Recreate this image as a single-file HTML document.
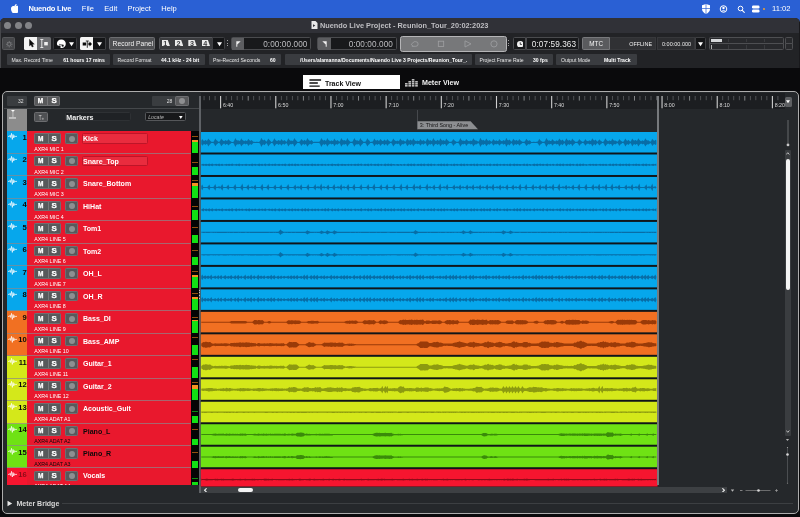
<!DOCTYPE html><html><head><meta charset="utf-8"><title>Nuendo Live Project</title><style>
*{box-sizing:border-box;margin:0;padding:0}
html,body{width:800px;height:517px;overflow:hidden;background:#0a0a0c}
body{position:relative;font-family:"Liberation Sans",sans-serif;color:#fff;-webkit-font-smoothing:antialiased}
#root{position:absolute;left:0;top:0;width:800px;height:517px;transform:translateZ(0);will-change:transform}
.a{position:absolute}
.t{position:absolute;white-space:nowrap;line-height:1}
#menubar{left:0;top:0;width:800px;height:26px;background:#2a60d4}
#menubar .t{font-size:7.500px;top:5.300px;color:#fff}
#win{left:0;top:18px;width:800px;height:49.500px;background:#222326;border-radius:5px 5px 0 0;overflow:hidden}
#titlebar{left:0;top:0;width:800px;height:15px;background:#303137}
.tl{width:7px;height:7px;border-radius:50%;background:#828387;top:4.100px}
#panel{left:2px;top:90.800px;width:796.500px;height:423.600px;border:1.600px solid #adadad;border-radius:5px;background:#25282b;overflow:hidden}
.btn{background:#58595b;border:0.600px solid #6e6f72;border-radius:1.200px}
.ms{font-family:"Liberation Sans",sans-serif;font-weight:bold;font-size:6.500px;color:#fff;-webkit-text-stroke:0.250px #fff}
.info{top:54.300px;height:10.700px;background:#3a3c40;border-radius:1px}
.info .t{font-size:5.100px;top:3.400px;color:#e8e8e8}
.info .b{font-weight:bold;color:#fff}
.tfield{background:#18191b;border:0.6px solid #4c4d50;border-radius:1.5px}
</style></head><body><div id="root">
<div id="menubar" class="a">
<svg class="a" style="left:10.500px;top:4px" width="7.600" height="9.200" viewBox="0 0 170 200"><path fill="#fff" d="M150 153c-3 7-7 14-11 20-6 8-11 14-14 17-6 5-12 8-18 8-5 0-10-1-17-4-6-3-12-4-18-4s-12 1-19 4c-6 3-12 4-16 4-6 0-13-3-19-9-4-3-9-9-15-18C-3 162-8 150-12 137-16 123-18 110-18 97c0-15 3-28 10-38 5-8 12-15 20-20 8-5 17-7 27-7 5 0 12 2 21 5 9 3 14 5 17 5 2 0 8-2 19-6 10-4 19-5 26-5 19 2 34 9 44 23-17 10-26 25-26 44 0 15 6 27 16 37 5 4 10 8 16 10-1 4-3 7-4 11zM107-6c0 11-4 22-12 32-10 12-22 18-35 17 0-1 0-3 0-4 0-11 5-23 13-32 4-5 10-9 16-12 7-3 13-5 19-5 0 1 0 3 0 4z" transform="translate(18 8)"/></svg>
<div class="t" style="left:28.5px;font-weight:bold;letter-spacing:-0.200px;">Nuendo Live</div>
<div class="t" style="left:81.8px;">File</div>
<div class="t" style="left:104.3px;">Edit</div>
<div class="t" style="left:127.5px;">Project</div>
<div class="t" style="left:161.3px;">Help</div>
<div class="t" style="left:772px;font-size:7.600px">11:02</div>
<svg class="a" style="left:700px;top:3px" width="70" height="12" viewBox="0 0 70 12"><path d="M6 1 L10 2.2 V6 C10 8.5 8 10 6 11 C4 10 2 8.500 2 6 V2.200 Z" fill="#fff"/><path d="M6 1V11M2 5.500H10" stroke="#2a60d4" stroke-width="0.700"/><circle cx="23.500" cy="6" r="3.300" fill="none" stroke="#fff" stroke-width="1"/><circle cx="23.500" cy="5" r="1.200" fill="#fff"/><path d="M21.300 8.200a2.500 2 0 0 1 4.400 0z" fill="#fff"/><circle cx="40.500" cy="5.500" r="2.300" fill="none" stroke="#fff" stroke-width="1"/><path d="M42.200 7.300L44.300 9.400" stroke="#fff" stroke-width="1.100" stroke-linecap="round"/><rect x="52" y="2.500" width="7.500" height="3" rx="1.200" fill="#fff"/><rect x="52" y="6.500" width="7.500" height="3" rx="1.200" fill="#fff"/><circle cx="64" cy="6" r="1" fill="#f0a030"/></svg>
</div>
<div id="win" class="a">
<div id="titlebar" class="a">
<div class="a tl" style="left:4px"></div>
<div class="a tl" style="left:14.6px"></div>
<div class="a tl" style="left:25.4px"></div>
<svg class="a" style="left:310.500px;top:3px" width="7" height="8" viewBox="0 0 7 8"><path d="M0.500 0H4.500L6.500 2V8H0.500Z" fill="#e8e8e8"/><path d="M2 3.200L4.300 4.600L2 6Z" fill="#303137"/></svg>
<div class="t" style="left:320px;top:3.800px;font-size:7.350px;font-weight:bold;color:#bebec2">Nuendo Live Project - Reunion_Tour_20:02:2023</div>
</div>
</div>
<div class="a" style="left:2px;top:37px;width:13.3px;height:13.2px;background:#454649;border:0.600px solid #57585b;border-radius:1.500px"><svg class="a" style="left:3.200px;top:3px" width="6.500" height="6.500" viewBox="0 0 10 10"><circle cx="5" cy="5" r="2.600" fill="none" stroke="#737477" stroke-width="1.600"/><g stroke="#737477" stroke-width="1.500"><path d="M5 0V2M5 8V10M0 5H2M8 5H10M1.500 1.500L2.900 2.900M7.100 7.100L8.500 8.500M1.500 8.500L2.900 7.100M7.100 2.900L8.500 1.500"/></g></svg></div>
<div class="a" style="left:24px;top:37px;width:13.3px;height:13px;background:#f4f4f4;border-radius:1.5px 0 0 1.5px"><svg class="a" style="left:4.600px;top:2.300px" width="6" height="8.500" viewBox="0 0 6 8.500"><path d="M0.400 0.200V7L2 5.700L3 8.100L4.400 7.500L3.400 5.200H5.400Z" fill="#0a0a0a" stroke="#0a0a0a" stroke-width="0.300"/></svg></div>
<div class="a" style="left:37.3px;top:37px;width:13.4px;height:13px;background:#6c6d70;border-radius:0 1.500px 1.500px 0"><svg class="a" style="left:2.500px;top:2px" width="10" height="9" viewBox="0 0 10 9"><path d="M0.300 0.500H3.300M0.300 8.500H3.300M1.800 0.500V8.500" stroke="#f0f0f0" stroke-width="0.900" fill="none"/><rect x="4.200" y="3" width="3.600" height="3.400" fill="#f0f0f0"/></svg></div>
<div class="a" style="left:53.4px;top:37px;width:23.3px;height:13px;background:#141517;border:0.600px solid #3a3b3e;border-radius:1.500px"><svg class="a" style="left:1.300px;top:0.900px" width="20" height="10" viewBox="0 0 20 10"><path d="M5.300 0.600C7.900 0.600 9.800 2.400 9.800 4.800C9.800 7.300 8 9.100 5.600 9.100C4.600 9.100 4.200 8.500 4.500 7.700C4.800 6.900 4.200 6.400 3.300 6.700C2 7.100 0.900 6.300 0.900 4.800C0.900 2.400 2.700 0.600 5.300 0.600Z" fill="#fff"/><circle cx="6.700" cy="6.700" r="1.100" fill="#141517"/><path d="M3 5.300L6 5.900" stroke="#141517" stroke-width="0.600"/><path d="M13 3.200H18L15.500 7.200Z" fill="#fff"/></svg></div>
<div class="a" style="left:80px;top:37px;width:13.2px;height:13px;background:#f4f4f4;border-radius:1.5px 0 0 1.5px"><svg class="a" style="left:1.500px;top:1.500px" width="10" height="10" viewBox="0 0 10 10"><path d="M0.700 3.500H4.200V6.500H0.700Z M6.400 3.700H7.600V2.400L10 5L7.600 7.600V6.300H6.400Z" fill="#0a0a0a"/><path d="M5.300 2V8.800M3.800 2H6.800" stroke="#0a0a0a" stroke-width="0.800"/></svg></div>
<div class="a" style="left:93.2px;top:37px;width:12.8px;height:13px;background:#141517;border:0.6px solid #3e3f42;border-left:none;border-radius:0 1.500px 1.500px 0"><svg class="a" style="left:3.500px;top:4.200px" width="5" height="4.500" viewBox="0 0 5 4"><path d="M0 0H5L2.500 4Z" fill="#fff"/></svg></div>
<div class="a" style="left:109px;top:37px;width:46px;height:13px;background:#4e4f52;border:0.6px solid #6c6d70;border-radius:1.5px"><div class="t" style="left:2.600px;top:3.200px;font-size:6.700px;color:#f2f2f2">Record Panel</div></div>
<div class="a" style="left:159px;top:37px;width:54px;height:13px;background:#3a3b3e;border:0.600px solid #55565a;border-radius:1.500px 0 0 1.500px"></div>
<div class="a" style="left:161.6px;top:39.500px;width:8.400px;height:6.800px;background:#ececec;clip-path:polygon(0 0,72% 0,100% 100%,0 100%)"><div class="t" style="left:1.600px;top:0px;font-size:7.200px;font-weight:bold;color:#3a3b3e">1</div></div>
<div class="a" style="left:174.97px;top:39.500px;width:8.400px;height:6.800px;background:#ececec;clip-path:polygon(0 0,72% 0,100% 100%,0 100%)"><div class="t" style="left:1.600px;top:0px;font-size:7.200px;font-weight:bold;color:#3a3b3e">2</div></div>
<div class="a" style="left:188.34px;top:39.500px;width:8.400px;height:6.800px;background:#ececec;clip-path:polygon(0 0,72% 0,100% 100%,0 100%)"><div class="t" style="left:1.600px;top:0px;font-size:7.200px;font-weight:bold;color:#3a3b3e">3</div></div>
<div class="a" style="left:201.70999999999998px;top:39.500px;width:8.400px;height:6.800px;background:#ececec;clip-path:polygon(0 0,72% 0,100% 100%,0 100%)"><div class="t" style="left:1.600px;top:0px;font-size:7.200px;font-weight:bold;color:#3a3b3e">4</div></div>
<div class="a" style="left:212.3px;top:37px;width:13px;height:13px;background:#141517;border:0.600px solid #3e3f42;border-radius:0 1.500px 1.500px 0"><svg class="a" style="left:3.800px;top:4.200px" width="5" height="4.500" viewBox="0 0 5 4"><path d="M0 0H5L2.500 4Z" fill="#fff"/></svg></div>
<div class="a" style="left:227px;top:40.3px;width:1px;height:1px;background:#a0a0a0"></div>
<div class="a" style="left:227px;top:42.599999999999994px;width:1px;height:1px;background:#a0a0a0"></div>
<div class="a" style="left:227px;top:44.9px;width:1px;height:1px;background:#a0a0a0"></div>
<div class="a" style="left:230.8px;top:37px;width:80.7px;height:13px;background:#18191b;border:0.6px solid #4a4b4e;border-radius:1.5px"><div class="a" style="left:0;top:0;width:12.500px;height:11.800px;background:#5c5d60"><svg class="a" style="left:4px;top:3px" width="5" height="6" viewBox="0 0 5 6"><path d="M0.300 0.300H4.700L1.300 3.600V5.800H0.300Z" fill="#eee"/></svg></div><div class="t" style="right:3px;top:2.600px;font-size:8.200px;color:#bdbdc0;letter-spacing:0.100px">0:00:00.000</div></div>
<div class="a" style="left:317px;top:37px;width:80px;height:13px;background:#18191b;border:0.6px solid #4a4b4e;border-radius:1.5px"><div class="a" style="left:0;top:0;width:12.500px;height:11.800px;background:#5c5d60"><svg class="a" style="left:3.500px;top:3px" width="5" height="6" viewBox="0 0 5 6"><path d="M0.300 0.300H4.700V5.800H3.700V3.600Z" fill="#eee"/></svg></div><div class="t" style="right:3px;top:2.600px;font-size:8.200px;color:#bdbdc0;letter-spacing:0.100px">0:00:00.000</div></div>
<div class="a" style="left:400px;top:35.5px;width:106.5px;height:16px;background:#77787a;border:1.200px solid #b5b5b7;border-radius:2.500px"><svg class="a" style="left:0;top:0" width="104" height="13.600" viewBox="0 0 104 13.600"><g fill="none" stroke="#a0a1a3" stroke-width="0.800"><path d="M10.800 9.300H14.800A2.300 2.300 0 0 0 14.800 4.700H13.200L10.200 7.300L12 9.300"/><rect x="37.300" y="4.200" width="5.400" height="5.400"/><path d="M64 3.800L70 6.900L64 10Z"/><circle cx="93" cy="6.900" r="3.100"/></g></svg></div>
<div class="a" style="left:507.8px;top:40.3px;width:1px;height:1px;background:#a0a0a0"></div>
<div class="a" style="left:507.8px;top:42.599999999999994px;width:1px;height:1px;background:#a0a0a0"></div>
<div class="a" style="left:507.8px;top:44.9px;width:1px;height:1px;background:#a0a0a0"></div>
<div class="a" style="left:513px;top:37px;width:12.5px;height:13px;background:#18191b;border:0.600px solid #4a4b4e;border-radius:1.500px 0 0 1.500px"><svg class="a" style="left:2.700px;top:2.800px" width="6.500" height="6.500" viewBox="0 0 10 10"><circle cx="5" cy="5" r="5" fill="#f2f2f2"/><path d="M5 2V5.300H7.500" stroke="#18191b" stroke-width="1.200" fill="none"/></svg></div>
<div class="a" style="left:525.5px;top:37px;width:53.5px;height:13px;background:#18191b;border:0.6px solid #4a4b4e;border-radius:0 1.500px 1.500px 0"><div class="t" style="left:5.300px;top:2.500px;font-size:8.200px;color:#ececec;letter-spacing:0.1px">0:07:59.363</div></div>
<div class="a" style="left:582px;top:37px;width:27.5px;height:13px;background:#5a5b5e;border:0.6px solid #78797c;border-radius:1.5px 0 0 1.5px"><div class="t" style="left:6.300px;top:3.400px;font-size:6.300px;color:#f4f4f4">MTC</div></div>
<div class="a" style="left:609.5px;top:37px;width:46px;height:13px;background:#303134;border:0.600px solid #37383b;border-left:none"><div class="t" style="right:2.500px;top:3.700px;font-size:5.400px;color:#f2f2f2">OFFLINE</div></div>
<div class="a" style="left:656.5px;top:37px;width:38px;height:13px;background:#2c2d30;border:0.600px solid #37383b"><div class="t" style="left:4.500px;top:3.700px;font-size:5.500px;color:#ececec">0:00:00.000</div></div>
<div class="a" style="left:694.5px;top:37px;width:11px;height:13px;background:#141517;border:0.6px solid #3e3f42;border-radius:0 1.500px 1.500px 0"><svg class="a" style="left:2.800px;top:4.200px" width="5" height="4.500" viewBox="0 0 5 4"><path d="M0 0H5L2.500 4Z" fill="#fff"/></svg></div>
<div class="a" style="left:709px;top:37px;width:74.7px;height:7px;background:#28292c;border:0.600px solid #4e4f52;border-radius:1.500px 1.500px 0 0"><div class="a" style="left:1px;top:0.800px;width:10.500px;height:3.200px;background:#d6d8da"></div><div class="a" style="left:18px;top:0.800px;width:0.600px;height:3.200px;background:#3a3b3e"></div><div class="a" style="left:36px;top:0.800px;width:0.600px;height:3.200px;background:#3a3b3e"></div><div class="a" style="left:54px;top:0.800px;width:0.600px;height:3.200px;background:#3a3b3e"></div></div>
<div class="a" style="left:709px;top:43.4px;width:74.7px;height:7px;background:#28292c;border:0.600px solid #4e4f52;border-radius:0 0 1.500px 1.500px"><div class="a" style="left:1px;top:1px;width:0.800px;height:3.200px;background:#b0b0b0"></div><div class="a" style="left:18px;top:1px;width:0.600px;height:3.200px;background:#3a3b3e"></div><div class="a" style="left:36px;top:1px;width:0.600px;height:3.200px;background:#3a3b3e"></div><div class="a" style="left:54px;top:1px;width:0.600px;height:3.200px;background:#3a3b3e"></div></div>
<div class="a" style="left:785.2px;top:37px;width:7.5px;height:7px;background:#28292c;border:0.600px solid #4e4f52;border-radius:1.500px 1.500px 0 0"></div>
<div class="a" style="left:785.2px;top:43.4px;width:7.5px;height:7px;background:#28292c;border:0.600px solid #4e4f52;border-radius:0 0 1.500px 1.500px"></div>
<div class="a info" style="left:7px;width:102.5px"><div class="t" style="left:4.5px">Max. Record Time</div><div class="t b" style="left:56.2px">61 hours 17 mins</div></div>
<div class="a info" style="left:113px;width:91.5px"><div class="t" style="left:4.5px">Record Format</div><div class="t b" style="left:48px">44.1 kHz - 24 bit</div></div>
<div class="a info" style="left:208.5px;width:72.5px"><div class="t" style="left:4.5px">Pre-Record Seconds</div><div class="t b" style="left:61.5px">60</div></div>
<div class="a info" style="left:284.5px;width:187px"><div class="t b" style="left:15.5px">/Users/alamanna/Documents/Nuendo Live 3 Projects/Reunion_Tour_.</div></div>
<div class="a info" style="left:475px;width:77.5px"><div class="t" style="left:4.5px">Project Frame Rate</div><div class="t b" style="left:58px">30 fps</div></div>
<div class="a info" style="left:556px;width:80.5px"><div class="t" style="left:5px">Output Mode</div><div class="t b" style="left:48px">Multi Track</div></div>
<div class="a" style="left:0px;top:22px;width:1px;height:45.5px;background:#46474b"></div>
<div class="a" style="left:799px;top:22px;width:1px;height:45.5px;background:#19191c"></div>
<div class="a" style="left:303px;top:75px;width:97px;height:14.4px;background:#fff"><svg class="a" style="left:5.500px;top:4.200px" width="13" height="8.400" viewBox="0 0 13 9"><path d="M0 1H12.500M0 4.300H9M0 7.600H11" stroke="#111" stroke-width="1.500"/></svg><div class="t" style="left:22px;top:4.500px;font-size:7px;font-weight:bold;color:#111">Track View</div></div>
<svg class="a" style="left:404.500px;top:78.800px" width="13" height="8" viewBox="0 0 13 8"><g fill="#e6e6e6"><rect x="0" y="4.200" width="2.600" height="1.300"/><rect x="0" y="6.200" width="2.600" height="1.300"/><rect x="3.400" y="2.200" width="2.600" height="1.300"/><rect x="3.400" y="4.200" width="2.600" height="1.300"/><rect x="3.400" y="6.200" width="2.600" height="1.300"/><rect x="6.800" y="0.200" width="2.600" height="1.300"/><rect x="6.800" y="2.200" width="2.600" height="1.300"/><rect x="6.800" y="4.200" width="2.600" height="1.300"/><rect x="6.800" y="6.200" width="2.600" height="1.300"/><rect x="10.200" y="2.200" width="2.600" height="1.300"/><rect x="10.200" y="4.200" width="2.600" height="1.300"/><rect x="10.200" y="6.200" width="2.600" height="1.300"/></g></svg>
<div class="t" style="left:422px;top:79.800px;font-size:7.100px;font-weight:bold;color:#f0f0f0">Meter View</div>
<div id="panel" class="a"></div>
<div class="a" style="left:4px;top:108.3px;width:195.5px;height:0.8px;background:#45484b"></div>
<div class="a" style="left:7px;top:96px;width:19.5px;height:9.8px;background:#3a3d40;border-radius:1px"><div class="t" style="right:3px;top:2.600px;font-size:5px;color:#e0e0e0">32</div></div>
<div class="a btn" style="left:33.7px;top:95.6px;width:26.800px;height:10.5px"><div class="a" style="left:12.800px;top:0;width:0.600px;height:100%;background:#77787a"></div><div class="t ms" style="left:-0.600px;width:12.800px;text-align:center;top:1.4500000000000002px">M</div><div class="t ms" style="left:13.400px;width:12.200px;text-align:center;top:1.4500000000000002px;transform:scaleX(1.22)">S</div></div>
<div class="a" style="left:152.2px;top:96px;width:23px;height:9.8px;background:#3a3d40;border-radius:1px 0 0 1px"><div class="t" style="right:3px;top:2.600px;font-size:5px;color:#e0e0e0">28</div></div>
<div class="a btn" style="left:175.2px;top:95.5px;width:13.5px;height:10.5px"><div class="a" style="left:3.1500000000000004px;top:1.6500000000000004px;width:6px;height:6px;border-radius:50%;background:#8e8f91"></div></div>
<div class="a" style="left:7px;top:109px;width:20px;height:22.3px;background:#8c8c8c"><svg class="a" style="left:1.700px;top:1.200px" width="7.600" height="9" viewBox="0 0 7.600 9"><path d="M2 0.100H5.900L3.950 2Z" fill="#fff"/><path d="M3.950 1.500V7.200" stroke="#e8e8e8" stroke-width="0.600"/><path d="M0 8H7.600" stroke="#fff" stroke-width="0.900"/></svg></div>
<div class="a" style="left:34px;top:111.5px;width:13.5px;height:10.5px;background:#4e5053;border:0.6px solid #6c6d70;border-radius:1.5px"><svg class="a" style="left:3.300px;top:2.500px" width="8" height="6" viewBox="0 0 8 6"><path d="M0.400 0H4L2.200 1.800Z" fill="#b4b4b4"/><path d="M2.200 1.500V5" stroke="#b4b4b4" stroke-width="0.600"/><path d="M3.700 3.800H5.900M4.800 2.700V4.900" stroke="#b4b4b4" stroke-width="0.600"/></svg></div>
<div class="a" style="left:64.5px;top:112.2px;width:66.5px;height:9px;background:#1f2225;border-radius:1.5px;border:0.5px solid #2e3134"><div class="t" style="left:0.800px;top:1.500px;font-size:7.100px;font-weight:bold;color:#f2f2f2">Markers</div></div>
<div class="a" style="left:145px;top:112.3px;width:40.5px;height:9.2px;background:#17181a;border:0.6px solid #55575a;border-radius:1.5px"><div class="t" style="left:2.200px;top:1.800px;font-size:5.200px;font-style:italic;color:#b8b8b8">Locate</div><svg class="a" style="left:33px;top:2.800px" width="3.600" height="3" viewBox="0 0 5 4"><path d="M0 0H5L2.500 4Z" fill="#fff"/></svg></div>
<div class="a" style="left:0;top:131.3px;width:800px;height:353.7px;overflow:hidden">
<div class="a" style="left:27px;top:0;width:164.200px;height:400px;background:#e9182d"></div>
<div class="a" style="left:191.200px;top:0;width:7.400px;height:400px;background:#050505"></div>
<div class="a" style="left:7px;top:0.0px;width:20px;height:22.48px;background:#06a7ec"></div>
<div class="a" style="left:7px;top:21.48px;width:184.200px;height:0.800px;background:rgba(140,135,140,0.700)"></div>
<svg class="a" style="left:7.800px;top:2.2px" width="9.200" height="6.800" viewBox="0 0 10 9" preserveAspectRatio="none"><path d="M0 4.500H1.600L2.300 3L3 6L3.800 0.500L4.700 8.500L5.500 2L6.300 6.500L7 3.500L7.600 5L8.200 4.500H10" fill="none" stroke="#fff" stroke-width="0.850" stroke-linejoin="round"/></svg>
<div class="t" style="left:7px;width:19.500px;text-align:right;top:2.6px;font-size:7.600px;font-weight:bold;letter-spacing:-0.150px;color:#0a0a0a">1</div>
<div class="a" style="left:0;top:0.0px">
<div class="a btn" style="left:33.9px;top:2.1px;width:26.800px;height:10.4px"><div class="a" style="left:12.800px;top:0;width:0.600px;height:100%;background:#77787a"></div><div class="t ms" style="left:-0.600px;width:12.800px;text-align:center;top:1.4000000000000004px">M</div><div class="t ms" style="left:13.400px;width:12.200px;text-align:center;top:1.4000000000000004px;transform:scaleX(1.22)">S</div></div>
<div class="a btn" style="left:64.5px;top:2.1px;width:13.5px;height:10.4px"><div class="a" style="left:3.1500000000000004px;top:1.6000000000000005px;width:6px;height:6px;border-radius:50%;background:#8e8f91"></div></div>
</div>
<div class="a" style="left:82px;top:2.1px;width:66.300px;height:10.200px;background:#e92c3e;border:0.600px solid #bd1528;border-radius:1.500px"></div>
<div class="t" style="left:83px;top:4.0px;font-size:7.050px;font-weight:bold;color:#fff">Kick</div>
<div class="t" style="left:34.200px;top:15.8px;font-size:5.300px;color:#fff">AXR4 MIC 1</div>
<div class="a" style="left:192px;top:8.780000000000001px;width:6.300px;height:12.8px;background:#12e014"></div>
<div class="a" style="left:192px;top:8.780000000000001px;width:6.300px;height:1.5px;background:#f59222"></div>
<div class="a" style="left:192px;top:4.3999999999999995px;width:6.300px;height:0.800px;background:#91500f"></div>
<div class="a" style="left:7px;top:22.48px;width:20px;height:22.48px;background:#06a7ec"></div>
<div class="a" style="left:7px;top:43.96px;width:184.200px;height:0.800px;background:rgba(140,135,140,0.700)"></div>
<svg class="a" style="left:7.800px;top:24.68px" width="9.200" height="6.800" viewBox="0 0 10 9" preserveAspectRatio="none"><path d="M0 4.500H1.600L2.300 3L3 6L3.800 0.500L4.700 8.500L5.500 2L6.300 6.500L7 3.500L7.600 5L8.200 4.500H10" fill="none" stroke="#fff" stroke-width="0.850" stroke-linejoin="round"/></svg>
<div class="t" style="left:7px;width:19.500px;text-align:right;top:25.080000000000002px;font-size:7.600px;font-weight:bold;letter-spacing:-0.150px;color:#0a0a0a">2</div>
<div class="a" style="left:0;top:22.48px">
<div class="a btn" style="left:33.9px;top:2.1px;width:26.800px;height:10.4px"><div class="a" style="left:12.800px;top:0;width:0.600px;height:100%;background:#77787a"></div><div class="t ms" style="left:-0.600px;width:12.800px;text-align:center;top:1.4000000000000004px">M</div><div class="t ms" style="left:13.400px;width:12.200px;text-align:center;top:1.4000000000000004px;transform:scaleX(1.22)">S</div></div>
<div class="a btn" style="left:64.5px;top:2.1px;width:13.5px;height:10.4px"><div class="a" style="left:3.1500000000000004px;top:1.6000000000000005px;width:6px;height:6px;border-radius:50%;background:#8e8f91"></div></div>
</div>
<div class="a" style="left:82px;top:24.580000000000002px;width:66.300px;height:10.200px;background:#e92c3e;border:0.600px solid #bd1528;border-radius:1.500px"></div>
<div class="t" style="left:83px;top:26.48px;font-size:7.050px;font-weight:bold;color:#fff">Snare_Top</div>
<div class="t" style="left:34.200px;top:38.28px;font-size:5.300px;color:#fff">AXR4 MIC 2</div>
<div class="a" style="left:192px;top:35.660000000000004px;width:6.300px;height:8.4px;background:#12e014"></div>
<div class="a" style="left:192px;top:31.080000000000002px;width:6.300px;height:0.800px;background:#91500f"></div>
<div class="a" style="left:7px;top:44.96px;width:20px;height:22.48px;background:#06a7ec"></div>
<div class="a" style="left:7px;top:66.44px;width:184.200px;height:0.800px;background:rgba(140,135,140,0.700)"></div>
<svg class="a" style="left:7.800px;top:47.160000000000004px" width="9.200" height="6.800" viewBox="0 0 10 9" preserveAspectRatio="none"><path d="M0 4.500H1.600L2.300 3L3 6L3.800 0.500L4.700 8.500L5.500 2L6.300 6.500L7 3.500L7.600 5L8.200 4.500H10" fill="none" stroke="#fff" stroke-width="0.850" stroke-linejoin="round"/></svg>
<div class="t" style="left:7px;width:19.500px;text-align:right;top:47.56px;font-size:7.600px;font-weight:bold;letter-spacing:-0.150px;color:#0a0a0a">3</div>
<div class="a" style="left:0;top:44.96px">
<div class="a btn" style="left:33.9px;top:2.1px;width:26.800px;height:10.4px"><div class="a" style="left:12.800px;top:0;width:0.600px;height:100%;background:#77787a"></div><div class="t ms" style="left:-0.600px;width:12.800px;text-align:center;top:1.4000000000000004px">M</div><div class="t ms" style="left:13.400px;width:12.200px;text-align:center;top:1.4000000000000004px;transform:scaleX(1.22)">S</div></div>
<div class="a btn" style="left:64.5px;top:2.1px;width:13.5px;height:10.4px"><div class="a" style="left:3.1500000000000004px;top:1.6000000000000005px;width:6px;height:6px;border-radius:50%;background:#8e8f91"></div></div>
</div>
<div class="t" style="left:83px;top:48.96px;font-size:7.050px;font-weight:bold;color:#fff">Snare_Bottom</div>
<div class="t" style="left:34.200px;top:60.760000000000005px;font-size:5.300px;color:#fff">AXR4 MIC 3</div>
<div class="a" style="left:192px;top:51.53999999999999px;width:6.300px;height:15px;background:#12e014"></div>
<div class="a" style="left:192px;top:51.53999999999999px;width:6.300px;height:3.3px;background:#f59222"></div>
<div class="a" style="left:192px;top:48.56px;width:6.300px;height:0.800px;background:#91500f"></div>
<div class="a" style="left:7px;top:67.44px;width:20px;height:22.48px;background:#06a7ec"></div>
<div class="a" style="left:7px;top:88.92px;width:184.200px;height:0.800px;background:rgba(140,135,140,0.700)"></div>
<svg class="a" style="left:7.800px;top:69.64px" width="9.200" height="6.800" viewBox="0 0 10 9" preserveAspectRatio="none"><path d="M0 4.500H1.600L2.300 3L3 6L3.800 0.500L4.700 8.500L5.500 2L6.300 6.500L7 3.500L7.600 5L8.200 4.500H10" fill="none" stroke="#fff" stroke-width="0.850" stroke-linejoin="round"/></svg>
<div class="t" style="left:7px;width:19.500px;text-align:right;top:70.03999999999999px;font-size:7.600px;font-weight:bold;letter-spacing:-0.150px;color:#0a0a0a">4</div>
<div class="a" style="left:0;top:67.44px">
<div class="a btn" style="left:33.9px;top:2.1px;width:26.800px;height:10.4px"><div class="a" style="left:12.800px;top:0;width:0.600px;height:100%;background:#77787a"></div><div class="t ms" style="left:-0.600px;width:12.800px;text-align:center;top:1.4000000000000004px">M</div><div class="t ms" style="left:13.400px;width:12.200px;text-align:center;top:1.4000000000000004px;transform:scaleX(1.22)">S</div></div>
<div class="a btn" style="left:64.5px;top:2.1px;width:13.5px;height:10.4px"><div class="a" style="left:3.1500000000000004px;top:1.6000000000000005px;width:6px;height:6px;border-radius:50%;background:#8e8f91"></div></div>
</div>
<div class="t" style="left:83px;top:71.44px;font-size:7.050px;font-weight:bold;color:#fff">HiHat</div>
<div class="t" style="left:34.200px;top:83.24px;font-size:5.300px;color:#fff">AXR4 MIC 4</div>
<div class="a" style="left:192px;top:78.32px;width:6.300px;height:10.7px;background:#12e014"></div>
<div class="a" style="left:192px;top:74.53999999999999px;width:6.300px;height:0.800px;background:#91500f"></div>
<div class="a" style="left:7px;top:89.92px;width:20px;height:22.48px;background:#06a7ec"></div>
<div class="a" style="left:7px;top:111.4px;width:184.200px;height:0.800px;background:rgba(140,135,140,0.700)"></div>
<svg class="a" style="left:7.800px;top:92.12px" width="9.200" height="6.800" viewBox="0 0 10 9" preserveAspectRatio="none"><path d="M0 4.500H1.600L2.300 3L3 6L3.800 0.500L4.700 8.500L5.500 2L6.300 6.500L7 3.500L7.600 5L8.200 4.500H10" fill="none" stroke="#fff" stroke-width="0.850" stroke-linejoin="round"/></svg>
<div class="t" style="left:7px;width:19.500px;text-align:right;top:92.52px;font-size:7.600px;font-weight:bold;letter-spacing:-0.150px;color:#0a0a0a">5</div>
<div class="a" style="left:0;top:89.92px">
<div class="a btn" style="left:33.9px;top:2.1px;width:26.800px;height:10.4px"><div class="a" style="left:12.800px;top:0;width:0.600px;height:100%;background:#77787a"></div><div class="t ms" style="left:-0.600px;width:12.800px;text-align:center;top:1.4000000000000004px">M</div><div class="t ms" style="left:13.400px;width:12.200px;text-align:center;top:1.4000000000000004px;transform:scaleX(1.22)">S</div></div>
<div class="a btn" style="left:64.5px;top:2.1px;width:13.5px;height:10.4px"><div class="a" style="left:3.1500000000000004px;top:1.6000000000000005px;width:6px;height:6px;border-radius:50%;background:#8e8f91"></div></div>
</div>
<div class="t" style="left:83px;top:93.92px;font-size:7.050px;font-weight:bold;color:#fff">Tom1</div>
<div class="t" style="left:34.200px;top:105.72px;font-size:5.300px;color:#fff">AXR4 LINE 5</div>
<div class="a" style="left:192px;top:103.7px;width:6.300px;height:7.8px;background:#12e014"></div>
<div class="a" style="left:192px;top:96.02px;width:6.300px;height:0.800px;background:#91500f"></div>
<div class="a" style="left:7px;top:112.4px;width:20px;height:22.48px;background:#06a7ec"></div>
<div class="a" style="left:7px;top:133.88px;width:184.200px;height:0.800px;background:rgba(140,135,140,0.700)"></div>
<svg class="a" style="left:7.800px;top:114.60000000000001px" width="9.200" height="6.800" viewBox="0 0 10 9" preserveAspectRatio="none"><path d="M0 4.500H1.600L2.300 3L3 6L3.800 0.500L4.700 8.500L5.500 2L6.300 6.500L7 3.500L7.600 5L8.200 4.500H10" fill="none" stroke="#fff" stroke-width="0.850" stroke-linejoin="round"/></svg>
<div class="t" style="left:7px;width:19.500px;text-align:right;top:115.0px;font-size:7.600px;font-weight:bold;letter-spacing:-0.150px;color:#0a0a0a">6</div>
<div class="a" style="left:0;top:112.4px">
<div class="a btn" style="left:33.9px;top:2.1px;width:26.800px;height:10.4px"><div class="a" style="left:12.800px;top:0;width:0.600px;height:100%;background:#77787a"></div><div class="t ms" style="left:-0.600px;width:12.800px;text-align:center;top:1.4000000000000004px">M</div><div class="t ms" style="left:13.400px;width:12.200px;text-align:center;top:1.4000000000000004px;transform:scaleX(1.22)">S</div></div>
<div class="a btn" style="left:64.5px;top:2.1px;width:13.5px;height:10.4px"><div class="a" style="left:3.1500000000000004px;top:1.6000000000000005px;width:6px;height:6px;border-radius:50%;background:#8e8f91"></div></div>
</div>
<div class="t" style="left:83px;top:116.4px;font-size:7.050px;font-weight:bold;color:#fff">Tom2</div>
<div class="t" style="left:34.200px;top:128.20000000000002px;font-size:5.300px;color:#fff">AXR4 LINE 6</div>
<div class="a" style="left:192px;top:125.97999999999999px;width:6.300px;height:8px;background:#12e014"></div>
<div class="a" style="left:192px;top:118.8px;width:6.300px;height:0.800px;background:#91500f"></div>
<div class="a" style="left:7px;top:134.88px;width:20px;height:22.48px;background:#06a7ec"></div>
<div class="a" style="left:7px;top:156.35999999999999px;width:184.200px;height:0.800px;background:rgba(140,135,140,0.700)"></div>
<svg class="a" style="left:7.800px;top:137.07999999999998px" width="9.200" height="6.800" viewBox="0 0 10 9" preserveAspectRatio="none"><path d="M0 4.500H1.600L2.300 3L3 6L3.800 0.500L4.700 8.500L5.500 2L6.300 6.500L7 3.500L7.600 5L8.200 4.500H10" fill="none" stroke="#fff" stroke-width="0.850" stroke-linejoin="round"/></svg>
<div class="t" style="left:7px;width:19.500px;text-align:right;top:137.48px;font-size:7.600px;font-weight:bold;letter-spacing:-0.150px;color:#0a0a0a">7</div>
<div class="a" style="left:0;top:134.88px">
<div class="a btn" style="left:33.9px;top:2.1px;width:26.800px;height:10.4px"><div class="a" style="left:12.800px;top:0;width:0.600px;height:100%;background:#77787a"></div><div class="t ms" style="left:-0.600px;width:12.800px;text-align:center;top:1.4000000000000004px">M</div><div class="t ms" style="left:13.400px;width:12.200px;text-align:center;top:1.4000000000000004px;transform:scaleX(1.22)">S</div></div>
<div class="a btn" style="left:64.5px;top:2.1px;width:13.5px;height:10.4px"><div class="a" style="left:3.1500000000000004px;top:1.6000000000000005px;width:6px;height:6px;border-radius:50%;background:#8e8f91"></div></div>
</div>
<div class="t" style="left:83px;top:138.88px;font-size:7.050px;font-weight:bold;color:#fff">OH_L</div>
<div class="t" style="left:34.200px;top:150.68px;font-size:5.300px;color:#fff">AXR4 LINE 7</div>
<div class="a" style="left:192px;top:143.45999999999998px;width:6.300px;height:13px;background:#12e014"></div>
<div class="a" style="left:192px;top:143.45999999999998px;width:6.300px;height:1.9px;background:#f59222"></div>
<div class="a" style="left:192px;top:139.48px;width:6.300px;height:0.800px;background:#91500f"></div>
<div class="a" style="left:7px;top:157.36px;width:20px;height:22.48px;background:#06a7ec"></div>
<div class="a" style="left:7px;top:178.84px;width:184.200px;height:0.800px;background:rgba(140,135,140,0.700)"></div>
<svg class="a" style="left:7.800px;top:159.56px" width="9.200" height="6.800" viewBox="0 0 10 9" preserveAspectRatio="none"><path d="M0 4.500H1.600L2.300 3L3 6L3.800 0.500L4.700 8.500L5.500 2L6.300 6.500L7 3.500L7.600 5L8.200 4.500H10" fill="none" stroke="#fff" stroke-width="0.850" stroke-linejoin="round"/></svg>
<div class="t" style="left:7px;width:19.500px;text-align:right;top:159.96px;font-size:7.600px;font-weight:bold;letter-spacing:-0.150px;color:#0a0a0a">8</div>
<div class="a" style="left:0;top:157.36px">
<div class="a btn" style="left:33.9px;top:2.1px;width:26.800px;height:10.4px"><div class="a" style="left:12.800px;top:0;width:0.600px;height:100%;background:#77787a"></div><div class="t ms" style="left:-0.600px;width:12.800px;text-align:center;top:1.4000000000000004px">M</div><div class="t ms" style="left:13.400px;width:12.200px;text-align:center;top:1.4000000000000004px;transform:scaleX(1.22)">S</div></div>
<div class="a btn" style="left:64.5px;top:2.1px;width:13.5px;height:10.4px"><div class="a" style="left:3.1500000000000004px;top:1.6000000000000005px;width:6px;height:6px;border-radius:50%;background:#8e8f91"></div></div>
</div>
<div class="t" style="left:83px;top:161.36px;font-size:7.050px;font-weight:bold;color:#fff">OH_R</div>
<div class="t" style="left:34.200px;top:173.16000000000003px;font-size:5.300px;color:#fff">AXR4 LINE 8</div>
<div class="a" style="left:192px;top:165.34px;width:6.300px;height:13.6px;background:#12e014"></div>
<div class="a" style="left:192px;top:165.34px;width:6.300px;height:2.3px;background:#f59222"></div>
<div class="a" style="left:192px;top:161.66px;width:6.300px;height:0.800px;background:#91500f"></div>
<div class="a" style="left:7px;top:179.84px;width:20px;height:22.48px;background:#f17022"></div>
<div class="a" style="left:7px;top:201.32px;width:184.200px;height:0.800px;background:rgba(140,135,140,0.700)"></div>
<svg class="a" style="left:7.800px;top:182.04px" width="9.200" height="6.800" viewBox="0 0 10 9" preserveAspectRatio="none"><path d="M0 4.500H1.600L2.300 3L3 6L3.800 0.500L4.700 8.500L5.500 2L6.300 6.500L7 3.500L7.600 5L8.200 4.500H10" fill="none" stroke="#fff" stroke-width="0.850" stroke-linejoin="round"/></svg>
<div class="t" style="left:7px;width:19.500px;text-align:right;top:182.44px;font-size:7.600px;font-weight:bold;letter-spacing:-0.150px;color:#0a0a0a">9</div>
<div class="a" style="left:0;top:179.84px">
<div class="a btn" style="left:33.9px;top:2.1px;width:26.800px;height:10.4px"><div class="a" style="left:12.800px;top:0;width:0.600px;height:100%;background:#77787a"></div><div class="t ms" style="left:-0.600px;width:12.800px;text-align:center;top:1.4000000000000004px">M</div><div class="t ms" style="left:13.400px;width:12.200px;text-align:center;top:1.4000000000000004px;transform:scaleX(1.22)">S</div></div>
<div class="a btn" style="left:64.5px;top:2.1px;width:13.5px;height:10.4px"><div class="a" style="left:3.1500000000000004px;top:1.6000000000000005px;width:6px;height:6px;border-radius:50%;background:#8e8f91"></div></div>
</div>
<div class="t" style="left:83px;top:183.84px;font-size:7.050px;font-weight:bold;color:#fff">Bass_DI</div>
<div class="t" style="left:34.200px;top:195.64000000000001px;font-size:5.300px;color:#fff">AXR4 LINE 9</div>
<div class="a" style="left:192px;top:188.22px;width:6.300px;height:13.2px;background:#12e014"></div>
<div class="a" style="left:192px;top:188.22px;width:6.300px;height:1.8px;background:#f59222"></div>
<div class="a" style="left:192px;top:185.44px;width:6.300px;height:0.800px;background:#91500f"></div>
<div class="a" style="left:7px;top:202.32px;width:20px;height:22.48px;background:#f17022"></div>
<div class="a" style="left:7px;top:223.79999999999998px;width:184.200px;height:0.800px;background:rgba(140,135,140,0.700)"></div>
<svg class="a" style="left:7.800px;top:204.51999999999998px" width="9.200" height="6.800" viewBox="0 0 10 9" preserveAspectRatio="none"><path d="M0 4.500H1.600L2.300 3L3 6L3.800 0.500L4.700 8.500L5.500 2L6.300 6.500L7 3.500L7.600 5L8.200 4.500H10" fill="none" stroke="#fff" stroke-width="0.850" stroke-linejoin="round"/></svg>
<div class="t" style="left:7px;width:19.500px;text-align:right;top:204.92px;font-size:7.600px;font-weight:bold;letter-spacing:-0.150px;color:#0a0a0a">10</div>
<div class="a" style="left:0;top:202.32px">
<div class="a btn" style="left:33.9px;top:2.1px;width:26.800px;height:10.4px"><div class="a" style="left:12.800px;top:0;width:0.600px;height:100%;background:#77787a"></div><div class="t ms" style="left:-0.600px;width:12.800px;text-align:center;top:1.4000000000000004px">M</div><div class="t ms" style="left:13.400px;width:12.200px;text-align:center;top:1.4000000000000004px;transform:scaleX(1.22)">S</div></div>
<div class="a btn" style="left:64.5px;top:2.1px;width:13.5px;height:10.4px"><div class="a" style="left:3.1500000000000004px;top:1.6000000000000005px;width:6px;height:6px;border-radius:50%;background:#8e8f91"></div></div>
</div>
<div class="t" style="left:83px;top:206.32px;font-size:7.050px;font-weight:bold;color:#fff">Bass_AMP</div>
<div class="t" style="left:34.200px;top:218.12px;font-size:5.300px;color:#fff">AXR4 LINE 10</div>
<div class="a" style="left:192px;top:213.49999999999997px;width:6.300px;height:10.4px;background:#12e014"></div>
<div class="a" style="left:192px;top:205.32px;width:6.300px;height:0.800px;background:#91500f"></div>
<div class="a" style="left:7px;top:224.8px;width:20px;height:22.48px;background:#d4e81a"></div>
<div class="a" style="left:7px;top:246.28px;width:184.200px;height:0.800px;background:rgba(140,135,140,0.700)"></div>
<svg class="a" style="left:7.800px;top:227.0px" width="9.200" height="6.800" viewBox="0 0 10 9" preserveAspectRatio="none"><path d="M0 4.500H1.600L2.300 3L3 6L3.800 0.500L4.700 8.500L5.500 2L6.300 6.500L7 3.500L7.600 5L8.200 4.500H10" fill="none" stroke="#fff" stroke-width="0.850" stroke-linejoin="round"/></svg>
<div class="t" style="left:7px;width:19.500px;text-align:right;top:227.4px;font-size:7.600px;font-weight:bold;letter-spacing:-0.150px;color:#0a0a0a">11</div>
<div class="a" style="left:0;top:224.8px">
<div class="a btn" style="left:33.9px;top:2.1px;width:26.800px;height:10.4px"><div class="a" style="left:12.800px;top:0;width:0.600px;height:100%;background:#77787a"></div><div class="t ms" style="left:-0.600px;width:12.800px;text-align:center;top:1.4000000000000004px">M</div><div class="t ms" style="left:13.400px;width:12.200px;text-align:center;top:1.4000000000000004px;transform:scaleX(1.22)">S</div></div>
<div class="a btn" style="left:64.5px;top:2.1px;width:13.5px;height:10.4px"><div class="a" style="left:3.1500000000000004px;top:1.6000000000000005px;width:6px;height:6px;border-radius:50%;background:#8e8f91"></div></div>
</div>
<div class="t" style="left:83px;top:228.8px;font-size:7.050px;font-weight:bold;color:#fff">Guitar_1</div>
<div class="t" style="left:34.200px;top:240.60000000000002px;font-size:5.300px;color:#fff">AXR4 LINE 11</div>
<div class="a" style="left:192px;top:236.18px;width:6.300px;height:10.2px;background:#12e014"></div>
<div class="a" style="left:192px;top:228.1px;width:6.300px;height:0.800px;background:#91500f"></div>
<div class="a" style="left:7px;top:247.28px;width:20px;height:22.48px;background:#d4e81a"></div>
<div class="a" style="left:7px;top:268.76px;width:184.200px;height:0.800px;background:rgba(140,135,140,0.700)"></div>
<svg class="a" style="left:7.800px;top:249.48px" width="9.200" height="6.800" viewBox="0 0 10 9" preserveAspectRatio="none"><path d="M0 4.500H1.600L2.300 3L3 6L3.800 0.500L4.700 8.500L5.500 2L6.300 6.500L7 3.500L7.600 5L8.200 4.500H10" fill="none" stroke="#fff" stroke-width="0.850" stroke-linejoin="round"/></svg>
<div class="t" style="left:7px;width:19.500px;text-align:right;top:249.88px;font-size:7.600px;font-weight:bold;letter-spacing:-0.150px;color:#0a0a0a">12</div>
<div class="a" style="left:0;top:247.28px">
<div class="a btn" style="left:33.9px;top:2.1px;width:26.800px;height:10.4px"><div class="a" style="left:12.800px;top:0;width:0.600px;height:100%;background:#77787a"></div><div class="t ms" style="left:-0.600px;width:12.800px;text-align:center;top:1.4000000000000004px">M</div><div class="t ms" style="left:13.400px;width:12.200px;text-align:center;top:1.4000000000000004px;transform:scaleX(1.22)">S</div></div>
<div class="a btn" style="left:64.5px;top:2.1px;width:13.5px;height:10.4px"><div class="a" style="left:3.1500000000000004px;top:1.6000000000000005px;width:6px;height:6px;border-radius:50%;background:#8e8f91"></div></div>
</div>
<div class="t" style="left:83px;top:251.28px;font-size:7.050px;font-weight:bold;color:#fff">Guitar_2</div>
<div class="t" style="left:34.200px;top:263.08px;font-size:5.300px;color:#fff">AXR4 LINE 12</div>
<div class="a" style="left:192px;top:253.86px;width:6.300px;height:15px;background:#12e014"></div>
<div class="a" style="left:192px;top:253.86px;width:6.300px;height:3.5px;background:#f59222"></div>
<div class="a" style="left:192px;top:250.78px;width:6.300px;height:0.800px;background:#91500f"></div>
<div class="a" style="left:7px;top:269.76px;width:20px;height:22.48px;background:#d4e81a"></div>
<div class="a" style="left:7px;top:291.24px;width:184.200px;height:0.800px;background:rgba(140,135,140,0.700)"></div>
<svg class="a" style="left:7.800px;top:271.96px" width="9.200" height="6.800" viewBox="0 0 10 9" preserveAspectRatio="none"><path d="M0 4.500H1.600L2.300 3L3 6L3.800 0.500L4.700 8.500L5.500 2L6.300 6.500L7 3.500L7.600 5L8.200 4.500H10" fill="none" stroke="#fff" stroke-width="0.850" stroke-linejoin="round"/></svg>
<div class="t" style="left:7px;width:19.500px;text-align:right;top:272.36px;font-size:7.600px;font-weight:bold;letter-spacing:-0.150px;color:#0a0a0a">13</div>
<div class="a" style="left:0;top:269.76px">
<div class="a btn" style="left:33.9px;top:2.1px;width:26.800px;height:10.4px"><div class="a" style="left:12.800px;top:0;width:0.600px;height:100%;background:#77787a"></div><div class="t ms" style="left:-0.600px;width:12.800px;text-align:center;top:1.4000000000000004px">M</div><div class="t ms" style="left:13.400px;width:12.200px;text-align:center;top:1.4000000000000004px;transform:scaleX(1.22)">S</div></div>
<div class="a btn" style="left:64.5px;top:2.1px;width:13.5px;height:10.4px"><div class="a" style="left:3.1500000000000004px;top:1.6000000000000005px;width:6px;height:6px;border-radius:50%;background:#8e8f91"></div></div>
</div>
<div class="t" style="left:83px;top:273.76px;font-size:7.050px;font-weight:bold;color:#fff">Acoustic_Guit</div>
<div class="t" style="left:34.200px;top:285.56px;font-size:5.300px;color:#fff">AXR4 ADAT A1</div>
<div class="a" style="left:192px;top:284.54px;width:6.300px;height:6.8px;background:#12e014"></div>
<div class="a" style="left:192px;top:279.76px;width:6.300px;height:0.800px;background:#0c8a10"></div>
<div class="a" style="left:7px;top:292.24px;width:20px;height:22.48px;background:#6fe214"></div>
<div class="a" style="left:7px;top:313.72px;width:184.200px;height:0.800px;background:rgba(140,135,140,0.700)"></div>
<svg class="a" style="left:7.800px;top:294.44px" width="9.200" height="6.800" viewBox="0 0 10 9" preserveAspectRatio="none"><path d="M0 4.500H1.600L2.300 3L3 6L3.800 0.500L4.700 8.500L5.500 2L6.300 6.500L7 3.500L7.600 5L8.200 4.500H10" fill="none" stroke="#fff" stroke-width="0.850" stroke-linejoin="round"/></svg>
<div class="t" style="left:7px;width:19.500px;text-align:right;top:294.84000000000003px;font-size:7.600px;font-weight:bold;letter-spacing:-0.150px;color:#0a0a0a">14</div>
<div class="a" style="left:0;top:292.24px">
<div class="a btn" style="left:33.9px;top:2.1px;width:26.800px;height:10.4px"><div class="a" style="left:12.800px;top:0;width:0.600px;height:100%;background:#77787a"></div><div class="t ms" style="left:-0.600px;width:12.800px;text-align:center;top:1.4000000000000004px">M</div><div class="t ms" style="left:13.400px;width:12.200px;text-align:center;top:1.4000000000000004px;transform:scaleX(1.22)">S</div></div>
<div class="a btn" style="left:64.5px;top:2.1px;width:13.5px;height:10.4px"><div class="a" style="left:3.1500000000000004px;top:1.6000000000000005px;width:6px;height:6px;border-radius:50%;background:#8e8f91"></div></div>
</div>
<div class="t" style="left:83px;top:296.24px;font-size:7.050px;font-weight:bold;color:#0a0a0a">Piano_L</div>
<div class="t" style="left:34.200px;top:308.04px;font-size:5.300px;color:#0a0a0a">AXR4 ADAT A2</div>
<div class="a" style="left:192px;top:307.22px;width:6.300px;height:6.6px;background:#12e014"></div>
<div class="a" style="left:192px;top:298.14000000000004px;width:6.300px;height:0.800px;background:#91500f"></div>
<div class="a" style="left:7px;top:314.72px;width:20px;height:22.48px;background:#6fe214"></div>
<div class="a" style="left:7px;top:336.20000000000005px;width:184.200px;height:0.800px;background:rgba(140,135,140,0.700)"></div>
<svg class="a" style="left:7.800px;top:316.92px" width="9.200" height="6.800" viewBox="0 0 10 9" preserveAspectRatio="none"><path d="M0 4.500H1.600L2.300 3L3 6L3.800 0.500L4.700 8.500L5.500 2L6.300 6.500L7 3.500L7.600 5L8.200 4.500H10" fill="none" stroke="#fff" stroke-width="0.850" stroke-linejoin="round"/></svg>
<div class="t" style="left:7px;width:19.500px;text-align:right;top:317.32000000000005px;font-size:7.600px;font-weight:bold;letter-spacing:-0.150px;color:#0a0a0a">15</div>
<div class="a" style="left:0;top:314.72px">
<div class="a btn" style="left:33.9px;top:2.1px;width:26.800px;height:10.4px"><div class="a" style="left:12.800px;top:0;width:0.600px;height:100%;background:#77787a"></div><div class="t ms" style="left:-0.600px;width:12.800px;text-align:center;top:1.4000000000000004px">M</div><div class="t ms" style="left:13.400px;width:12.200px;text-align:center;top:1.4000000000000004px;transform:scaleX(1.22)">S</div></div>
<div class="a btn" style="left:64.5px;top:2.1px;width:13.5px;height:10.4px"><div class="a" style="left:3.1500000000000004px;top:1.6000000000000005px;width:6px;height:6px;border-radius:50%;background:#8e8f91"></div></div>
</div>
<div class="t" style="left:83px;top:318.72px;font-size:7.050px;font-weight:bold;color:#0a0a0a">Piano_R</div>
<div class="t" style="left:34.200px;top:330.52000000000004px;font-size:5.300px;color:#0a0a0a">AXR4 ADAT A3</div>
<div class="a" style="left:192px;top:330.1000000000001px;width:6.300px;height:6.2px;background:#12e014"></div>
<div class="a" style="left:192px;top:320.82000000000005px;width:6.300px;height:0.800px;background:#91500f"></div>
<div class="a" style="left:7px;top:337.2px;width:20px;height:22.48px;background:#f6152f"></div>
<div class="a" style="left:7px;top:358.68px;width:184.200px;height:0.800px;background:rgba(140,135,140,0.700)"></div>
<svg class="a" style="left:7.800px;top:339.4px" width="9.200" height="6.800" viewBox="0 0 10 9" preserveAspectRatio="none"><path d="M0 4.500H1.600L2.300 3L3 6L3.800 0.500L4.700 8.500L5.500 2L6.300 6.500L7 3.500L7.600 5L8.200 4.500H10" fill="none" stroke="#fff" stroke-width="0.850" stroke-linejoin="round"/></svg>
<div class="t" style="left:7px;width:19.500px;text-align:right;top:339.8px;font-size:7.600px;font-weight:bold;letter-spacing:-0.150px;color:#8c0c18">16</div>
<div class="a" style="left:0;top:337.2px">
<div class="a btn" style="left:33.9px;top:2.1px;width:26.800px;height:10.4px"><div class="a" style="left:12.800px;top:0;width:0.600px;height:100%;background:#77787a"></div><div class="t ms" style="left:-0.600px;width:12.800px;text-align:center;top:1.4000000000000004px">M</div><div class="t ms" style="left:13.400px;width:12.200px;text-align:center;top:1.4000000000000004px;transform:scaleX(1.22)">S</div></div>
<div class="a btn" style="left:64.5px;top:2.1px;width:13.5px;height:10.4px"><div class="a" style="left:3.1500000000000004px;top:1.6000000000000005px;width:6px;height:6px;border-radius:50%;background:#8e8f91"></div></div>
</div>
<div class="t" style="left:83px;top:341.2px;font-size:7.050px;font-weight:bold;color:#fff">Vocals</div>
<div class="t" style="left:34.200px;top:353.0px;font-size:5.300px;color:#fff">AXR4 ADAT A4</div>
<div class="a" style="left:192px;top:350.58000000000004px;width:6.300px;height:8.2px;background:#12e014"></div>
<div class="a" style="left:192px;top:346.6px;width:6.300px;height:0.800px;background:#0c8a10"></div>
</div>
<div class="a" style="left:199px;top:96px;width:1.7px;height:397px;background:#5f6266"></div>
<div class="a" style="left:199.3px;top:289.5px;width:1.1px;height:1.1px;background:#c8c8c8"></div>
<div class="a" style="left:199.3px;top:292.4px;width:1.1px;height:1.1px;background:#c8c8c8"></div>
<div class="a" style="left:199.3px;top:295.3px;width:1.1px;height:1.1px;background:#c8c8c8"></div>
<div class="a" style="left:199.3px;top:298.2px;width:1.1px;height:1.1px;background:#c8c8c8"></div>
<div class="a" style="left:201px;top:92.5px;width:583.8px;height:16.2px;background:#1c1e21"></div>
<div class="a" style="left:3.8px;top:92.5px;width:195.5px;height:0.01px;"></div>
<svg class="a" style="left:0;top:92px" width="784.800" height="18" viewBox="0 0 784.800 18"><rect x="203.65" y="4" width="0.800" height="4.200" fill="#5c5e61"/><rect x="209.16" y="4" width="0.800" height="4.200" fill="#5c5e61"/><rect x="214.68" y="4" width="0.800" height="4.200" fill="#5c5e61"/><rect x="220.05" y="4" width="1.100" height="12.300" fill="#cfcfcf"/><rect x="225.72" y="4" width="0.800" height="4.200" fill="#5c5e61"/><rect x="231.24" y="4" width="0.800" height="4.200" fill="#5c5e61"/><rect x="236.75" y="4" width="0.800" height="4.200" fill="#5c5e61"/><rect x="242.27" y="4" width="0.800" height="4.200" fill="#5c5e61"/><rect x="247.74" y="4" width="0.900" height="4.600" fill="#8e9092"/><rect x="253.31" y="4" width="0.800" height="4.200" fill="#5c5e61"/><rect x="258.83" y="4" width="0.800" height="4.200" fill="#5c5e61"/><rect x="264.34" y="4" width="0.800" height="4.200" fill="#5c5e61"/><rect x="269.86" y="4" width="0.800" height="4.200" fill="#5c5e61"/><rect x="275.23" y="4" width="1.100" height="12.300" fill="#cfcfcf"/><rect x="280.90" y="4" width="0.800" height="4.200" fill="#5c5e61"/><rect x="286.42" y="4" width="0.800" height="4.200" fill="#5c5e61"/><rect x="291.93" y="4" width="0.800" height="4.200" fill="#5c5e61"/><rect x="297.45" y="4" width="0.800" height="4.200" fill="#5c5e61"/><rect x="302.92" y="4" width="0.900" height="4.600" fill="#8e9092"/><rect x="308.49" y="4" width="0.800" height="4.200" fill="#5c5e61"/><rect x="314.01" y="4" width="0.800" height="4.200" fill="#5c5e61"/><rect x="319.52" y="4" width="0.800" height="4.200" fill="#5c5e61"/><rect x="325.04" y="4" width="0.800" height="4.200" fill="#5c5e61"/><rect x="330.41" y="4" width="1.100" height="12.300" fill="#cfcfcf"/><rect x="336.08" y="4" width="0.800" height="4.200" fill="#5c5e61"/><rect x="341.60" y="4" width="0.800" height="4.200" fill="#5c5e61"/><rect x="347.11" y="4" width="0.800" height="4.200" fill="#5c5e61"/><rect x="352.63" y="4" width="0.800" height="4.200" fill="#5c5e61"/><rect x="358.10" y="4" width="0.900" height="4.600" fill="#8e9092"/><rect x="363.67" y="4" width="0.800" height="4.200" fill="#5c5e61"/><rect x="369.19" y="4" width="0.800" height="4.200" fill="#5c5e61"/><rect x="374.70" y="4" width="0.800" height="4.200" fill="#5c5e61"/><rect x="380.22" y="4" width="0.800" height="4.200" fill="#5c5e61"/><rect x="385.59" y="4" width="1.100" height="12.300" fill="#cfcfcf"/><rect x="391.26" y="4" width="0.800" height="4.200" fill="#5c5e61"/><rect x="396.78" y="4" width="0.800" height="4.200" fill="#5c5e61"/><rect x="402.29" y="4" width="0.800" height="4.200" fill="#5c5e61"/><rect x="407.81" y="4" width="0.800" height="4.200" fill="#5c5e61"/><rect x="413.28" y="4" width="0.900" height="4.600" fill="#8e9092"/><rect x="418.85" y="4" width="0.800" height="4.200" fill="#5c5e61"/><rect x="424.37" y="4" width="0.800" height="4.200" fill="#5c5e61"/><rect x="429.88" y="4" width="0.800" height="4.200" fill="#5c5e61"/><rect x="435.40" y="4" width="0.800" height="4.200" fill="#5c5e61"/><rect x="440.77" y="4" width="1.100" height="12.300" fill="#cfcfcf"/><rect x="446.44" y="4" width="0.800" height="4.200" fill="#5c5e61"/><rect x="451.96" y="4" width="0.800" height="4.200" fill="#5c5e61"/><rect x="457.47" y="4" width="0.800" height="4.200" fill="#5c5e61"/><rect x="462.99" y="4" width="0.800" height="4.200" fill="#5c5e61"/><rect x="468.46" y="4" width="0.900" height="4.600" fill="#8e9092"/><rect x="474.03" y="4" width="0.800" height="4.200" fill="#5c5e61"/><rect x="479.55" y="4" width="0.800" height="4.200" fill="#5c5e61"/><rect x="485.06" y="4" width="0.800" height="4.200" fill="#5c5e61"/><rect x="490.58" y="4" width="0.800" height="4.200" fill="#5c5e61"/><rect x="495.95" y="4" width="1.100" height="12.300" fill="#cfcfcf"/><rect x="501.62" y="4" width="0.800" height="4.200" fill="#5c5e61"/><rect x="507.14" y="4" width="0.800" height="4.200" fill="#5c5e61"/><rect x="512.65" y="4" width="0.800" height="4.200" fill="#5c5e61"/><rect x="518.17" y="4" width="0.800" height="4.200" fill="#5c5e61"/><rect x="523.64" y="4" width="0.900" height="4.600" fill="#8e9092"/><rect x="529.21" y="4" width="0.800" height="4.200" fill="#5c5e61"/><rect x="534.73" y="4" width="0.800" height="4.200" fill="#5c5e61"/><rect x="540.24" y="4" width="0.800" height="4.200" fill="#5c5e61"/><rect x="545.76" y="4" width="0.800" height="4.200" fill="#5c5e61"/><rect x="551.13" y="4" width="1.100" height="12.300" fill="#cfcfcf"/><rect x="556.80" y="4" width="0.800" height="4.200" fill="#5c5e61"/><rect x="562.32" y="4" width="0.800" height="4.200" fill="#5c5e61"/><rect x="567.83" y="4" width="0.800" height="4.200" fill="#5c5e61"/><rect x="573.35" y="4" width="0.800" height="4.200" fill="#5c5e61"/><rect x="578.82" y="4" width="0.900" height="4.600" fill="#8e9092"/><rect x="584.39" y="4" width="0.800" height="4.200" fill="#5c5e61"/><rect x="589.91" y="4" width="0.800" height="4.200" fill="#5c5e61"/><rect x="595.42" y="4" width="0.800" height="4.200" fill="#5c5e61"/><rect x="600.94" y="4" width="0.800" height="4.200" fill="#5c5e61"/><rect x="606.31" y="4" width="1.100" height="12.300" fill="#cfcfcf"/><rect x="611.98" y="4" width="0.800" height="4.200" fill="#5c5e61"/><rect x="617.50" y="4" width="0.800" height="4.200" fill="#5c5e61"/><rect x="623.01" y="4" width="0.800" height="4.200" fill="#5c5e61"/><rect x="628.53" y="4" width="0.800" height="4.200" fill="#5c5e61"/><rect x="634.00" y="4" width="0.900" height="4.600" fill="#8e9092"/><rect x="639.57" y="4" width="0.800" height="4.200" fill="#5c5e61"/><rect x="645.09" y="4" width="0.800" height="4.200" fill="#5c5e61"/><rect x="650.60" y="4" width="0.800" height="4.200" fill="#5c5e61"/><rect x="656.12" y="4" width="0.800" height="4.200" fill="#5c5e61"/><rect x="661.49" y="4" width="1.100" height="12.300" fill="#cfcfcf"/><rect x="667.16" y="4" width="0.800" height="4.200" fill="#5c5e61"/><rect x="672.68" y="4" width="0.800" height="4.200" fill="#5c5e61"/><rect x="678.19" y="4" width="0.800" height="4.200" fill="#5c5e61"/><rect x="683.71" y="4" width="0.800" height="4.200" fill="#5c5e61"/><rect x="689.18" y="4" width="0.900" height="4.600" fill="#8e9092"/><rect x="694.75" y="4" width="0.800" height="4.200" fill="#5c5e61"/><rect x="700.27" y="4" width="0.800" height="4.200" fill="#5c5e61"/><rect x="705.78" y="4" width="0.800" height="4.200" fill="#5c5e61"/><rect x="711.30" y="4" width="0.800" height="4.200" fill="#5c5e61"/><rect x="716.67" y="4" width="1.100" height="12.300" fill="#cfcfcf"/><rect x="722.34" y="4" width="0.800" height="4.200" fill="#5c5e61"/><rect x="727.86" y="4" width="0.800" height="4.200" fill="#5c5e61"/><rect x="733.37" y="4" width="0.800" height="4.200" fill="#5c5e61"/><rect x="738.89" y="4" width="0.800" height="4.200" fill="#5c5e61"/><rect x="744.36" y="4" width="0.900" height="4.600" fill="#8e9092"/><rect x="749.93" y="4" width="0.800" height="4.200" fill="#5c5e61"/><rect x="755.45" y="4" width="0.800" height="4.200" fill="#5c5e61"/><rect x="760.96" y="4" width="0.800" height="4.200" fill="#5c5e61"/><rect x="766.48" y="4" width="0.800" height="4.200" fill="#5c5e61"/><rect x="771.85" y="4" width="1.100" height="12.300" fill="#cfcfcf"/><rect x="777.52" y="4" width="0.800" height="4.200" fill="#5c5e61"/><text x="222.90" y="14.700" font-family="Liberation Sans, sans-serif" font-size="5.300" fill="#d8d8d8">6:40</text><text x="278.08" y="14.700" font-family="Liberation Sans, sans-serif" font-size="5.300" fill="#d8d8d8">6:50</text><text x="333.26" y="14.700" font-family="Liberation Sans, sans-serif" font-size="5.300" fill="#d8d8d8">7:00</text><text x="388.44" y="14.700" font-family="Liberation Sans, sans-serif" font-size="5.300" fill="#d8d8d8">7:10</text><text x="443.62" y="14.700" font-family="Liberation Sans, sans-serif" font-size="5.300" fill="#d8d8d8">7:20</text><text x="498.80" y="14.700" font-family="Liberation Sans, sans-serif" font-size="5.300" fill="#d8d8d8">7:30</text><text x="553.98" y="14.700" font-family="Liberation Sans, sans-serif" font-size="5.300" fill="#d8d8d8">7:40</text><text x="609.16" y="14.700" font-family="Liberation Sans, sans-serif" font-size="5.300" fill="#d8d8d8">7:50</text><text x="664.34" y="14.700" font-family="Liberation Sans, sans-serif" font-size="5.300" fill="#d8d8d8">8:00</text><text x="719.52" y="14.700" font-family="Liberation Sans, sans-serif" font-size="5.300" fill="#d8d8d8">8:10</text><text x="774.70" y="14.700" font-family="Liberation Sans, sans-serif" font-size="5.300" fill="#d8d8d8">8:20</text></svg>
<div class="a" style="left:785px;top:96.5px;width:6.6px;height:10.8px;background:#5e6063;border-radius:1.500px"><svg class="a" style="left:1.300px;top:3.600px" width="4" height="3.500" viewBox="0 0 5 4"><path d="M0 0H5L2.500 4Z" fill="#fff"/></svg></div>
<svg class="a" style="left:416px;top:110px" width="70" height="22" viewBox="0 0 70 22"><path d="M1.500 0V19.500" stroke="#55585b" stroke-width="0.700"/><path d="M1.500 11.200H54.600L62 19.200H1.500Z" fill="#8c8e91"/><text x="3.800" y="17.400" font-family="Liberation Sans, sans-serif" font-size="5.400" fill="#151515">3: Third Song - Alive</text></svg>
<svg class="a" style="left:0;top:0" width="800" height="517" viewBox="0 0 800 517"><rect x="200.8" y="132.00" width="456.8" height="22.48" fill="#11161a"/><rect x="200.8" y="132.00" width="456.8" height="20.50" fill="#06a7ec"/><path d="M201.3 140.7 L202.3 139.1 L203.3 140.4 L204.3 140.9 L205.3 139.8 L206.3 140.7 L207.3 140.6 L208.3 138.4 L209.3 139.8 L210.3 140.8 L211.3 141.8 L212.3 141.7 L213.3 141.9 L214.3 140.6 L215.3 138.6 L216.3 140.1 L217.3 140.7 L218.3 141.7 L219.3 141.8 L220.3 140.5 L221.3 138.6 L222.3 139.9 L223.3 140.7 L224.3 141.3 L225.3 139.9 L226.3 140.7 L227.3 140.7 L228.3 139.2 L229.3 140.3 L230.3 140.9 L231.3 141.8 L232.3 141.9 L233.3 141.9 L234.3 140.4 L235.3 137.9 L236.3 139.8 L237.3 140.6 L238.3 140.3 L239.3 140.9 L240.3 140.5 L241.3 138.3 L242.3 139.9 L243.3 140.6 L244.3 141.2 L245.3 140.3 L246.3 141.1 L247.3 140.8 L248.3 138.8 L249.3 140.1 L250.3 140.9 L251.3 139.9 L252.3 140.7 L253.3 141.8 L254.3 141.7 L255.3 141.9 L256.3 141.8 L257.3 141.7 L258.3 141.9 L259.3 141.8 L260.3 140.5 L261.3 137.8 L262.3 139.6 L263.3 140.5 L264.3 139.5 L265.3 140.6 L266.3 141.8 L267.3 140.5 L268.3 138.4 L269.3 139.8 L270.3 140.7 L271.3 141.9 L272.3 141.8 L273.3 140.6 L274.3 138.2 L275.3 139.7 L276.3 140.7 L277.3 141.0 L278.3 139.9 L279.3 140.6 L280.3 140.9 L281.3 139.0 L282.3 140.2 L283.3 141.1 L284.3 140.1 L285.3 140.7 L286.3 141.9 L287.3 140.5 L288.3 138.2 L289.3 139.8 L290.3 140.8 L291.3 140.4 L292.3 141.0 L293.3 140.6 L294.3 138.1 L295.3 139.6 L296.3 140.5 L297.3 141.8 L298.3 141.9 L299.3 141.8 L300.3 140.7 L301.3 138.9 L302.3 140.1 L303.3 141.0 L304.3 139.8 L305.3 140.8 L306.3 140.4 L307.3 138.0 L308.3 139.6 L309.3 140.6 L310.3 141.1 L311.3 140.0 L312.3 140.7 L313.3 141.9 L314.3 141.8 L315.3 141.7 L316.3 141.7 L317.3 141.8 L318.3 141.7 L319.3 141.8 L320.3 140.4 L321.3 137.9 L322.3 139.6 L323.3 140.7 L324.3 139.7 L325.3 140.7 L326.3 140.4 L327.3 138.1 L328.3 139.8 L329.3 140.6 L330.3 141.2 L331.3 140.3 L332.3 140.9 L333.3 140.7 L334.3 138.5 L335.3 140.0 L336.3 140.9 L337.3 140.1 L338.3 140.8 L339.3 141.7 L340.3 140.5 L341.3 138.0 L342.3 139.8 L343.3 140.6 L344.3 140.0 L345.3 140.8 L346.3 140.5 L347.3 138.1 L348.3 139.8 L349.3 140.7 L350.3 141.7 L351.3 141.7 L352.3 141.8 L353.3 140.3 L354.3 138.0 L355.3 139.8 L356.3 140.5 L357.3 140.2 L358.3 140.9 L359.3 140.4 L360.3 138.0 L361.3 139.8 L362.3 140.6 L363.3 141.7 L364.3 141.7 L365.3 141.8 L366.3 140.6 L367.3 138.2 L368.3 139.8 L369.3 140.6 L370.3 141.9 L371.3 141.7 L372.3 141.7 L373.3 140.7 L374.3 138.6 L375.3 140.0 L376.3 140.7 L377.3 139.8 L378.3 140.7 L379.3 140.8 L380.3 138.9 L381.3 140.1 L382.3 140.9 L383.3 141.0 L384.3 139.4 L385.3 140.6 L386.3 140.8 L387.3 138.9 L388.3 140.2 L389.3 140.9 L390.3 141.7 L391.3 141.8 L392.3 140.4 L393.3 138.4 L394.3 139.9 L395.3 140.7 L396.3 141.3 L397.3 140.6 L398.3 141.2 L399.3 140.6 L400.3 138.4 L401.3 139.9 L402.3 140.7 L403.3 140.2 L404.3 141.0 L405.3 141.7 L406.3 140.6 L407.3 138.5 L408.3 139.9 L409.3 140.8 L410.3 139.6 L411.3 140.5 L412.3 140.5 L413.3 138.3 L414.3 140.0 L415.3 140.7 L416.3 141.3 L417.3 140.6 L418.3 141.1 L419.3 140.9 L420.3 139.1 L421.3 140.3 L422.3 141.0 L423.3 140.0 L424.3 140.7 L425.3 141.7 L426.3 140.6 L427.3 138.2 L428.3 139.8 L429.3 140.8 L430.3 140.0 L431.3 141.0 L432.3 140.5 L433.3 138.0 L434.3 139.8 L435.3 140.7 L436.3 141.0 L437.3 139.8 L438.3 140.6 L439.3 140.7 L440.3 138.3 L441.3 139.8 L442.3 140.7 L443.3 140.0 L444.3 140.7 L445.3 140.7 L446.3 138.5 L447.3 140.0 L448.3 140.7 L449.3 141.8 L450.3 141.8 L451.3 141.8 L452.3 140.8 L453.3 138.9 L454.3 140.2 L455.3 140.9 L456.3 141.8 L457.3 141.8 L458.3 141.7 L459.3 140.5 L460.3 138.0 L461.3 139.8 L462.3 140.8 L463.3 140.4 L464.3 141.0 L465.3 140.8 L466.3 138.9 L467.3 140.3 L468.3 141.0 L469.3 141.2 L470.3 140.4 L471.3 140.9 L472.3 140.5 L473.3 138.3 L474.3 139.8 L475.3 140.6 L476.3 140.4 L477.3 141.0 L478.3 141.7 L479.3 140.5 L480.3 137.8 L481.3 139.6 L482.3 140.5 L483.3 139.8 L484.3 140.7 L485.3 140.6 L486.3 138.6 L487.3 139.9 L488.3 140.9 L489.3 140.0 L490.3 140.7 L491.3 141.8 L492.3 140.9 L493.3 139.0 L494.3 140.2 L495.3 140.9 L496.3 140.3 L497.3 141.0 L498.3 140.9 L499.3 139.0 L500.3 140.3 L501.3 141.0 L502.3 141.3 L503.3 140.0 L504.3 140.8 L505.3 140.5 L506.3 137.8 L507.3 139.7 L508.3 140.5 L509.3 139.4 L510.3 140.5 L511.3 141.8 L512.3 140.7 L513.3 138.7 L514.3 140.0 L515.3 140.8 L516.3 139.7 L517.3 140.7 L518.3 140.8 L519.3 139.0 L520.3 140.2 L521.3 140.9 L522.3 141.7 L523.3 141.7 L524.3 141.7 L525.3 140.7 L526.3 138.7 L527.3 139.9 L528.3 140.9 L529.3 140.2 L530.3 140.8 L531.3 141.9 L532.3 141.9 L533.3 141.8 L534.3 141.8 L535.3 141.9 L536.3 141.7 L537.3 141.8 L538.3 140.7 L539.3 138.7 L540.3 140.2 L541.3 140.9 L542.3 141.8 L543.3 141.7 L544.3 141.8 L545.3 140.4 L546.3 137.9 L547.3 139.6 L548.3 140.7 L549.3 140.2 L550.3 140.9 L551.3 141.0 L552.3 139.1 L553.3 140.3 L554.3 140.9 L555.3 141.4 L556.3 140.3 L557.3 140.9 L558.3 140.6 L559.3 138.4 L560.3 139.8 L561.3 140.8 L562.3 139.5 L563.3 140.5 L564.3 141.7 L565.3 140.4 L566.3 138.2 L567.3 139.7 L568.3 140.8 L569.3 139.7 L570.3 140.7 L571.3 140.8 L572.3 138.5 L573.3 140.1 L574.3 140.8 L575.3 141.7 L576.3 141.8 L577.3 141.8 L578.3 140.7 L579.3 138.9 L580.3 140.2 L581.3 141.0 L582.3 141.7 L583.3 141.7 L584.3 140.9 L585.3 139.1 L586.3 140.4 L587.3 141.0 L588.3 141.3 L589.3 140.2 L590.3 140.9 L591.3 140.6 L592.3 138.2 L593.3 139.8 L594.3 140.8 L595.3 139.4 L596.3 140.6 L597.3 141.7 L598.3 140.8 L599.3 139.2 L600.3 140.4 L601.3 141.0 L602.3 141.9 L603.3 141.8 L604.3 140.4 L605.3 138.2 L606.3 139.8 L607.3 140.7 L608.3 141.3 L609.3 140.3 L610.3 140.9 L611.3 140.8 L612.3 138.6 L613.3 140.0 L614.3 140.8 L615.3 140.4 L616.3 141.1 L617.3 141.8 L618.3 140.9 L619.3 138.9 L620.3 140.2 L621.3 140.9 L622.3 141.7 L623.3 141.8 L624.3 140.6 L625.3 138.4 L626.3 139.9 L627.3 140.9 L628.3 139.7 L629.3 140.7 L630.3 141.8 L631.3 140.5 L632.3 138.4 L633.3 140.0 L634.3 140.7 L635.3 139.8 L636.3 140.7 L637.3 140.6 L638.3 138.3 L639.3 139.8 L640.3 140.7 L641.3 141.2 L642.3 140.2 L643.3 141.0 L644.3 140.4 L645.3 138.2 L646.3 139.8 L647.3 140.6 L648.3 140.3 L649.3 140.9 L650.3 141.8 L651.3 140.7 L652.3 138.7 L653.3 140.0 L654.3 140.9 L655.3 139.7 L656.3 140.6 L656.3 144.2 L655.3 145.1 L654.3 143.9 L653.3 144.8 L652.3 146.1 L651.3 144.1 L650.3 143.0 L649.3 143.9 L648.3 144.5 L647.3 144.2 L646.3 145.0 L645.3 146.6 L644.3 144.4 L643.3 143.8 L642.3 144.6 L641.3 143.6 L640.3 144.1 L639.3 145.0 L638.3 146.5 L637.3 144.2 L636.3 144.1 L635.3 145.0 L634.3 144.1 L633.3 144.8 L632.3 146.4 L631.3 144.3 L630.3 143.0 L629.3 144.1 L628.3 145.1 L627.3 143.9 L626.3 144.9 L625.3 146.4 L624.3 144.2 L623.3 143.0 L622.3 143.1 L621.3 143.9 L620.3 144.6 L619.3 145.9 L618.3 143.9 L617.3 143.0 L616.3 143.7 L615.3 144.4 L614.3 144.0 L613.3 144.8 L612.3 146.2 L611.3 144.0 L610.3 143.9 L609.3 144.5 L608.3 143.5 L607.3 144.1 L606.3 145.0 L605.3 146.6 L604.3 144.4 L603.3 143.0 L602.3 142.9 L601.3 143.8 L600.3 144.4 L599.3 145.6 L598.3 144.0 L597.3 143.1 L596.3 144.2 L595.3 145.4 L594.3 144.0 L593.3 145.0 L592.3 146.6 L591.3 144.2 L590.3 143.9 L589.3 144.6 L588.3 143.5 L587.3 143.8 L586.3 144.4 L585.3 145.7 L584.3 143.9 L583.3 143.1 L582.3 143.1 L581.3 143.8 L580.3 144.6 L579.3 145.9 L578.3 144.1 L577.3 143.0 L576.3 143.0 L575.3 143.1 L574.3 144.0 L573.3 144.7 L572.3 146.3 L571.3 144.0 L570.3 144.1 L569.3 145.1 L568.3 144.0 L567.3 145.1 L566.3 146.6 L565.3 144.4 L564.3 143.1 L563.3 144.3 L562.3 145.3 L561.3 144.0 L560.3 145.0 L559.3 146.4 L558.3 144.2 L557.3 143.9 L556.3 144.5 L555.3 143.4 L554.3 143.9 L553.3 144.5 L552.3 145.7 L551.3 143.8 L550.3 143.9 L549.3 144.6 L548.3 144.1 L547.3 145.2 L546.3 146.9 L545.3 144.4 L544.3 143.0 L543.3 143.1 L542.3 143.0 L541.3 143.9 L540.3 144.6 L539.3 146.1 L538.3 144.1 L537.3 143.0 L536.3 143.1 L535.3 142.9 L534.3 143.0 L533.3 143.0 L532.3 142.9 L531.3 142.9 L530.3 144.0 L529.3 144.6 L528.3 143.9 L527.3 144.9 L526.3 146.1 L525.3 144.1 L524.3 143.1 L523.3 143.1 L522.3 143.1 L521.3 143.9 L520.3 144.6 L519.3 145.8 L518.3 144.0 L517.3 144.1 L516.3 145.1 L515.3 144.0 L514.3 144.8 L513.3 146.1 L512.3 144.1 L511.3 143.0 L510.3 144.3 L509.3 145.4 L508.3 144.3 L507.3 145.1 L506.3 147.0 L505.3 144.3 L504.3 144.0 L503.3 144.8 L502.3 143.5 L501.3 143.8 L500.3 144.5 L499.3 145.8 L498.3 143.9 L497.3 143.8 L496.3 144.5 L495.3 143.9 L494.3 144.6 L493.3 145.8 L492.3 143.9 L491.3 143.0 L490.3 144.1 L489.3 144.8 L488.3 143.9 L487.3 144.9 L486.3 146.2 L485.3 144.2 L484.3 144.1 L483.3 145.0 L482.3 144.3 L481.3 145.2 L480.3 147.0 L479.3 144.3 L478.3 143.1 L477.3 143.8 L476.3 144.4 L475.3 144.2 L474.3 145.0 L473.3 146.5 L472.3 144.3 L471.3 143.9 L470.3 144.4 L469.3 143.6 L468.3 143.8 L467.3 144.5 L466.3 145.9 L465.3 144.0 L464.3 143.8 L463.3 144.4 L462.3 144.0 L461.3 145.0 L460.3 146.8 L459.3 144.3 L458.3 143.1 L457.3 143.0 L456.3 143.0 L455.3 143.9 L454.3 144.6 L453.3 145.9 L452.3 144.0 L451.3 143.0 L450.3 143.0 L449.3 143.0 L448.3 144.1 L447.3 144.8 L446.3 146.3 L445.3 144.1 L444.3 144.1 L443.3 144.8 L442.3 144.1 L441.3 145.0 L440.3 146.5 L439.3 144.1 L438.3 144.2 L437.3 145.0 L436.3 143.8 L435.3 144.1 L434.3 145.0 L433.3 146.8 L432.3 144.3 L431.3 143.8 L430.3 144.8 L429.3 144.0 L428.3 145.0 L427.3 146.6 L426.3 144.2 L425.3 143.1 L424.3 144.1 L423.3 144.8 L422.3 143.8 L421.3 144.5 L420.3 145.7 L419.3 143.9 L418.3 143.7 L417.3 144.2 L416.3 143.5 L415.3 144.1 L414.3 144.8 L413.3 146.5 L412.3 144.3 L411.3 144.3 L410.3 145.2 L409.3 144.0 L408.3 144.9 L407.3 146.3 L406.3 144.2 L405.3 143.1 L404.3 143.8 L403.3 144.6 L402.3 144.1 L401.3 144.9 L400.3 146.4 L399.3 144.2 L398.3 143.6 L397.3 144.2 L396.3 143.5 L395.3 144.1 L394.3 144.9 L393.3 146.4 L392.3 144.4 L391.3 143.0 L390.3 143.1 L389.3 143.9 L388.3 144.6 L387.3 145.9 L386.3 144.0 L385.3 144.2 L384.3 145.4 L383.3 143.8 L382.3 143.9 L381.3 144.7 L380.3 145.9 L379.3 144.0 L378.3 144.1 L377.3 145.0 L376.3 144.1 L375.3 144.8 L374.3 146.2 L373.3 144.1 L372.3 143.1 L371.3 143.1 L370.3 142.9 L369.3 144.2 L368.3 145.0 L367.3 146.6 L366.3 144.2 L365.3 143.0 L364.3 143.1 L363.3 143.1 L362.3 144.2 L361.3 145.0 L360.3 146.8 L359.3 144.4 L358.3 143.9 L357.3 144.6 L356.3 144.3 L355.3 145.0 L354.3 146.8 L353.3 144.5 L352.3 143.0 L351.3 143.1 L350.3 143.1 L349.3 144.1 L348.3 145.0 L347.3 146.7 L346.3 144.3 L345.3 144.0 L344.3 144.8 L343.3 144.2 L342.3 145.0 L341.3 146.8 L340.3 144.3 L339.3 143.1 L338.3 144.0 L337.3 144.7 L336.3 143.9 L335.3 144.8 L334.3 146.3 L333.3 144.1 L332.3 143.9 L331.3 144.5 L330.3 143.6 L329.3 144.2 L328.3 145.0 L327.3 146.7 L326.3 144.4 L325.3 144.1 L324.3 145.1 L323.3 144.1 L322.3 145.2 L321.3 146.9 L320.3 144.4 L319.3 143.0 L318.3 143.1 L317.3 143.0 L316.3 143.1 L315.3 143.1 L314.3 143.0 L313.3 142.9 L312.3 144.1 L311.3 144.8 L310.3 143.7 L309.3 144.2 L308.3 145.2 L307.3 146.8 L306.3 144.4 L305.3 144.0 L304.3 145.0 L303.3 143.8 L302.3 144.7 L301.3 145.9 L300.3 144.1 L299.3 143.0 L298.3 142.9 L297.3 143.0 L296.3 144.3 L295.3 145.2 L294.3 146.7 L293.3 144.2 L292.3 143.8 L291.3 144.4 L290.3 144.0 L289.3 145.0 L288.3 146.6 L287.3 144.3 L286.3 142.9 L285.3 144.1 L284.3 144.7 L283.3 143.7 L282.3 144.6 L281.3 145.8 L280.3 143.9 L279.3 144.2 L278.3 144.9 L277.3 143.8 L276.3 144.1 L275.3 145.1 L274.3 146.6 L273.3 144.2 L272.3 143.0 L271.3 142.9 L270.3 144.1 L269.3 145.0 L268.3 146.4 L267.3 144.3 L266.3 143.0 L265.3 144.2 L264.3 145.3 L263.3 144.3 L262.3 145.2 L261.3 147.0 L260.3 144.3 L259.3 143.0 L258.3 142.9 L257.3 143.1 L256.3 143.0 L255.3 142.9 L254.3 143.1 L253.3 143.0 L252.3 144.1 L251.3 144.9 L250.3 143.9 L249.3 144.7 L248.3 146.0 L247.3 144.0 L246.3 143.7 L245.3 144.5 L244.3 143.6 L243.3 144.2 L242.3 144.9 L241.3 146.5 L240.3 144.3 L239.3 143.9 L238.3 144.5 L237.3 144.2 L236.3 145.0 L235.3 146.9 L234.3 144.4 L233.3 142.9 L232.3 142.9 L231.3 143.0 L230.3 143.9 L229.3 144.5 L228.3 145.6 L227.3 144.1 L226.3 144.1 L225.3 144.9 L224.3 143.5 L223.3 144.1 L222.3 144.9 L221.3 146.2 L220.3 144.3 L219.3 143.0 L218.3 143.1 L217.3 144.1 L216.3 144.7 L215.3 146.2 L214.3 144.2 L213.3 142.9 L212.3 143.1 L211.3 143.0 L210.3 144.0 L209.3 145.0 L208.3 146.4 L207.3 144.2 L206.3 144.1 L205.3 145.0 L204.3 143.9 L203.3 144.4 L202.3 145.7 L201.3 144.1Z" fill="#086da6"/><rect x="200.8" y="153.68" width="456.8" height="23.28" fill="#11161a"/><rect x="200.8" y="154.48" width="456.8" height="20.50" fill="#06a7ec"/><path d="M201.3 164.3 L202.3 164.1 L203.3 163.7 L204.3 164.2 L205.3 164.1 L206.3 163.8 L207.3 164.3 L208.3 164.0 L209.3 163.4 L210.3 164.2 L211.3 164.0 L212.3 163.5 L213.3 164.2 L214.3 164.2 L215.3 164.1 L216.3 163.7 L217.3 164.3 L218.3 164.1 L219.3 163.6 L220.3 164.4 L221.3 164.1 L222.3 163.7 L223.3 164.4 L224.3 164.3 L225.3 164.2 L226.3 163.7 L227.3 164.3 L228.3 164.0 L229.3 163.7 L230.3 164.3 L231.3 164.0 L232.3 163.6 L233.3 164.3 L234.3 164.3 L235.3 164.2 L236.3 163.8 L237.3 164.3 L238.3 164.0 L239.3 163.5 L240.3 164.3 L241.3 164.2 L242.3 163.9 L243.3 164.3 L244.3 164.3 L245.3 164.1 L246.3 163.7 L247.3 164.3 L248.3 164.2 L249.3 163.9 L250.3 164.3 L251.3 164.0 L252.3 163.5 L253.3 164.3 L254.3 164.1 L255.3 163.7 L256.3 164.2 L257.3 164.3 L258.3 164.0 L259.3 163.6 L260.3 164.3 L261.3 164.1 L262.3 163.8 L263.3 164.4 L264.3 164.1 L265.3 163.6 L266.3 164.3 L267.3 164.2 L268.3 164.1 L269.3 163.6 L270.3 164.3 L271.3 164.2 L272.3 163.8 L273.3 164.3 L274.3 164.1 L275.3 163.6 L276.3 164.3 L277.3 164.3 L278.3 164.1 L279.3 163.8 L280.3 164.3 L281.3 164.2 L282.3 163.8 L283.3 164.2 L284.3 164.0 L285.3 163.5 L286.3 164.3 L287.3 164.4 L288.3 164.1 L289.3 163.5 L290.3 164.3 L291.3 164.1 L292.3 163.6 L293.3 164.4 L294.3 164.0 L295.3 163.4 L296.3 164.2 L297.3 164.1 L298.3 163.7 L299.3 164.4 L300.3 164.3 L301.3 164.1 L302.3 163.7 L303.3 164.4 L304.3 164.0 L305.3 163.7 L306.3 164.3 L307.3 164.1 L308.3 163.7 L309.3 164.3 L310.3 164.3 L311.3 164.0 L312.3 163.5 L313.3 164.3 L314.3 164.1 L315.3 163.8 L316.3 164.4 L317.3 164.1 L318.3 163.7 L319.3 164.3 L320.3 164.3 L321.3 164.0 L322.3 163.7 L323.3 164.2 L324.3 164.2 L325.3 163.8 L326.3 164.4 L327.3 164.2 L328.3 163.8 L329.3 164.3 L330.3 164.2 L331.3 164.1 L332.3 163.5 L333.3 164.3 L334.3 164.1 L335.3 163.9 L336.3 164.2 L337.3 164.0 L338.3 163.6 L339.3 164.3 L340.3 164.3 L341.3 164.1 L342.3 163.8 L343.3 164.3 L344.3 164.1 L345.3 163.9 L346.3 164.3 L347.3 164.2 L348.3 163.8 L349.3 164.3 L350.3 164.2 L351.3 163.8 L352.3 164.3 L353.3 164.3 L354.3 164.1 L355.3 163.8 L356.3 164.2 L357.3 164.1 L358.3 163.6 L359.3 164.3 L360.3 164.1 L361.3 163.6 L362.3 164.3 L363.3 164.4 L364.3 164.1 L365.3 163.7 L366.3 164.3 L367.3 164.0 L368.3 163.5 L369.3 164.4 L370.3 164.1 L371.3 163.6 L372.3 164.3 L373.3 164.3 L374.3 164.0 L375.3 163.7 L376.3 164.2 L377.3 164.0 L378.3 163.5 L379.3 164.2 L380.3 164.2 L381.3 163.7 L382.3 164.3 L383.3 164.4 L384.3 164.1 L385.3 163.5 L386.3 164.3 L387.3 164.0 L388.3 163.6 L389.3 164.3 L390.3 164.0 L391.3 163.5 L392.3 164.3 L393.3 164.1 L394.3 163.9 L395.3 164.4 L396.3 164.3 L397.3 164.1 L398.3 163.9 L399.3 164.4 L400.3 164.1 L401.3 163.9 L402.3 164.4 L403.3 164.2 L404.3 163.7 L405.3 164.3 L406.3 164.4 L407.3 164.0 L408.3 163.5 L409.3 164.3 L410.3 164.0 L411.3 163.6 L412.3 164.3 L413.3 164.1 L414.3 163.6 L415.3 164.2 L416.3 164.4 L417.3 164.1 L418.3 163.7 L419.3 164.3 L420.3 164.0 L421.3 163.6 L422.3 164.3 L423.3 164.0 L424.3 163.6 L425.3 164.2 L426.3 164.3 L427.3 164.1 L428.3 163.5 L429.3 164.3 L430.3 164.1 L431.3 163.5 L432.3 164.2 L433.3 164.2 L434.3 163.7 L435.3 164.3 L436.3 164.4 L437.3 164.2 L438.3 163.8 L439.3 164.2 L440.3 164.0 L441.3 163.6 L442.3 164.3 L443.3 164.0 L444.3 163.6 L445.3 164.4 L446.3 164.0 L447.3 163.5 L448.3 164.2 L449.3 164.2 L450.3 164.2 L451.3 163.7 L452.3 164.4 L453.3 164.0 L454.3 163.5 L455.3 164.2 L456.3 164.1 L457.3 163.8 L458.3 164.3 L459.3 164.3 L460.3 164.0 L461.3 163.4 L462.3 164.3 L463.3 164.0 L464.3 163.6 L465.3 164.4 L466.3 164.1 L467.3 163.7 L468.3 164.3 L469.3 164.2 L470.3 164.1 L471.3 163.8 L472.3 164.3 L473.3 164.1 L474.3 163.6 L475.3 164.4 L476.3 164.1 L477.3 163.5 L478.3 164.3 L479.3 164.3 L480.3 164.0 L481.3 163.7 L482.3 164.3 L483.3 164.1 L484.3 163.8 L485.3 164.4 L486.3 164.1 L487.3 163.7 L488.3 164.3 L489.3 164.1 L490.3 163.5 L491.3 164.2 L492.3 164.4 L493.3 164.1 L494.3 163.8 L495.3 164.3 L496.3 164.1 L497.3 163.5 L498.3 164.3 L499.3 164.2 L500.3 163.7 L501.3 164.3 L502.3 164.3 L503.3 164.1 L504.3 163.8 L505.3 164.2 L506.3 164.2 L507.3 163.8 L508.3 164.4 L509.3 164.1 L510.3 163.5 L511.3 164.3 L512.3 164.3 L513.3 164.0 L514.3 163.5 L515.3 164.3 L516.3 164.1 L517.3 163.7 L518.3 164.3 L519.3 164.1 L520.3 163.9 L521.3 164.3 L522.3 164.3 L523.3 164.1 L524.3 163.6 L525.3 164.4 L526.3 164.0 L527.3 163.4 L528.3 164.4 L529.3 164.1 L530.3 163.9 L531.3 164.4 L532.3 164.3 L533.3 164.0 L534.3 163.6 L535.3 164.3 L536.3 164.0 L537.3 163.6 L538.3 164.3 L539.3 164.1 L540.3 163.6 L541.3 164.3 L542.3 164.0 L543.3 163.7 L544.3 164.3 L545.3 164.3 L546.3 164.1 L547.3 163.5 L548.3 164.3 L549.3 164.2 L550.3 163.8 L551.3 164.4 L552.3 164.1 L553.3 163.8 L554.3 164.3 L555.3 164.4 L556.3 164.1 L557.3 163.6 L558.3 164.3 L559.3 164.0 L560.3 163.6 L561.3 164.3 L562.3 164.0 L563.3 163.6 L564.3 164.3 L565.3 164.2 L566.3 164.0 L567.3 163.8 L568.3 164.3 L569.3 164.0 L570.3 163.5 L571.3 164.3 L572.3 164.1 L573.3 163.7 L574.3 164.3 L575.3 164.4 L576.3 164.0 L577.3 163.5 L578.3 164.4 L579.3 164.1 L580.3 163.5 L581.3 164.3 L582.3 164.1 L583.3 163.6 L584.3 164.2 L585.3 164.2 L586.3 163.9 L587.3 164.4 L588.3 164.3 L589.3 164.1 L590.3 163.8 L591.3 164.3 L592.3 164.1 L593.3 163.8 L594.3 164.3 L595.3 164.1 L596.3 163.8 L597.3 164.3 L598.3 164.3 L599.3 164.1 L600.3 163.8 L601.3 164.3 L602.3 164.1 L603.3 163.8 L604.3 164.3 L605.3 164.1 L606.3 163.8 L607.3 164.4 L608.3 164.3 L609.3 164.0 L610.3 163.6 L611.3 164.4 L612.3 164.0 L613.3 163.6 L614.3 164.3 L615.3 164.1 L616.3 163.6 L617.3 164.3 L618.3 164.3 L619.3 164.1 L620.3 163.6 L621.3 164.3 L622.3 164.1 L623.3 163.7 L624.3 164.3 L625.3 164.1 L626.3 163.5 L627.3 164.2 L628.3 164.0 L629.3 163.6 L630.3 164.3 L631.3 164.3 L632.3 164.2 L633.3 163.8 L634.3 164.3 L635.3 164.0 L636.3 163.6 L637.3 164.3 L638.3 164.1 L639.3 163.8 L640.3 164.4 L641.3 164.2 L642.3 164.0 L643.3 163.6 L644.3 164.3 L645.3 164.1 L646.3 163.5 L647.3 164.3 L648.3 164.2 L649.3 163.7 L650.3 164.4 L651.3 164.3 L652.3 164.1 L653.3 163.7 L654.3 164.3 L655.3 164.1 L656.3 163.6 L656.3 166.1 L655.3 165.6 L654.3 165.4 L653.3 166.0 L652.3 165.7 L651.3 165.5 L650.3 165.4 L649.3 166.0 L648.3 165.6 L647.3 165.4 L646.3 166.3 L645.3 165.7 L644.3 165.5 L643.3 166.2 L642.3 165.8 L641.3 165.5 L640.3 165.4 L639.3 166.0 L638.3 165.7 L637.3 165.5 L636.3 166.1 L635.3 165.8 L634.3 165.5 L633.3 166.0 L632.3 165.6 L631.3 165.4 L630.3 165.4 L629.3 166.2 L628.3 165.7 L627.3 165.5 L626.3 166.2 L625.3 165.6 L624.3 165.5 L623.3 166.0 L622.3 165.7 L621.3 165.5 L620.3 166.2 L619.3 165.7 L618.3 165.5 L617.3 165.4 L616.3 166.1 L615.3 165.6 L614.3 165.5 L613.3 166.2 L612.3 165.8 L611.3 165.4 L610.3 166.1 L609.3 165.7 L608.3 165.4 L607.3 165.4 L606.3 166.0 L605.3 165.7 L604.3 165.5 L603.3 166.0 L602.3 165.7 L601.3 165.5 L600.3 166.0 L599.3 165.6 L598.3 165.5 L597.3 165.4 L596.3 166.0 L595.3 165.7 L594.3 165.5 L593.3 166.0 L592.3 165.6 L591.3 165.5 L590.3 166.0 L589.3 165.6 L588.3 165.4 L587.3 165.4 L586.3 165.9 L585.3 165.6 L584.3 165.5 L583.3 166.1 L582.3 165.7 L581.3 165.5 L580.3 166.2 L579.3 165.7 L578.3 165.4 L577.3 166.2 L576.3 165.8 L575.3 165.4 L574.3 165.5 L573.3 166.1 L572.3 165.6 L571.3 165.5 L570.3 166.3 L569.3 165.8 L568.3 165.5 L567.3 166.0 L566.3 165.7 L565.3 165.5 L564.3 165.4 L563.3 166.2 L562.3 165.7 L561.3 165.4 L560.3 166.2 L559.3 165.7 L558.3 165.5 L557.3 166.1 L556.3 165.7 L555.3 165.4 L554.3 165.5 L553.3 166.0 L552.3 165.6 L551.3 165.4 L550.3 166.0 L549.3 165.6 L548.3 165.5 L547.3 166.2 L546.3 165.7 L545.3 165.5 L544.3 165.4 L543.3 166.1 L542.3 165.7 L541.3 165.4 L540.3 166.1 L539.3 165.6 L538.3 165.4 L537.3 166.2 L536.3 165.7 L535.3 165.4 L534.3 166.2 L533.3 165.7 L532.3 165.4 L531.3 165.4 L530.3 165.9 L529.3 165.6 L528.3 165.4 L527.3 166.3 L526.3 165.8 L525.3 165.4 L524.3 166.1 L523.3 165.7 L522.3 165.5 L521.3 165.4 L520.3 165.9 L519.3 165.7 L518.3 165.4 L517.3 166.1 L516.3 165.7 L515.3 165.4 L514.3 166.3 L513.3 165.7 L512.3 165.4 L511.3 165.4 L510.3 166.3 L509.3 165.7 L508.3 165.4 L507.3 166.0 L506.3 165.6 L505.3 165.5 L504.3 166.0 L503.3 165.7 L502.3 165.4 L501.3 165.5 L500.3 166.1 L499.3 165.6 L498.3 165.5 L497.3 166.2 L496.3 165.7 L495.3 165.4 L494.3 165.9 L493.3 165.7 L492.3 165.4 L491.3 165.5 L490.3 166.2 L489.3 165.7 L488.3 165.5 L487.3 166.0 L486.3 165.7 L485.3 165.4 L484.3 166.0 L483.3 165.6 L482.3 165.4 L481.3 166.0 L480.3 165.7 L479.3 165.4 L478.3 165.5 L477.3 166.2 L476.3 165.7 L475.3 165.4 L474.3 166.2 L473.3 165.6 L472.3 165.5 L471.3 166.0 L470.3 165.7 L469.3 165.5 L468.3 165.4 L467.3 166.1 L466.3 165.6 L465.3 165.4 L464.3 166.2 L463.3 165.8 L462.3 165.5 L461.3 166.3 L460.3 165.8 L459.3 165.4 L458.3 165.5 L457.3 166.0 L456.3 165.6 L455.3 165.5 L454.3 166.2 L453.3 165.8 L452.3 165.4 L451.3 166.0 L450.3 165.6 L449.3 165.5 L448.3 165.5 L447.3 166.3 L446.3 165.7 L445.3 165.4 L444.3 166.2 L443.3 165.8 L442.3 165.4 L441.3 166.2 L440.3 165.8 L439.3 165.5 L438.3 166.0 L437.3 165.6 L436.3 165.4 L435.3 165.5 L434.3 166.0 L433.3 165.6 L432.3 165.5 L431.3 166.3 L430.3 165.7 L429.3 165.4 L428.3 166.2 L427.3 165.7 L426.3 165.5 L425.3 165.5 L424.3 166.2 L423.3 165.7 L422.3 165.5 L421.3 166.2 L420.3 165.8 L419.3 165.4 L418.3 166.0 L417.3 165.7 L416.3 165.4 L415.3 165.5 L414.3 166.2 L413.3 165.7 L412.3 165.4 L411.3 166.2 L410.3 165.8 L409.3 165.4 L408.3 166.2 L407.3 165.8 L406.3 165.4 L405.3 165.5 L404.3 166.0 L403.3 165.6 L402.3 165.4 L401.3 165.9 L400.3 165.6 L399.3 165.4 L398.3 165.9 L397.3 165.7 L396.3 165.5 L395.3 165.4 L394.3 165.8 L393.3 165.6 L392.3 165.5 L391.3 166.3 L390.3 165.8 L389.3 165.5 L388.3 166.1 L387.3 165.7 L386.3 165.5 L385.3 166.3 L384.3 165.7 L383.3 165.4 L382.3 165.5 L381.3 166.1 L380.3 165.6 L379.3 165.5 L378.3 166.3 L377.3 165.8 L376.3 165.5 L375.3 166.1 L374.3 165.7 L373.3 165.5 L372.3 165.5 L371.3 166.1 L370.3 165.6 L369.3 165.4 L368.3 166.2 L367.3 165.8 L366.3 165.4 L365.3 166.1 L364.3 165.7 L363.3 165.4 L362.3 165.5 L361.3 166.1 L360.3 165.6 L359.3 165.4 L358.3 166.1 L357.3 165.7 L356.3 165.5 L355.3 165.9 L354.3 165.7 L353.3 165.5 L352.3 165.4 L351.3 166.0 L350.3 165.5 L349.3 165.5 L348.3 166.0 L347.3 165.6 L346.3 165.5 L345.3 165.9 L344.3 165.7 L343.3 165.5 L342.3 166.0 L341.3 165.7 L340.3 165.4 L339.3 165.4 L338.3 166.2 L337.3 165.7 L336.3 165.5 L335.3 165.9 L334.3 165.6 L333.3 165.5 L332.3 166.2 L331.3 165.7 L330.3 165.5 L329.3 165.5 L328.3 166.0 L327.3 165.6 L326.3 165.4 L325.3 166.0 L324.3 165.6 L323.3 165.5 L322.3 166.1 L321.3 165.7 L320.3 165.4 L319.3 165.5 L318.3 166.0 L317.3 165.7 L316.3 165.4 L315.3 166.0 L314.3 165.7 L313.3 165.5 L312.3 166.2 L311.3 165.7 L310.3 165.4 L309.3 165.5 L308.3 166.1 L307.3 165.7 L306.3 165.5 L305.3 166.0 L304.3 165.7 L303.3 165.4 L302.3 166.1 L301.3 165.6 L300.3 165.5 L299.3 165.4 L298.3 166.1 L297.3 165.7 L296.3 165.5 L295.3 166.3 L294.3 165.7 L293.3 165.4 L292.3 166.1 L291.3 165.7 L290.3 165.5 L289.3 166.2 L288.3 165.7 L287.3 165.4 L286.3 165.4 L285.3 166.3 L284.3 165.8 L283.3 165.5 L282.3 166.0 L281.3 165.6 L280.3 165.5 L279.3 166.0 L278.3 165.7 L277.3 165.4 L276.3 165.4 L275.3 166.1 L274.3 165.7 L273.3 165.4 L272.3 165.9 L271.3 165.6 L270.3 165.4 L269.3 166.1 L268.3 165.7 L267.3 165.5 L266.3 165.5 L265.3 166.2 L264.3 165.6 L263.3 165.4 L262.3 166.0 L261.3 165.7 L260.3 165.5 L259.3 166.2 L258.3 165.7 L257.3 165.4 L256.3 165.5 L255.3 166.1 L254.3 165.6 L253.3 165.5 L252.3 166.3 L251.3 165.8 L250.3 165.5 L249.3 165.9 L248.3 165.6 L247.3 165.4 L246.3 166.0 L245.3 165.7 L244.3 165.5 L243.3 165.5 L242.3 165.9 L241.3 165.6 L240.3 165.4 L239.3 166.2 L238.3 165.8 L237.3 165.4 L236.3 166.0 L235.3 165.6 L234.3 165.4 L233.3 165.5 L232.3 166.1 L231.3 165.7 L230.3 165.4 L229.3 166.1 L228.3 165.7 L227.3 165.5 L226.3 166.0 L225.3 165.6 L224.3 165.5 L223.3 165.4 L222.3 166.0 L221.3 165.7 L220.3 165.4 L219.3 166.2 L218.3 165.7 L217.3 165.4 L216.3 166.1 L215.3 165.6 L214.3 165.5 L213.3 165.5 L212.3 166.3 L211.3 165.8 L210.3 165.5 L209.3 166.3 L208.3 165.7 L207.3 165.5 L206.3 166.0 L205.3 165.7 L204.3 165.5 L203.3 166.1 L202.3 165.6 L201.3 165.4Z" fill="#086da6"/><rect x="200.8" y="176.16" width="456.8" height="23.28" fill="#11161a"/><rect x="200.8" y="176.96" width="456.8" height="20.50" fill="#06a7ec"/><path d="M201.3 186.0 L202.3 184.5 L203.3 186.9 L204.3 186.9 L205.3 186.9 L206.3 186.9 L207.3 186.9 L208.3 186.0 L209.3 184.5 L210.3 186.9 L211.3 186.9 L212.3 186.9 L213.3 186.9 L214.3 185.8 L215.3 183.9 L216.3 186.9 L217.3 186.9 L218.3 186.6 L219.3 186.2 L220.3 186.9 L221.3 185.8 L222.3 183.9 L223.3 186.9 L224.3 186.9 L225.3 186.9 L226.3 186.9 L227.3 186.1 L228.3 184.6 L229.3 186.9 L230.3 186.9 L231.3 186.9 L232.3 186.9 L233.3 186.9 L234.3 185.8 L235.3 183.9 L236.3 186.9 L237.3 186.9 L238.3 186.9 L239.3 186.9 L240.3 186.9 L241.3 185.7 L242.3 183.6 L243.3 186.9 L244.3 186.9 L245.3 186.9 L246.3 186.9 L247.3 185.9 L248.3 184.2 L249.3 186.9 L250.3 186.9 L251.3 186.6 L252.3 186.2 L253.3 186.9 L254.3 186.0 L255.3 184.5 L256.3 186.9 L257.3 186.9 L258.3 186.9 L259.3 186.9 L260.3 186.9 L261.3 185.8 L262.3 183.8 L263.3 186.9 L264.3 186.9 L265.3 186.9 L266.3 186.9 L267.3 185.9 L268.3 184.1 L269.3 186.9 L270.3 186.9 L271.3 186.9 L272.3 186.9 L273.3 186.9 L274.3 186.0 L275.3 184.4 L276.3 186.9 L277.3 186.9 L278.3 186.9 L279.3 186.9 L280.3 186.0 L281.3 184.5 L282.3 186.9 L283.3 186.9 L284.3 186.9 L285.3 186.9 L286.3 186.9 L287.3 185.8 L288.3 183.9 L289.3 186.9 L290.3 186.9 L291.3 186.9 L292.3 186.9 L293.3 186.9 L294.3 186.0 L295.3 184.4 L296.3 186.9 L297.3 186.6 L298.3 186.2 L299.3 186.9 L300.3 186.0 L301.3 184.3 L302.3 186.9 L303.3 186.9 L304.3 186.9 L305.3 186.9 L306.3 186.9 L307.3 185.9 L308.3 184.0 L309.3 186.9 L310.3 186.9 L311.3 186.9 L312.3 186.9 L313.3 186.9 L314.3 185.9 L315.3 184.1 L316.3 186.9 L317.3 186.6 L318.3 186.2 L319.3 186.9 L320.3 185.7 L321.3 183.6 L322.3 186.9 L323.3 186.6 L324.3 186.2 L325.3 186.9 L326.3 186.9 L327.3 186.0 L328.3 184.4 L329.3 186.9 L330.3 186.9 L331.3 186.9 L332.3 186.9 L333.3 185.8 L334.3 183.9 L335.3 186.9 L336.3 186.9 L337.3 186.6 L338.3 186.2 L339.3 186.9 L340.3 185.9 L341.3 184.0 L342.3 186.9 L343.3 186.6 L344.3 186.2 L345.3 186.9 L346.3 186.9 L347.3 185.8 L348.3 183.9 L349.3 186.9 L350.3 186.9 L351.3 186.9 L352.3 186.9 L353.3 185.7 L354.3 183.7 L355.3 186.9 L356.3 186.9 L357.3 186.9 L358.3 186.9 L359.3 186.9 L360.3 185.9 L361.3 184.1 L362.3 186.9 L363.3 186.9 L364.3 186.9 L365.3 186.9 L366.3 186.9 L367.3 185.9 L368.3 184.1 L369.3 186.9 L370.3 186.9 L371.3 186.9 L372.3 186.9 L373.3 185.7 L374.3 183.6 L375.3 186.9 L376.3 186.9 L377.3 186.9 L378.3 186.9 L379.3 186.9 L380.3 185.9 L381.3 184.2 L382.3 186.9 L383.3 186.9 L384.3 186.9 L385.3 186.9 L386.3 185.8 L387.3 183.9 L388.3 186.9 L389.3 186.9 L390.3 186.9 L391.3 186.9 L392.3 186.9 L393.3 185.8 L394.3 183.9 L395.3 186.9 L396.3 186.9 L397.3 186.9 L398.3 186.9 L399.3 186.9 L400.3 185.7 L401.3 183.5 L402.3 186.9 L403.3 186.9 L404.3 186.9 L405.3 186.9 L406.3 185.9 L407.3 184.2 L408.3 186.9 L409.3 186.9 L410.3 186.9 L411.3 186.9 L412.3 186.9 L413.3 185.7 L414.3 183.5 L415.3 186.9 L416.3 186.6 L417.3 186.2 L418.3 186.9 L419.3 186.1 L420.3 184.6 L421.3 186.9 L422.3 186.9 L423.3 186.9 L424.3 186.9 L425.3 186.9 L426.3 185.7 L427.3 183.6 L428.3 186.9 L429.3 186.6 L430.3 186.2 L431.3 186.9 L432.3 186.9 L433.3 186.0 L434.3 184.4 L435.3 186.9 L436.3 186.9 L437.3 186.9 L438.3 186.9 L439.3 185.7 L440.3 183.5 L441.3 186.9 L442.3 186.9 L443.3 186.6 L444.3 186.2 L445.3 186.9 L446.3 185.9 L447.3 184.1 L448.3 186.9 L449.3 186.9 L450.3 186.9 L451.3 186.9 L452.3 186.9 L453.3 186.0 L454.3 184.4 L455.3 186.9 L456.3 186.6 L457.3 186.2 L458.3 186.9 L459.3 186.0 L460.3 184.5 L461.3 186.9 L462.3 186.6 L463.3 186.2 L464.3 186.9 L465.3 186.9 L466.3 186.0 L467.3 184.4 L468.3 186.9 L469.3 186.6 L470.3 186.2 L471.3 186.9 L472.3 185.9 L473.3 184.2 L474.3 186.9 L475.3 186.9 L476.3 186.6 L477.3 186.2 L478.3 186.9 L479.3 186.0 L480.3 184.5 L481.3 186.9 L482.3 186.6 L483.3 186.2 L484.3 186.9 L485.3 186.9 L486.3 185.9 L487.3 184.2 L488.3 186.9 L489.3 186.6 L490.3 186.2 L491.3 186.9 L492.3 185.8 L493.3 183.8 L494.3 186.9 L495.3 186.9 L496.3 186.6 L497.3 186.2 L498.3 186.9 L499.3 186.0 L500.3 184.4 L501.3 186.9 L502.3 186.6 L503.3 186.2 L504.3 186.9 L505.3 186.9 L506.3 186.0 L507.3 184.3 L508.3 186.9 L509.3 186.9 L510.3 186.9 L511.3 186.9 L512.3 186.0 L513.3 184.4 L514.3 186.9 L515.3 186.6 L516.3 186.2 L517.3 186.9 L518.3 186.9 L519.3 185.8 L520.3 183.7 L521.3 186.9 L522.3 186.9 L523.3 186.9 L524.3 186.9 L525.3 185.9 L526.3 184.1 L527.3 186.9 L528.3 186.9 L529.3 186.9 L530.3 186.9 L531.3 186.9 L532.3 185.8 L533.3 183.9 L534.3 186.9 L535.3 186.6 L536.3 186.2 L537.3 186.9 L538.3 186.9 L539.3 186.1 L540.3 184.5 L541.3 186.9 L542.3 186.6 L543.3 186.2 L544.3 186.9 L545.3 185.8 L546.3 183.7 L547.3 186.9 L548.3 186.9 L549.3 186.6 L550.3 186.2 L551.3 186.9 L552.3 185.7 L553.3 183.7 L554.3 186.9 L555.3 186.9 L556.3 186.9 L557.3 186.9 L558.3 185.7 L559.3 183.6 L560.3 186.9 L561.3 186.9 L562.3 186.6 L563.3 186.2 L564.3 186.9 L565.3 186.1 L566.3 184.7 L567.3 186.9 L568.3 186.6 L569.3 186.2 L570.3 186.9 L571.3 186.9 L572.3 186.0 L573.3 184.4 L574.3 186.9 L575.3 186.9 L576.3 186.9 L577.3 186.9 L578.3 185.8 L579.3 183.8 L580.3 186.9 L581.3 186.9 L582.3 186.9 L583.3 186.9 L584.3 186.9 L585.3 185.8 L586.3 183.8 L587.3 186.9 L588.3 186.9 L589.3 186.9 L590.3 186.9 L591.3 186.9 L592.3 185.8 L593.3 183.9 L594.3 186.9 L595.3 186.6 L596.3 186.2 L597.3 186.9 L598.3 185.7 L599.3 183.7 L600.3 186.9 L601.3 186.9 L602.3 186.6 L603.3 186.2 L604.3 186.9 L605.3 185.8 L606.3 183.7 L607.3 186.9 L608.3 186.9 L609.3 186.9 L610.3 186.9 L611.3 185.7 L612.3 183.6 L613.3 186.9 L614.3 186.9 L615.3 186.6 L616.3 186.2 L617.3 186.9 L618.3 186.0 L619.3 184.4 L620.3 186.9 L621.3 186.9 L622.3 186.9 L623.3 186.9 L624.3 186.9 L625.3 186.0 L626.3 184.5 L627.3 186.9 L628.3 186.6 L629.3 186.2 L630.3 186.9 L631.3 185.8 L632.3 183.9 L633.3 186.9 L634.3 186.9 L635.3 186.6 L636.3 186.2 L637.3 186.9 L638.3 185.7 L639.3 183.6 L640.3 186.9 L641.3 186.9 L642.3 186.9 L643.3 186.9 L644.3 186.9 L645.3 185.9 L646.3 184.3 L647.3 186.9 L648.3 186.6 L649.3 186.2 L650.3 186.9 L651.3 185.7 L652.3 183.6 L653.3 186.9 L654.3 186.6 L655.3 186.2 L656.3 186.9 L656.3 187.9 L655.3 188.6 L654.3 188.1 L653.3 187.9 L652.3 191.2 L651.3 189.0 L650.3 187.9 L649.3 188.6 L648.3 188.1 L647.3 187.9 L646.3 190.5 L645.3 188.8 L644.3 187.9 L643.3 187.9 L642.3 187.9 L641.3 187.9 L640.3 187.9 L639.3 191.1 L638.3 189.0 L637.3 187.9 L636.3 188.6 L635.3 188.1 L634.3 187.9 L633.3 187.9 L632.3 190.8 L631.3 188.9 L630.3 187.9 L629.3 188.6 L628.3 188.1 L627.3 187.9 L626.3 190.2 L625.3 188.7 L624.3 187.9 L623.3 187.9 L622.3 187.9 L621.3 187.9 L620.3 187.9 L619.3 190.3 L618.3 188.7 L617.3 187.9 L616.3 188.6 L615.3 188.1 L614.3 187.9 L613.3 187.9 L612.3 191.1 L611.3 189.0 L610.3 187.9 L609.3 187.9 L608.3 187.9 L607.3 187.9 L606.3 191.0 L605.3 189.0 L604.3 187.9 L603.3 188.6 L602.3 188.1 L601.3 187.9 L600.3 187.9 L599.3 191.1 L598.3 189.0 L597.3 187.9 L596.3 188.6 L595.3 188.1 L594.3 187.9 L593.3 190.8 L592.3 188.9 L591.3 187.9 L590.3 187.9 L589.3 187.9 L588.3 187.9 L587.3 187.9 L586.3 190.9 L585.3 188.9 L584.3 187.9 L583.3 187.9 L582.3 187.9 L581.3 187.9 L580.3 187.9 L579.3 190.9 L578.3 188.9 L577.3 187.9 L576.3 187.9 L575.3 187.9 L574.3 187.9 L573.3 190.3 L572.3 188.7 L571.3 187.9 L570.3 187.9 L569.3 188.6 L568.3 188.1 L567.3 187.9 L566.3 190.1 L565.3 188.6 L564.3 187.9 L563.3 188.6 L562.3 188.1 L561.3 187.9 L560.3 187.9 L559.3 191.2 L558.3 189.0 L557.3 187.9 L556.3 187.9 L555.3 187.9 L554.3 187.9 L553.3 191.1 L552.3 189.0 L551.3 187.9 L550.3 188.6 L549.3 188.1 L548.3 187.9 L547.3 187.9 L546.3 191.0 L545.3 189.0 L544.3 187.9 L543.3 188.6 L542.3 188.1 L541.3 187.9 L540.3 190.2 L539.3 188.7 L538.3 187.9 L537.3 187.9 L536.3 188.6 L535.3 188.1 L534.3 187.9 L533.3 190.8 L532.3 188.9 L531.3 187.9 L530.3 187.9 L529.3 187.9 L528.3 187.9 L527.3 187.9 L526.3 190.6 L525.3 188.8 L524.3 187.9 L523.3 187.9 L522.3 187.9 L521.3 187.9 L520.3 191.0 L519.3 189.0 L518.3 187.9 L517.3 187.9 L516.3 188.6 L515.3 188.1 L514.3 187.9 L513.3 190.3 L512.3 188.7 L511.3 187.9 L510.3 187.9 L509.3 187.9 L508.3 187.9 L507.3 190.4 L506.3 188.8 L505.3 187.9 L504.3 187.9 L503.3 188.6 L502.3 188.1 L501.3 187.9 L500.3 190.4 L499.3 188.7 L498.3 187.9 L497.3 188.6 L496.3 188.1 L495.3 187.9 L494.3 187.9 L493.3 190.9 L492.3 188.9 L491.3 187.9 L490.3 188.6 L489.3 188.1 L488.3 187.9 L487.3 190.6 L486.3 188.8 L485.3 187.9 L484.3 187.9 L483.3 188.6 L482.3 188.1 L481.3 187.9 L480.3 190.2 L479.3 188.7 L478.3 187.9 L477.3 188.6 L476.3 188.1 L475.3 187.9 L474.3 187.9 L473.3 190.5 L472.3 188.8 L471.3 187.9 L470.3 188.6 L469.3 188.1 L468.3 187.9 L467.3 190.3 L466.3 188.7 L465.3 187.9 L464.3 187.9 L463.3 188.6 L462.3 188.1 L461.3 187.9 L460.3 190.2 L459.3 188.7 L458.3 187.9 L457.3 188.6 L456.3 188.1 L455.3 187.9 L454.3 190.3 L453.3 188.7 L452.3 187.9 L451.3 187.9 L450.3 187.9 L449.3 187.9 L448.3 187.9 L447.3 190.6 L446.3 188.8 L445.3 187.9 L444.3 188.6 L443.3 188.1 L442.3 187.9 L441.3 187.9 L440.3 191.2 L439.3 189.0 L438.3 187.9 L437.3 187.9 L436.3 187.9 L435.3 187.9 L434.3 190.4 L433.3 188.7 L432.3 187.9 L431.3 187.9 L430.3 188.6 L429.3 188.1 L428.3 187.9 L427.3 191.1 L426.3 189.0 L425.3 187.9 L424.3 187.9 L423.3 187.9 L422.3 187.9 L421.3 187.9 L420.3 190.1 L419.3 188.7 L418.3 187.9 L417.3 188.6 L416.3 188.1 L415.3 187.9 L414.3 191.2 L413.3 189.0 L412.3 187.9 L411.3 187.9 L410.3 187.9 L409.3 187.9 L408.3 187.9 L407.3 190.5 L406.3 188.8 L405.3 187.9 L404.3 187.9 L403.3 187.9 L402.3 187.9 L401.3 191.2 L400.3 189.0 L399.3 187.9 L398.3 187.9 L397.3 187.9 L396.3 187.9 L395.3 187.9 L394.3 190.8 L393.3 188.9 L392.3 187.9 L391.3 187.9 L390.3 187.9 L389.3 187.9 L388.3 187.9 L387.3 190.8 L386.3 188.9 L385.3 187.9 L384.3 187.9 L383.3 187.9 L382.3 187.9 L381.3 190.5 L380.3 188.8 L379.3 187.9 L378.3 187.9 L377.3 187.9 L376.3 187.9 L375.3 187.9 L374.3 191.1 L373.3 189.0 L372.3 187.9 L371.3 187.9 L370.3 187.9 L369.3 187.9 L368.3 190.6 L367.3 188.8 L366.3 187.9 L365.3 187.9 L364.3 187.9 L363.3 187.9 L362.3 187.9 L361.3 190.6 L360.3 188.8 L359.3 187.9 L358.3 187.9 L357.3 187.9 L356.3 187.9 L355.3 187.9 L354.3 191.1 L353.3 189.0 L352.3 187.9 L351.3 187.9 L350.3 187.9 L349.3 187.9 L348.3 190.9 L347.3 188.9 L346.3 187.9 L345.3 187.9 L344.3 188.6 L343.3 188.1 L342.3 187.9 L341.3 190.7 L340.3 188.9 L339.3 187.9 L338.3 188.6 L337.3 188.1 L336.3 187.9 L335.3 187.9 L334.3 190.8 L333.3 188.9 L332.3 187.9 L331.3 187.9 L330.3 187.9 L329.3 187.9 L328.3 190.3 L327.3 188.7 L326.3 187.9 L325.3 187.9 L324.3 188.6 L323.3 188.1 L322.3 187.9 L321.3 191.1 L320.3 189.0 L319.3 187.9 L318.3 188.6 L317.3 188.1 L316.3 187.9 L315.3 190.6 L314.3 188.8 L313.3 187.9 L312.3 187.9 L311.3 187.9 L310.3 187.9 L309.3 187.9 L308.3 190.7 L307.3 188.8 L306.3 187.9 L305.3 187.9 L304.3 187.9 L303.3 187.9 L302.3 187.9 L301.3 190.5 L300.3 188.8 L299.3 187.9 L298.3 188.6 L297.3 188.1 L296.3 187.9 L295.3 190.4 L294.3 188.7 L293.3 187.9 L292.3 187.9 L291.3 187.9 L290.3 187.9 L289.3 187.9 L288.3 190.8 L287.3 188.9 L286.3 187.9 L285.3 187.9 L284.3 187.9 L283.3 187.9 L282.3 187.9 L281.3 190.2 L280.3 188.7 L279.3 187.9 L278.3 187.9 L277.3 187.9 L276.3 187.9 L275.3 190.3 L274.3 188.7 L273.3 187.9 L272.3 187.9 L271.3 187.9 L270.3 187.9 L269.3 187.9 L268.3 190.6 L267.3 188.8 L266.3 187.9 L265.3 187.9 L264.3 187.9 L263.3 187.9 L262.3 190.9 L261.3 188.9 L260.3 187.9 L259.3 187.9 L258.3 187.9 L257.3 187.9 L256.3 187.9 L255.3 190.2 L254.3 188.7 L253.3 187.9 L252.3 188.6 L251.3 188.1 L250.3 187.9 L249.3 187.9 L248.3 190.5 L247.3 188.8 L246.3 187.9 L245.3 187.9 L244.3 187.9 L243.3 187.9 L242.3 191.1 L241.3 189.0 L240.3 187.9 L239.3 187.9 L238.3 187.9 L237.3 187.9 L236.3 187.9 L235.3 190.8 L234.3 188.9 L233.3 187.9 L232.3 187.9 L231.3 187.9 L230.3 187.9 L229.3 187.9 L228.3 190.1 L227.3 188.6 L226.3 187.9 L225.3 187.9 L224.3 187.9 L223.3 187.9 L222.3 190.8 L221.3 188.9 L220.3 187.9 L219.3 188.6 L218.3 188.1 L217.3 187.9 L216.3 187.9 L215.3 190.8 L214.3 188.9 L213.3 187.9 L212.3 187.9 L211.3 187.9 L210.3 187.9 L209.3 190.3 L208.3 188.7 L207.3 187.9 L206.3 187.9 L205.3 187.9 L204.3 187.9 L203.3 187.9 L202.3 190.2 L201.3 188.7Z" fill="#086da6"/><rect x="200.8" y="198.64" width="456.8" height="23.28" fill="#11161a"/><rect x="200.8" y="199.44" width="456.8" height="20.50" fill="#06a7ec"/><path d="M201.3 209.2 L202.3 208.9 L203.3 208.1 L204.3 209.3 L205.3 208.9 L206.3 208.4 L207.3 209.2 L208.3 208.9 L209.3 208.2 L210.3 209.2 L211.3 208.9 L212.3 208.3 L213.3 209.3 L214.3 209.2 L215.3 209.0 L216.3 208.5 L217.3 209.3 L218.3 209.1 L219.3 208.7 L220.3 209.3 L221.3 208.9 L222.3 208.3 L223.3 209.3 L224.3 209.2 L225.3 209.0 L226.3 208.7 L227.3 209.3 L228.3 209.0 L229.3 208.4 L230.3 209.3 L231.3 208.8 L232.3 208.2 L233.3 209.2 L234.3 209.3 L235.3 208.9 L236.3 208.2 L237.3 209.2 L238.3 209.0 L239.3 208.6 L240.3 209.3 L241.3 209.1 L242.3 208.6 L243.3 209.3 L244.3 209.3 L245.3 209.1 L246.3 208.5 L247.3 209.3 L248.3 208.9 L249.3 208.2 L250.3 209.3 L251.3 209.1 L252.3 208.7 L253.3 209.3 L254.3 209.0 L255.3 208.6 L256.3 209.3 L257.3 209.3 L258.3 209.0 L259.3 208.6 L260.3 209.2 L261.3 209.0 L262.3 208.6 L263.3 209.3 L264.3 208.9 L265.3 208.3 L266.3 209.3 L267.3 209.3 L268.3 209.1 L269.3 208.5 L270.3 209.3 L271.3 208.9 L272.3 208.4 L273.3 209.2 L274.3 208.9 L275.3 208.2 L276.3 209.3 L277.3 209.2 L278.3 208.9 L279.3 208.3 L280.3 209.3 L281.3 209.0 L282.3 208.4 L283.3 209.3 L284.3 209.0 L285.3 208.3 L286.3 209.3 L287.3 209.3 L288.3 209.0 L289.3 208.4 L290.3 209.3 L291.3 208.9 L292.3 208.2 L293.3 209.2 L294.3 209.0 L295.3 208.5 L296.3 209.3 L297.3 209.0 L298.3 208.4 L299.3 209.3 L300.3 209.3 L301.3 209.0 L302.3 208.3 L303.3 209.3 L304.3 208.9 L305.3 208.1 L306.3 209.3 L307.3 208.9 L308.3 208.3 L309.3 209.3 L310.3 209.3 L311.3 209.0 L312.3 208.4 L313.3 209.2 L314.3 209.0 L315.3 208.5 L316.3 209.3 L317.3 209.0 L318.3 208.5 L319.3 209.2 L320.3 209.3 L321.3 209.0 L322.3 208.6 L323.3 209.3 L324.3 208.9 L325.3 208.1 L326.3 209.3 L327.3 208.9 L328.3 208.1 L329.3 209.3 L330.3 209.3 L331.3 208.9 L332.3 208.2 L333.3 209.3 L334.3 209.0 L335.3 208.4 L336.3 209.3 L337.3 208.9 L338.3 208.2 L339.3 209.2 L340.3 209.3 L341.3 209.1 L342.3 208.5 L343.3 209.2 L344.3 208.9 L345.3 208.3 L346.3 209.3 L347.3 209.1 L348.3 208.6 L349.3 209.3 L350.3 209.0 L351.3 208.4 L352.3 209.3 L353.3 209.3 L354.3 209.0 L355.3 208.5 L356.3 209.3 L357.3 209.0 L358.3 208.7 L359.3 209.3 L360.3 208.9 L361.3 208.1 L362.3 209.3 L363.3 209.2 L364.3 209.1 L365.3 208.6 L366.3 209.3 L367.3 208.9 L368.3 208.2 L369.3 209.2 L370.3 208.9 L371.3 208.3 L372.3 209.2 L373.3 209.3 L374.3 209.1 L375.3 208.6 L376.3 209.3 L377.3 209.0 L378.3 208.4 L379.3 209.3 L380.3 208.9 L381.3 208.1 L382.3 209.3 L383.3 209.3 L384.3 208.9 L385.3 208.0 L386.3 209.3 L387.3 208.9 L388.3 208.4 L389.3 209.2 L390.3 208.9 L391.3 208.3 L392.3 209.2 L393.3 208.9 L394.3 208.3 L395.3 209.3 L396.3 209.2 L397.3 209.0 L398.3 208.5 L399.3 209.2 L400.3 209.0 L401.3 208.3 L402.3 209.3 L403.3 208.9 L404.3 208.3 L405.3 209.3 L406.3 209.2 L407.3 209.0 L408.3 208.4 L409.3 209.3 L410.3 208.9 L411.3 208.2 L412.3 209.3 L413.3 208.9 L414.3 208.4 L415.3 209.3 L416.3 209.3 L417.3 208.9 L418.3 208.2 L419.3 209.3 L420.3 209.0 L421.3 208.7 L422.3 209.3 L423.3 209.0 L424.3 208.5 L425.3 209.3 L426.3 209.3 L427.3 209.0 L428.3 208.6 L429.3 209.2 L430.3 209.0 L431.3 208.3 L432.3 209.3 L433.3 208.9 L434.3 208.1 L435.3 209.3 L436.3 209.3 L437.3 209.0 L438.3 208.4 L439.3 209.3 L440.3 209.0 L441.3 208.3 L442.3 209.3 L443.3 208.9 L444.3 208.3 L445.3 209.3 L446.3 209.1 L447.3 208.5 L448.3 209.3 L449.3 209.3 L450.3 208.9 L451.3 208.4 L452.3 209.2 L453.3 208.9 L454.3 208.3 L455.3 209.3 L456.3 208.9 L457.3 208.3 L458.3 209.3 L459.3 209.3 L460.3 209.0 L461.3 208.5 L462.3 209.3 L463.3 209.0 L464.3 208.4 L465.3 209.2 L466.3 209.0 L467.3 208.4 L468.3 209.2 L469.3 209.3 L470.3 208.9 L471.3 208.3 L472.3 209.3 L473.3 208.9 L474.3 208.3 L475.3 209.3 L476.3 209.0 L477.3 208.5 L478.3 209.3 L479.3 209.2 L480.3 208.9 L481.3 208.2 L482.3 209.3 L483.3 208.8 L484.3 208.2 L485.3 209.3 L486.3 208.9 L487.3 208.4 L488.3 209.3 L489.3 208.8 L490.3 208.1 L491.3 209.3 L492.3 209.2 L493.3 208.9 L494.3 208.5 L495.3 209.3 L496.3 208.9 L497.3 208.1 L498.3 209.3 L499.3 209.0 L500.3 208.6 L501.3 209.3 L502.3 209.2 L503.3 209.0 L504.3 208.4 L505.3 209.2 L506.3 208.9 L507.3 208.2 L508.3 209.3 L509.3 209.1 L510.3 208.7 L511.3 209.3 L512.3 209.3 L513.3 209.0 L514.3 208.3 L515.3 209.3 L516.3 208.9 L517.3 208.1 L518.3 209.3 L519.3 208.9 L520.3 208.1 L521.3 209.3 L522.3 209.3 L523.3 209.0 L524.3 208.3 L525.3 209.3 L526.3 208.9 L527.3 208.4 L528.3 209.3 L529.3 209.0 L530.3 208.5 L531.3 209.3 L532.3 209.3 L533.3 209.0 L534.3 208.2 L535.3 209.2 L536.3 209.1 L537.3 208.6 L538.3 209.2 L539.3 209.1 L540.3 208.6 L541.3 209.3 L542.3 208.9 L543.3 208.1 L544.3 209.3 L545.3 209.3 L546.3 208.9 L547.3 208.3 L548.3 209.3 L549.3 209.1 L550.3 208.6 L551.3 209.3 L552.3 209.0 L553.3 208.5 L554.3 209.2 L555.3 209.3 L556.3 209.0 L557.3 208.5 L558.3 209.2 L559.3 208.9 L560.3 208.1 L561.3 209.3 L562.3 209.0 L563.3 208.5 L564.3 209.3 L565.3 209.3 L566.3 209.0 L567.3 208.2 L568.3 209.3 L569.3 208.9 L570.3 208.2 L571.3 209.3 L572.3 208.9 L573.3 208.5 L574.3 209.3 L575.3 209.2 L576.3 209.0 L577.3 208.5 L578.3 209.3 L579.3 208.9 L580.3 208.4 L581.3 209.3 L582.3 209.0 L583.3 208.4 L584.3 209.3 L585.3 209.0 L586.3 208.4 L587.3 209.3 L588.3 209.2 L589.3 208.9 L590.3 208.5 L591.3 209.3 L592.3 208.9 L593.3 208.2 L594.3 209.3 L595.3 209.0 L596.3 208.4 L597.3 209.2 L598.3 209.3 L599.3 209.1 L600.3 208.6 L601.3 209.3 L602.3 209.0 L603.3 208.3 L604.3 209.3 L605.3 208.9 L606.3 208.1 L607.3 209.3 L608.3 209.2 L609.3 208.9 L610.3 208.2 L611.3 209.2 L612.3 208.9 L613.3 208.4 L614.3 209.3 L615.3 208.9 L616.3 208.2 L617.3 209.3 L618.3 209.3 L619.3 208.8 L620.3 208.1 L621.3 209.3 L622.3 209.1 L623.3 208.7 L624.3 209.3 L625.3 208.9 L626.3 208.4 L627.3 209.3 L628.3 209.1 L629.3 208.7 L630.3 209.2 L631.3 209.3 L632.3 209.0 L633.3 208.5 L634.3 209.3 L635.3 209.0 L636.3 208.5 L637.3 209.3 L638.3 209.0 L639.3 208.5 L640.3 209.3 L641.3 209.2 L642.3 208.9 L643.3 208.3 L644.3 209.2 L645.3 208.9 L646.3 208.2 L647.3 209.2 L648.3 209.0 L649.3 208.6 L650.3 209.2 L651.3 209.3 L652.3 209.0 L653.3 208.6 L654.3 209.3 L655.3 208.9 L656.3 208.1 L656.3 211.6 L655.3 210.8 L654.3 210.4 L653.3 211.0 L652.3 210.6 L651.3 210.3 L650.3 210.5 L649.3 211.1 L648.3 210.7 L647.3 210.5 L646.3 211.5 L645.3 210.8 L644.3 210.4 L643.3 211.3 L642.3 210.8 L641.3 210.4 L640.3 210.4 L639.3 211.2 L638.3 210.7 L637.3 210.4 L636.3 211.2 L635.3 210.7 L634.3 210.4 L633.3 211.2 L632.3 210.7 L631.3 210.4 L630.3 210.4 L629.3 211.0 L628.3 210.6 L627.3 210.4 L626.3 211.3 L625.3 210.7 L624.3 210.3 L623.3 211.0 L622.3 210.6 L621.3 210.4 L620.3 211.6 L619.3 210.9 L618.3 210.3 L617.3 210.4 L616.3 211.5 L615.3 210.8 L614.3 210.4 L613.3 211.3 L612.3 210.7 L611.3 210.4 L610.3 211.5 L609.3 210.8 L608.3 210.4 L607.3 210.4 L606.3 211.6 L605.3 210.8 L604.3 210.4 L603.3 211.4 L602.3 210.7 L601.3 210.3 L600.3 211.1 L599.3 210.6 L598.3 210.4 L597.3 210.4 L596.3 211.3 L595.3 210.7 L594.3 210.4 L593.3 211.5 L592.3 210.8 L591.3 210.4 L590.3 211.2 L589.3 210.7 L588.3 210.4 L587.3 210.3 L586.3 211.3 L585.3 210.7 L584.3 210.3 L583.3 211.3 L582.3 210.7 L581.3 210.4 L580.3 211.3 L579.3 210.8 L578.3 210.4 L577.3 211.2 L576.3 210.6 L575.3 210.4 L574.3 210.4 L573.3 211.1 L572.3 210.7 L571.3 210.4 L570.3 211.5 L569.3 210.8 L568.3 210.3 L567.3 211.5 L566.3 210.7 L565.3 210.4 L564.3 210.4 L563.3 211.2 L562.3 210.6 L561.3 210.4 L560.3 211.5 L559.3 210.7 L558.3 210.5 L557.3 211.1 L556.3 210.6 L555.3 210.4 L554.3 210.4 L553.3 211.2 L552.3 210.7 L551.3 210.4 L550.3 211.1 L549.3 210.6 L548.3 210.4 L547.3 211.4 L546.3 210.7 L545.3 210.4 L544.3 210.3 L543.3 211.6 L542.3 210.8 L541.3 210.4 L540.3 211.0 L539.3 210.6 L538.3 210.4 L537.3 211.1 L536.3 210.6 L535.3 210.4 L534.3 211.4 L533.3 210.7 L532.3 210.4 L531.3 210.4 L530.3 211.2 L529.3 210.7 L528.3 210.4 L527.3 211.3 L526.3 210.7 L525.3 210.4 L524.3 211.4 L523.3 210.7 L522.3 210.4 L521.3 210.4 L520.3 211.6 L519.3 210.8 L518.3 210.4 L517.3 211.6 L516.3 210.8 L515.3 210.4 L514.3 211.3 L513.3 210.7 L512.3 210.4 L511.3 210.4 L510.3 211.0 L509.3 210.6 L508.3 210.4 L507.3 211.4 L506.3 210.8 L505.3 210.4 L504.3 211.3 L503.3 210.6 L502.3 210.4 L501.3 210.4 L500.3 211.1 L499.3 210.7 L498.3 210.3 L497.3 211.6 L496.3 210.8 L495.3 210.4 L494.3 211.2 L493.3 210.7 L492.3 210.4 L491.3 210.3 L490.3 211.6 L489.3 210.9 L488.3 210.4 L487.3 211.3 L486.3 210.8 L485.3 210.4 L484.3 211.5 L483.3 210.8 L482.3 210.4 L481.3 211.4 L480.3 210.8 L479.3 210.4 L478.3 210.4 L477.3 211.2 L476.3 210.7 L475.3 210.3 L474.3 211.4 L473.3 210.8 L472.3 210.4 L471.3 211.4 L470.3 210.7 L469.3 210.4 L468.3 210.4 L467.3 211.3 L466.3 210.7 L465.3 210.4 L464.3 211.3 L463.3 210.7 L462.3 210.4 L461.3 211.2 L460.3 210.6 L459.3 210.4 L458.3 210.4 L457.3 211.4 L456.3 210.8 L455.3 210.4 L454.3 211.4 L453.3 210.8 L452.3 210.4 L451.3 211.2 L450.3 210.7 L449.3 210.4 L448.3 210.4 L447.3 211.1 L446.3 210.6 L445.3 210.4 L444.3 211.4 L443.3 210.8 L442.3 210.4 L441.3 211.4 L440.3 210.7 L439.3 210.4 L438.3 211.3 L437.3 210.7 L436.3 210.4 L435.3 210.3 L434.3 211.6 L433.3 210.8 L432.3 210.4 L431.3 211.3 L430.3 210.7 L429.3 210.4 L428.3 211.0 L427.3 210.7 L426.3 210.4 L425.3 210.4 L424.3 211.2 L423.3 210.7 L422.3 210.4 L421.3 211.0 L420.3 210.6 L419.3 210.3 L418.3 211.5 L417.3 210.8 L416.3 210.4 L415.3 210.4 L414.3 211.3 L413.3 210.7 L412.3 210.4 L411.3 211.5 L410.3 210.8 L409.3 210.4 L408.3 211.3 L407.3 210.7 L406.3 210.4 L405.3 210.4 L404.3 211.4 L403.3 210.8 L402.3 210.4 L401.3 211.4 L400.3 210.7 L399.3 210.4 L398.3 211.1 L397.3 210.7 L396.3 210.5 L395.3 210.4 L394.3 211.4 L393.3 210.8 L392.3 210.4 L391.3 211.4 L390.3 210.8 L389.3 210.4 L388.3 211.3 L387.3 210.8 L386.3 210.4 L385.3 211.6 L384.3 210.8 L383.3 210.4 L382.3 210.4 L381.3 211.6 L380.3 210.8 L379.3 210.4 L378.3 211.3 L377.3 210.7 L376.3 210.4 L375.3 211.1 L374.3 210.6 L373.3 210.4 L372.3 210.5 L371.3 211.4 L370.3 210.7 L369.3 210.4 L368.3 211.5 L367.3 210.7 L366.3 210.3 L365.3 211.1 L364.3 210.6 L363.3 210.4 L362.3 210.4 L361.3 211.6 L360.3 210.8 L359.3 210.4 L358.3 211.0 L357.3 210.6 L356.3 210.4 L355.3 211.2 L354.3 210.6 L353.3 210.3 L352.3 210.4 L351.3 211.2 L350.3 210.7 L349.3 210.4 L348.3 211.0 L347.3 210.6 L346.3 210.4 L345.3 211.3 L344.3 210.7 L343.3 210.5 L342.3 211.1 L341.3 210.6 L340.3 210.4 L339.3 210.5 L338.3 211.5 L337.3 210.8 L336.3 210.4 L335.3 211.3 L334.3 210.7 L333.3 210.4 L332.3 211.5 L331.3 210.8 L330.3 210.3 L329.3 210.4 L328.3 211.5 L327.3 210.8 L326.3 210.4 L325.3 211.6 L324.3 210.8 L323.3 210.4 L322.3 211.1 L321.3 210.7 L320.3 210.4 L319.3 210.5 L318.3 211.2 L317.3 210.6 L316.3 210.4 L315.3 211.2 L314.3 210.7 L313.3 210.4 L312.3 211.3 L311.3 210.7 L310.3 210.4 L309.3 210.4 L308.3 211.4 L307.3 210.8 L306.3 210.4 L305.3 211.6 L304.3 210.8 L303.3 210.4 L302.3 211.4 L301.3 210.7 L300.3 210.4 L299.3 210.4 L298.3 211.3 L297.3 210.7 L296.3 210.4 L295.3 211.2 L294.3 210.6 L293.3 210.4 L292.3 211.5 L291.3 210.8 L290.3 210.4 L289.3 211.3 L288.3 210.7 L287.3 210.4 L286.3 210.4 L285.3 211.4 L284.3 210.7 L283.3 210.4 L282.3 211.3 L281.3 210.7 L280.3 210.4 L279.3 211.4 L278.3 210.8 L277.3 210.5 L276.3 210.4 L275.3 211.5 L274.3 210.8 L273.3 210.4 L272.3 211.3 L271.3 210.8 L270.3 210.4 L269.3 211.1 L268.3 210.6 L267.3 210.3 L266.3 210.4 L265.3 211.3 L264.3 210.8 L263.3 210.4 L262.3 211.1 L261.3 210.6 L260.3 210.5 L259.3 211.0 L258.3 210.7 L257.3 210.4 L256.3 210.4 L255.3 211.1 L254.3 210.7 L253.3 210.4 L252.3 211.0 L251.3 210.6 L250.3 210.4 L249.3 211.5 L248.3 210.8 L247.3 210.4 L246.3 211.2 L245.3 210.6 L244.3 210.4 L243.3 210.4 L242.3 211.0 L241.3 210.6 L240.3 210.4 L239.3 211.1 L238.3 210.6 L237.3 210.4 L236.3 211.5 L235.3 210.8 L234.3 210.3 L233.3 210.4 L232.3 211.5 L231.3 210.8 L230.3 210.4 L229.3 211.3 L228.3 210.7 L227.3 210.4 L226.3 211.0 L225.3 210.7 L224.3 210.5 L223.3 210.4 L222.3 211.4 L221.3 210.8 L220.3 210.4 L219.3 211.0 L218.3 210.6 L217.3 210.4 L216.3 211.2 L215.3 210.7 L214.3 210.4 L213.3 210.4 L212.3 211.4 L211.3 210.7 L210.3 210.4 L209.3 211.5 L208.3 210.8 L207.3 210.4 L206.3 211.3 L205.3 210.8 L204.3 210.3 L203.3 211.5 L202.3 210.8 L201.3 210.4Z" fill="#086da6"/><rect x="200.8" y="221.12" width="456.8" height="23.28" fill="#11161a"/><rect x="200.8" y="221.92" width="456.8" height="20.50" fill="#06a7ec"/><path d="M201.3 231.8 L202.3 231.8 L203.3 231.8 L204.3 231.7 L205.3 231.8 L206.3 231.8 L207.3 231.8 L208.3 231.7 L209.3 231.7 L210.3 231.8 L211.3 231.8 L212.3 231.8 L213.3 231.8 L214.3 231.8 L215.3 231.7 L216.3 231.8 L217.3 231.8 L218.3 231.7 L219.3 231.7 L220.3 231.8 L221.3 231.8 L222.3 231.8 L223.3 231.7 L224.3 231.7 L225.3 231.7 L226.3 231.7 L227.3 231.8 L228.3 231.7 L229.3 231.8 L230.3 231.8 L231.3 231.8 L232.3 231.7 L233.3 231.8 L234.3 231.7 L235.3 231.7 L236.3 231.8 L237.3 231.7 L238.3 231.8 L239.3 231.7 L240.3 231.8 L241.3 231.7 L242.3 231.7 L243.3 231.7 L244.3 231.8 L245.3 231.8 L246.3 231.8 L247.3 231.8 L248.3 231.8 L249.3 231.8 L250.3 231.7 L251.3 231.7 L252.3 231.7 L253.3 231.7 L254.3 231.7 L255.3 231.8 L256.3 231.7 L257.3 231.7 L258.3 231.7 L259.3 231.8 L260.3 231.7 L261.3 231.8 L262.3 231.7 L263.3 231.8 L264.3 231.7 L265.3 231.7 L266.3 231.7 L267.3 231.7 L268.3 231.8 L269.3 231.8 L270.3 231.7 L271.3 231.7 L272.3 231.8 L273.3 231.8 L274.3 231.8 L275.3 231.8 L276.3 231.8 L277.3 231.7 L278.3 231.8 L279.3 231.0 L280.3 229.5 L281.3 230.6 L282.3 231.1 L283.3 231.7 L284.3 231.8 L285.3 231.8 L286.3 231.7 L287.3 231.8 L288.3 231.7 L289.3 231.7 L290.3 231.7 L291.3 231.8 L292.3 231.7 L293.3 231.7 L294.3 231.7 L295.3 231.8 L296.3 231.7 L297.3 231.8 L298.3 231.7 L299.3 231.8 L300.3 231.8 L301.3 231.8 L302.3 231.7 L303.3 231.7 L304.3 231.7 L305.3 231.7 L306.3 231.3 L307.3 230.2 L308.3 230.9 L309.3 231.3 L310.3 231.8 L311.3 231.8 L312.3 231.7 L313.3 231.7 L314.3 231.8 L315.3 231.7 L316.3 231.8 L317.3 231.7 L318.3 231.8 L319.3 231.7 L320.3 231.4 L321.3 230.5 L322.3 231.1 L323.3 231.4 L324.3 231.8 L325.3 231.7 L326.3 231.3 L327.3 230.2 L328.3 230.9 L329.3 231.3 L330.3 231.8 L331.3 231.8 L332.3 231.8 L333.3 231.3 L334.3 230.2 L335.3 230.9 L336.3 231.3 L337.3 231.7 L338.3 231.8 L339.3 231.7 L340.3 231.7 L341.3 231.7 L342.3 231.7 L343.3 231.8 L344.3 231.7 L345.3 231.8 L346.3 231.7 L347.3 231.8 L348.3 231.7 L349.3 231.7 L350.3 231.8 L351.3 231.7 L352.3 231.7 L353.3 231.7 L354.3 231.8 L355.3 231.8 L356.3 231.7 L357.3 231.7 L358.3 231.8 L359.3 231.7 L360.3 231.8 L361.3 231.7 L362.3 231.7 L363.3 231.8 L364.3 231.7 L365.3 231.7 L366.3 231.8 L367.3 231.7 L368.3 231.8 L369.3 231.8 L370.3 231.8 L371.3 231.8 L372.3 231.8 L373.3 231.7 L374.3 231.7 L375.3 231.7 L376.3 231.8 L377.3 231.7 L378.3 231.7 L379.3 231.7 L380.3 231.8 L381.3 231.7 L382.3 231.7 L383.3 231.7 L384.3 231.7 L385.3 231.8 L386.3 231.7 L387.3 231.8 L388.3 231.8 L389.3 231.8 L390.3 231.7 L391.3 231.8 L392.3 231.8 L393.3 231.8 L394.3 231.8 L395.3 231.8 L396.3 231.8 L397.3 231.7 L398.3 231.7 L399.3 231.7 L400.3 231.7 L401.3 231.8 L402.3 231.8 L403.3 231.8 L404.3 231.8 L405.3 231.7 L406.3 231.8 L407.3 231.8 L408.3 231.8 L409.3 231.7 L410.3 231.8 L411.3 231.7 L412.3 231.7 L413.3 231.7 L414.3 231.2 L415.3 230.0 L416.3 230.8 L417.3 231.3 L418.3 231.7 L419.3 231.8 L420.3 231.7 L421.3 231.8 L422.3 231.8 L423.3 231.7 L424.3 231.8 L425.3 231.8 L426.3 231.8 L427.3 231.8 L428.3 231.7 L429.3 231.7 L430.3 231.8 L431.3 231.7 L432.3 231.8 L433.3 231.7 L434.3 231.8 L435.3 231.8 L436.3 231.7 L437.3 231.8 L438.3 231.8 L439.3 231.8 L440.3 231.8 L441.3 231.7 L442.3 231.8 L443.3 231.7 L444.3 231.7 L445.3 231.8 L446.3 231.8 L447.3 231.8 L448.3 231.7 L449.3 231.8 L450.3 231.7 L451.3 231.7 L452.3 231.8 L453.3 231.7 L454.3 231.8 L455.3 231.8 L456.3 231.8 L457.3 231.8 L458.3 231.8 L459.3 231.8 L460.3 231.8 L461.3 231.8 L462.3 231.3 L463.3 230.3 L464.3 231.0 L465.3 231.4 L466.3 231.8 L467.3 231.7 L468.3 231.7 L469.3 231.3 L470.3 230.3 L471.3 231.0 L472.3 231.4 L473.3 231.8 L474.3 231.7 L475.3 231.7 L476.3 231.8 L477.3 231.7 L478.3 231.8 L479.3 231.7 L480.3 231.8 L481.3 231.7 L482.3 231.8 L483.3 231.7 L484.3 231.7 L485.3 231.8 L486.3 231.7 L487.3 231.8 L488.3 231.7 L489.3 231.8 L490.3 231.7 L491.3 231.7 L492.3 231.8 L493.3 231.7 L494.3 231.8 L495.3 231.8 L496.3 231.7 L497.3 231.8 L498.3 231.7 L499.3 231.7 L500.3 231.7 L501.3 231.8 L502.3 231.3 L503.3 230.2 L504.3 230.9 L505.3 231.3 L506.3 231.8 L507.3 231.8 L508.3 231.7 L509.3 231.4 L510.3 230.5 L511.3 231.1 L512.3 231.4 L513.3 231.8 L514.3 231.8 L515.3 231.8 L516.3 231.7 L517.3 231.7 L518.3 231.7 L519.3 231.8 L520.3 231.8 L521.3 231.7 L522.3 231.7 L523.3 231.7 L524.3 231.8 L525.3 231.8 L526.3 231.8 L527.3 231.8 L528.3 231.8 L529.3 231.7 L530.3 231.8 L531.3 231.8 L532.3 231.7 L533.3 231.7 L534.3 231.8 L535.3 231.8 L536.3 231.8 L537.3 231.8 L538.3 231.7 L539.3 231.7 L540.3 231.8 L541.3 231.7 L542.3 231.8 L543.3 231.7 L544.3 231.7 L545.3 231.7 L546.3 231.8 L547.3 231.8 L548.3 231.7 L549.3 231.7 L550.3 231.7 L551.3 231.7 L552.3 231.8 L553.3 231.7 L554.3 231.8 L555.3 231.7 L556.3 231.8 L557.3 231.7 L558.3 231.8 L559.3 231.7 L560.3 231.8 L561.3 231.7 L562.3 231.8 L563.3 231.7 L564.3 231.8 L565.3 231.7 L566.3 231.7 L567.3 231.8 L568.3 231.8 L569.3 231.8 L570.3 231.7 L571.3 231.8 L572.3 231.7 L573.3 231.7 L574.3 231.8 L575.3 231.8 L576.3 231.7 L577.3 231.7 L578.3 231.8 L579.3 231.7 L580.3 231.8 L581.3 231.8 L582.3 231.7 L583.3 231.8 L584.3 231.8 L585.3 231.7 L586.3 231.8 L587.3 231.8 L588.3 231.8 L589.3 231.7 L590.3 231.7 L591.3 231.8 L592.3 231.8 L593.3 231.8 L594.3 231.7 L595.3 231.8 L596.3 231.7 L597.3 231.7 L598.3 231.7 L599.3 231.8 L600.3 231.7 L601.3 231.7 L602.3 231.8 L603.3 231.7 L604.3 231.8 L605.3 231.8 L606.3 231.7 L607.3 231.8 L608.3 231.7 L609.3 231.8 L610.3 231.8 L611.3 231.7 L612.3 231.7 L613.3 231.8 L614.3 231.8 L615.3 231.8 L616.3 231.7 L617.3 231.8 L618.3 231.8 L619.3 231.8 L620.3 231.8 L621.3 231.8 L622.3 231.7 L623.3 231.8 L624.3 231.7 L625.3 231.8 L626.3 231.7 L627.3 231.8 L628.3 231.7 L629.3 231.8 L630.3 231.8 L631.3 231.7 L632.3 231.7 L633.3 231.7 L634.3 231.8 L635.3 231.7 L636.3 231.7 L637.3 231.8 L638.3 231.8 L639.3 231.8 L640.3 231.7 L641.3 231.7 L642.3 231.8 L643.3 231.7 L644.3 231.7 L645.3 231.8 L646.3 231.8 L647.3 231.8 L648.3 231.8 L649.3 231.8 L650.3 231.7 L651.3 231.8 L652.3 231.8 L653.3 231.8 L654.3 231.7 L655.3 231.8 L656.3 231.8 L656.3 232.9 L655.3 232.9 L654.3 232.9 L653.3 232.8 L652.3 232.9 L651.3 232.8 L650.3 232.9 L649.3 232.9 L648.3 232.8 L647.3 232.9 L646.3 232.8 L645.3 232.8 L644.3 232.9 L643.3 232.9 L642.3 232.9 L641.3 232.9 L640.3 232.9 L639.3 232.9 L638.3 232.9 L637.3 232.9 L636.3 232.9 L635.3 232.9 L634.3 232.9 L633.3 232.9 L632.3 232.9 L631.3 232.9 L630.3 232.9 L629.3 232.9 L628.3 232.9 L627.3 232.9 L626.3 232.9 L625.3 232.9 L624.3 232.9 L623.3 232.9 L622.3 232.9 L621.3 232.8 L620.3 232.9 L619.3 232.9 L618.3 232.8 L617.3 232.9 L616.3 232.9 L615.3 232.9 L614.3 232.8 L613.3 232.9 L612.3 232.9 L611.3 232.9 L610.3 232.9 L609.3 232.8 L608.3 232.9 L607.3 232.8 L606.3 232.9 L605.3 232.9 L604.3 232.8 L603.3 232.9 L602.3 232.8 L601.3 232.9 L600.3 232.9 L599.3 232.9 L598.3 232.9 L597.3 232.9 L596.3 232.9 L595.3 232.9 L594.3 232.9 L593.3 232.8 L592.3 232.9 L591.3 232.8 L590.3 232.9 L589.3 232.9 L588.3 232.8 L587.3 232.9 L586.3 232.9 L585.3 232.9 L584.3 232.9 L583.3 232.9 L582.3 232.9 L581.3 232.9 L580.3 232.8 L579.3 232.9 L578.3 232.9 L577.3 232.9 L576.3 232.9 L575.3 232.9 L574.3 232.9 L573.3 232.9 L572.3 232.9 L571.3 232.9 L570.3 232.9 L569.3 232.9 L568.3 232.8 L567.3 232.8 L566.3 232.9 L565.3 232.9 L564.3 232.8 L563.3 232.9 L562.3 232.8 L561.3 232.9 L560.3 232.9 L559.3 232.9 L558.3 232.8 L557.3 232.9 L556.3 232.8 L555.3 232.9 L554.3 232.9 L553.3 232.9 L552.3 232.8 L551.3 232.9 L550.3 232.9 L549.3 232.9 L548.3 232.9 L547.3 232.8 L546.3 232.9 L545.3 232.9 L544.3 232.9 L543.3 232.9 L542.3 232.9 L541.3 232.9 L540.3 232.8 L539.3 232.9 L538.3 232.9 L537.3 232.8 L536.3 232.9 L535.3 232.9 L534.3 232.9 L533.3 232.9 L532.3 232.9 L531.3 232.8 L530.3 232.9 L529.3 232.9 L528.3 232.9 L527.3 232.8 L526.3 232.9 L525.3 232.9 L524.3 232.9 L523.3 232.9 L522.3 232.9 L521.3 232.9 L520.3 232.8 L519.3 232.8 L518.3 232.9 L517.3 232.9 L516.3 232.9 L515.3 232.9 L514.3 232.8 L513.3 232.8 L512.3 233.2 L511.3 233.5 L510.3 234.1 L509.3 233.3 L508.3 232.9 L507.3 232.9 L506.3 232.8 L505.3 233.3 L504.3 233.7 L503.3 234.4 L502.3 233.4 L501.3 232.9 L500.3 232.9 L499.3 232.9 L498.3 232.9 L497.3 232.9 L496.3 232.9 L495.3 232.9 L494.3 232.8 L493.3 232.9 L492.3 232.8 L491.3 232.9 L490.3 232.9 L489.3 232.8 L488.3 232.9 L487.3 232.8 L486.3 232.9 L485.3 232.8 L484.3 232.9 L483.3 232.9 L482.3 232.8 L481.3 232.9 L480.3 232.9 L479.3 232.9 L478.3 232.8 L477.3 232.9 L476.3 232.9 L475.3 232.9 L474.3 232.9 L473.3 232.9 L472.3 233.3 L471.3 233.6 L470.3 234.3 L469.3 233.3 L468.3 232.9 L467.3 232.9 L466.3 232.9 L465.3 233.3 L464.3 233.6 L463.3 234.3 L462.3 233.3 L461.3 232.9 L460.3 232.9 L459.3 232.8 L458.3 232.8 L457.3 232.9 L456.3 232.8 L455.3 232.8 L454.3 232.8 L453.3 232.9 L452.3 232.8 L451.3 232.9 L450.3 232.9 L449.3 232.8 L448.3 232.9 L447.3 232.9 L446.3 232.8 L445.3 232.8 L444.3 232.9 L443.3 232.9 L442.3 232.9 L441.3 232.9 L440.3 232.8 L439.3 232.9 L438.3 232.8 L437.3 232.9 L436.3 232.9 L435.3 232.9 L434.3 232.9 L433.3 232.9 L432.3 232.9 L431.3 232.9 L430.3 232.8 L429.3 232.9 L428.3 232.9 L427.3 232.8 L426.3 232.9 L425.3 232.9 L424.3 232.9 L423.3 232.9 L422.3 232.9 L421.3 232.9 L420.3 232.9 L419.3 232.9 L418.3 232.9 L417.3 233.4 L416.3 233.8 L415.3 234.6 L414.3 233.5 L413.3 232.9 L412.3 232.9 L411.3 232.9 L410.3 232.8 L409.3 232.9 L408.3 232.9 L407.3 232.9 L406.3 232.9 L405.3 232.9 L404.3 232.9 L403.3 232.9 L402.3 232.9 L401.3 232.9 L400.3 232.9 L399.3 232.9 L398.3 232.9 L397.3 232.9 L396.3 232.8 L395.3 232.9 L394.3 232.9 L393.3 232.9 L392.3 232.9 L391.3 232.9 L390.3 232.9 L389.3 232.8 L388.3 232.8 L387.3 232.8 L386.3 232.9 L385.3 232.9 L384.3 232.9 L383.3 232.9 L382.3 232.9 L381.3 232.9 L380.3 232.8 L379.3 232.9 L378.3 232.9 L377.3 232.9 L376.3 232.8 L375.3 232.9 L374.3 232.9 L373.3 232.9 L372.3 232.9 L371.3 232.9 L370.3 232.9 L369.3 232.8 L368.3 232.9 L367.3 232.9 L366.3 232.9 L365.3 232.9 L364.3 232.9 L363.3 232.9 L362.3 232.9 L361.3 232.9 L360.3 232.8 L359.3 232.9 L358.3 232.8 L357.3 232.9 L356.3 232.9 L355.3 232.8 L354.3 232.9 L353.3 232.9 L352.3 232.9 L351.3 232.9 L350.3 232.8 L349.3 232.9 L348.3 232.9 L347.3 232.9 L346.3 232.9 L345.3 232.9 L344.3 232.9 L343.3 232.9 L342.3 232.9 L341.3 232.9 L340.3 232.9 L339.3 232.9 L338.3 232.9 L337.3 232.9 L336.3 233.3 L335.3 233.7 L334.3 234.4 L333.3 233.4 L332.3 232.9 L331.3 232.9 L330.3 232.9 L329.3 233.3 L328.3 233.7 L327.3 234.4 L326.3 233.4 L325.3 232.9 L324.3 232.9 L323.3 233.2 L322.3 233.5 L321.3 234.1 L320.3 233.3 L319.3 232.9 L318.3 232.9 L317.3 232.9 L316.3 232.8 L315.3 232.9 L314.3 232.8 L313.3 232.9 L312.3 232.9 L311.3 232.9 L310.3 232.9 L309.3 233.3 L308.3 233.7 L307.3 234.4 L306.3 233.4 L305.3 232.9 L304.3 232.9 L303.3 232.9 L302.3 232.9 L301.3 232.9 L300.3 232.9 L299.3 232.9 L298.3 232.9 L297.3 232.9 L296.3 232.9 L295.3 232.8 L294.3 232.9 L293.3 232.9 L292.3 232.9 L291.3 232.8 L290.3 232.9 L289.3 232.9 L288.3 232.9 L287.3 232.8 L286.3 232.9 L285.3 232.8 L284.3 232.8 L283.3 232.9 L282.3 233.5 L281.3 234.1 L280.3 235.1 L279.3 233.6 L278.3 232.9 L277.3 232.9 L276.3 232.9 L275.3 232.8 L274.3 232.9 L273.3 232.8 L272.3 232.9 L271.3 232.9 L270.3 232.9 L269.3 232.8 L268.3 232.9 L267.3 232.9 L266.3 232.9 L265.3 232.9 L264.3 232.9 L263.3 232.9 L262.3 232.9 L261.3 232.9 L260.3 232.9 L259.3 232.9 L258.3 232.9 L257.3 232.9 L256.3 232.9 L255.3 232.9 L254.3 232.9 L253.3 232.9 L252.3 232.9 L251.3 232.9 L250.3 232.9 L249.3 232.8 L248.3 232.9 L247.3 232.9 L246.3 232.8 L245.3 232.8 L244.3 232.9 L243.3 232.9 L242.3 232.9 L241.3 232.9 L240.3 232.8 L239.3 232.9 L238.3 232.8 L237.3 232.9 L236.3 232.9 L235.3 232.9 L234.3 232.9 L233.3 232.8 L232.3 232.9 L231.3 232.9 L230.3 232.9 L229.3 232.8 L228.3 232.9 L227.3 232.8 L226.3 232.9 L225.3 232.9 L224.3 232.9 L223.3 232.9 L222.3 232.9 L221.3 232.9 L220.3 232.9 L219.3 232.9 L218.3 232.9 L217.3 232.9 L216.3 232.8 L215.3 232.9 L214.3 232.8 L213.3 232.9 L212.3 232.8 L211.3 232.8 L210.3 232.8 L209.3 232.9 L208.3 232.9 L207.3 232.9 L206.3 232.9 L205.3 232.8 L204.3 232.9 L203.3 232.9 L202.3 232.8 L201.3 232.8Z" fill="#086da6"/><rect x="200.8" y="243.60" width="456.8" height="23.28" fill="#11161a"/><rect x="200.8" y="244.40" width="456.8" height="20.50" fill="#06a7ec"/><path d="M201.3 254.3 L202.3 254.3 L203.3 254.2 L204.3 254.2 L205.3 254.3 L206.3 254.3 L207.3 254.2 L208.3 254.2 L209.3 254.2 L210.3 254.3 L211.3 254.3 L212.3 254.3 L213.3 254.2 L214.3 254.3 L215.3 254.2 L216.3 254.3 L217.3 254.3 L218.3 254.2 L219.3 254.2 L220.3 254.3 L221.3 254.3 L222.3 254.3 L223.3 254.2 L224.3 254.2 L225.3 254.2 L226.3 254.2 L227.3 254.3 L228.3 254.2 L229.3 254.3 L230.3 254.3 L231.3 254.3 L232.3 254.2 L233.3 254.3 L234.3 254.2 L235.3 254.2 L236.3 254.3 L237.3 254.2 L238.3 254.3 L239.3 254.2 L240.3 254.3 L241.3 254.2 L242.3 254.2 L243.3 254.2 L244.3 254.3 L245.3 254.3 L246.3 254.3 L247.3 254.3 L248.3 254.2 L249.3 254.3 L250.3 254.2 L251.3 254.2 L252.3 254.2 L253.3 254.2 L254.3 254.2 L255.3 254.3 L256.3 254.2 L257.3 254.2 L258.3 254.2 L259.3 254.2 L260.3 254.2 L261.3 254.2 L262.3 254.2 L263.3 254.3 L264.3 254.2 L265.3 254.2 L266.3 254.2 L267.3 254.2 L268.3 254.2 L269.3 254.3 L270.3 254.2 L271.3 254.2 L272.3 254.3 L273.3 254.3 L274.3 254.3 L275.3 254.3 L276.3 254.3 L277.3 254.2 L278.3 254.2 L279.3 253.5 L280.3 252.0 L281.3 253.0 L282.3 253.6 L283.3 254.2 L284.3 254.3 L285.3 254.3 L286.3 254.2 L287.3 254.3 L288.3 254.2 L289.3 254.2 L290.3 254.2 L291.3 254.3 L292.3 254.2 L293.3 254.2 L294.3 254.2 L295.3 254.3 L296.3 254.2 L297.3 254.3 L298.3 254.2 L299.3 254.2 L300.3 254.2 L301.3 254.2 L302.3 254.2 L303.3 254.2 L304.3 254.2 L305.3 254.2 L306.3 253.7 L307.3 252.7 L308.3 253.4 L309.3 253.8 L310.3 254.2 L311.3 254.3 L312.3 254.2 L313.3 254.2 L314.3 254.3 L315.3 254.2 L316.3 254.3 L317.3 254.2 L318.3 254.2 L319.3 254.2 L320.3 253.8 L321.3 253.0 L322.3 253.6 L323.3 253.9 L324.3 254.3 L325.3 254.2 L326.3 253.7 L327.3 252.7 L328.3 253.4 L329.3 253.8 L330.3 254.2 L331.3 254.2 L332.3 254.2 L333.3 253.7 L334.3 252.7 L335.3 253.4 L336.3 253.8 L337.3 254.2 L338.3 254.3 L339.3 254.2 L340.3 254.2 L341.3 254.2 L342.3 254.2 L343.3 254.3 L344.3 254.2 L345.3 254.3 L346.3 254.2 L347.3 254.3 L348.3 254.2 L349.3 254.2 L350.3 254.3 L351.3 254.2 L352.3 254.2 L353.3 254.2 L354.3 254.3 L355.3 254.3 L356.3 254.2 L357.3 254.2 L358.3 254.3 L359.3 254.2 L360.3 254.3 L361.3 254.2 L362.3 254.2 L363.3 254.2 L364.3 254.2 L365.3 254.2 L366.3 254.2 L367.3 254.2 L368.3 254.3 L369.3 254.3 L370.3 254.2 L371.3 254.2 L372.3 254.2 L373.3 254.2 L374.3 254.2 L375.3 254.2 L376.3 254.3 L377.3 254.2 L378.3 254.2 L379.3 254.2 L380.3 254.3 L381.3 254.2 L382.3 254.2 L383.3 254.2 L384.3 254.2 L385.3 254.3 L386.3 254.2 L387.3 254.3 L388.3 254.3 L389.3 254.3 L390.3 254.2 L391.3 254.3 L392.3 254.3 L393.3 254.3 L394.3 254.3 L395.3 254.3 L396.3 254.3 L397.3 254.2 L398.3 254.2 L399.3 254.2 L400.3 254.2 L401.3 254.3 L402.3 254.2 L403.3 254.3 L404.3 254.3 L405.3 254.2 L406.3 254.3 L407.3 254.2 L408.3 254.3 L409.3 254.2 L410.3 254.3 L411.3 254.2 L412.3 254.2 L413.3 254.2 L414.3 253.7 L415.3 252.5 L416.3 253.3 L417.3 253.8 L418.3 254.2 L419.3 254.3 L420.3 254.2 L421.3 254.2 L422.3 254.3 L423.3 254.2 L424.3 254.3 L425.3 254.3 L426.3 254.3 L427.3 254.3 L428.3 254.2 L429.3 254.2 L430.3 254.3 L431.3 254.2 L432.3 254.2 L433.3 254.2 L434.3 254.2 L435.3 254.2 L436.3 254.2 L437.3 254.3 L438.3 254.3 L439.3 254.2 L440.3 254.3 L441.3 254.2 L442.3 254.2 L443.3 254.2 L444.3 254.2 L445.3 254.3 L446.3 254.3 L447.3 254.3 L448.3 254.2 L449.3 254.3 L450.3 254.2 L451.3 254.2 L452.3 254.3 L453.3 254.2 L454.3 254.3 L455.3 254.3 L456.3 254.3 L457.3 254.3 L458.3 254.3 L459.3 254.3 L460.3 254.3 L461.3 254.2 L462.3 253.8 L463.3 252.8 L464.3 253.5 L465.3 253.8 L466.3 254.2 L467.3 254.2 L468.3 254.2 L469.3 253.8 L470.3 252.8 L471.3 253.5 L472.3 253.8 L473.3 254.2 L474.3 254.2 L475.3 254.2 L476.3 254.3 L477.3 254.2 L478.3 254.3 L479.3 254.2 L480.3 254.3 L481.3 254.2 L482.3 254.3 L483.3 254.2 L484.3 254.2 L485.3 254.3 L486.3 254.2 L487.3 254.3 L488.3 254.2 L489.3 254.3 L490.3 254.2 L491.3 254.2 L492.3 254.3 L493.3 254.2 L494.3 254.3 L495.3 254.3 L496.3 254.2 L497.3 254.3 L498.3 254.2 L499.3 254.2 L500.3 254.2 L501.3 254.3 L502.3 253.7 L503.3 252.7 L504.3 253.4 L505.3 253.8 L506.3 254.3 L507.3 254.2 L508.3 254.2 L509.3 253.8 L510.3 253.0 L511.3 253.6 L512.3 253.9 L513.3 254.3 L514.3 254.3 L515.3 254.3 L516.3 254.2 L517.3 254.2 L518.3 254.2 L519.3 254.3 L520.3 254.3 L521.3 254.2 L522.3 254.2 L523.3 254.2 L524.3 254.3 L525.3 254.3 L526.3 254.3 L527.3 254.3 L528.3 254.2 L529.3 254.2 L530.3 254.2 L531.3 254.3 L532.3 254.2 L533.3 254.2 L534.3 254.3 L535.3 254.2 L536.3 254.3 L537.3 254.3 L538.3 254.2 L539.3 254.2 L540.3 254.3 L541.3 254.2 L542.3 254.2 L543.3 254.2 L544.3 254.2 L545.3 254.2 L546.3 254.2 L547.3 254.3 L548.3 254.2 L549.3 254.2 L550.3 254.2 L551.3 254.2 L552.3 254.3 L553.3 254.2 L554.3 254.2 L555.3 254.2 L556.3 254.3 L557.3 254.2 L558.3 254.3 L559.3 254.2 L560.3 254.3 L561.3 254.2 L562.3 254.3 L563.3 254.2 L564.3 254.3 L565.3 254.2 L566.3 254.2 L567.3 254.3 L568.3 254.3 L569.3 254.3 L570.3 254.2 L571.3 254.2 L572.3 254.2 L573.3 254.2 L574.3 254.2 L575.3 254.3 L576.3 254.2 L577.3 254.2 L578.3 254.3 L579.3 254.2 L580.3 254.3 L581.3 254.2 L582.3 254.2 L583.3 254.2 L584.3 254.3 L585.3 254.2 L586.3 254.3 L587.3 254.3 L588.3 254.3 L589.3 254.2 L590.3 254.2 L591.3 254.3 L592.3 254.3 L593.3 254.3 L594.3 254.2 L595.3 254.3 L596.3 254.2 L597.3 254.2 L598.3 254.2 L599.3 254.2 L600.3 254.2 L601.3 254.2 L602.3 254.3 L603.3 254.2 L604.3 254.3 L605.3 254.2 L606.3 254.2 L607.3 254.3 L608.3 254.2 L609.3 254.3 L610.3 254.3 L611.3 254.2 L612.3 254.2 L613.3 254.3 L614.3 254.3 L615.3 254.2 L616.3 254.2 L617.3 254.3 L618.3 254.3 L619.3 254.2 L620.3 254.2 L621.3 254.3 L622.3 254.2 L623.3 254.3 L624.3 254.2 L625.3 254.3 L626.3 254.2 L627.3 254.3 L628.3 254.2 L629.3 254.3 L630.3 254.3 L631.3 254.2 L632.3 254.2 L633.3 254.2 L634.3 254.2 L635.3 254.2 L636.3 254.2 L637.3 254.2 L638.3 254.3 L639.3 254.3 L640.3 254.2 L641.3 254.2 L642.3 254.3 L643.3 254.2 L644.3 254.2 L645.3 254.3 L646.3 254.3 L647.3 254.3 L648.3 254.3 L649.3 254.3 L650.3 254.2 L651.3 254.3 L652.3 254.2 L653.3 254.3 L654.3 254.2 L655.3 254.2 L656.3 254.3 L656.3 255.3 L655.3 255.4 L654.3 255.4 L653.3 255.3 L652.3 255.4 L651.3 255.3 L650.3 255.4 L649.3 255.3 L648.3 255.3 L647.3 255.3 L646.3 255.3 L645.3 255.3 L644.3 255.4 L643.3 255.4 L642.3 255.3 L641.3 255.4 L640.3 255.4 L639.3 255.3 L638.3 255.3 L637.3 255.4 L636.3 255.4 L635.3 255.4 L634.3 255.4 L633.3 255.4 L632.3 255.4 L631.3 255.4 L630.3 255.3 L629.3 255.3 L628.3 255.4 L627.3 255.3 L626.3 255.4 L625.3 255.3 L624.3 255.4 L623.3 255.3 L622.3 255.4 L621.3 255.3 L620.3 255.4 L619.3 255.4 L618.3 255.3 L617.3 255.3 L616.3 255.4 L615.3 255.4 L614.3 255.3 L613.3 255.3 L612.3 255.4 L611.3 255.4 L610.3 255.3 L609.3 255.3 L608.3 255.4 L607.3 255.3 L606.3 255.4 L605.3 255.4 L604.3 255.3 L603.3 255.4 L602.3 255.3 L601.3 255.4 L600.3 255.4 L599.3 255.4 L598.3 255.4 L597.3 255.4 L596.3 255.4 L595.3 255.3 L594.3 255.4 L593.3 255.3 L592.3 255.3 L591.3 255.3 L590.3 255.4 L589.3 255.4 L588.3 255.3 L587.3 255.3 L586.3 255.3 L585.3 255.4 L584.3 255.3 L583.3 255.4 L582.3 255.4 L581.3 255.4 L580.3 255.3 L579.3 255.4 L578.3 255.3 L577.3 255.4 L576.3 255.4 L575.3 255.3 L574.3 255.4 L573.3 255.4 L572.3 255.4 L571.3 255.4 L570.3 255.4 L569.3 255.3 L568.3 255.3 L567.3 255.3 L566.3 255.4 L565.3 255.4 L564.3 255.3 L563.3 255.4 L562.3 255.3 L561.3 255.4 L560.3 255.3 L559.3 255.4 L558.3 255.3 L557.3 255.4 L556.3 255.3 L555.3 255.4 L554.3 255.4 L553.3 255.4 L552.3 255.3 L551.3 255.4 L550.3 255.4 L549.3 255.4 L548.3 255.4 L547.3 255.3 L546.3 255.4 L545.3 255.4 L544.3 255.4 L543.3 255.4 L542.3 255.4 L541.3 255.4 L540.3 255.3 L539.3 255.4 L538.3 255.4 L537.3 255.3 L536.3 255.3 L535.3 255.4 L534.3 255.3 L533.3 255.4 L532.3 255.4 L531.3 255.3 L530.3 255.4 L529.3 255.4 L528.3 255.4 L527.3 255.3 L526.3 255.3 L525.3 255.3 L524.3 255.3 L523.3 255.4 L522.3 255.4 L521.3 255.4 L520.3 255.3 L519.3 255.3 L518.3 255.4 L517.3 255.4 L516.3 255.4 L515.3 255.3 L514.3 255.3 L513.3 255.3 L512.3 255.7 L511.3 256.0 L510.3 256.6 L509.3 255.8 L508.3 255.4 L507.3 255.4 L506.3 255.3 L505.3 255.8 L504.3 256.2 L503.3 256.9 L502.3 255.9 L501.3 255.3 L500.3 255.4 L499.3 255.4 L498.3 255.4 L497.3 255.3 L496.3 255.4 L495.3 255.3 L494.3 255.3 L493.3 255.4 L492.3 255.3 L491.3 255.4 L490.3 255.4 L489.3 255.3 L488.3 255.4 L487.3 255.3 L486.3 255.4 L485.3 255.3 L484.3 255.4 L483.3 255.4 L482.3 255.3 L481.3 255.4 L480.3 255.3 L479.3 255.4 L478.3 255.3 L477.3 255.4 L476.3 255.3 L475.3 255.4 L474.3 255.4 L473.3 255.4 L472.3 255.8 L471.3 256.1 L470.3 256.8 L469.3 255.8 L468.3 255.4 L467.3 255.4 L466.3 255.4 L465.3 255.8 L464.3 256.1 L463.3 256.8 L462.3 255.8 L461.3 255.4 L460.3 255.3 L459.3 255.3 L458.3 255.3 L457.3 255.3 L456.3 255.3 L455.3 255.3 L454.3 255.3 L453.3 255.4 L452.3 255.3 L451.3 255.4 L450.3 255.4 L449.3 255.3 L448.3 255.4 L447.3 255.3 L446.3 255.3 L445.3 255.3 L444.3 255.4 L443.3 255.4 L442.3 255.4 L441.3 255.4 L440.3 255.3 L439.3 255.4 L438.3 255.3 L437.3 255.3 L436.3 255.4 L435.3 255.4 L434.3 255.4 L433.3 255.4 L432.3 255.4 L431.3 255.4 L430.3 255.3 L429.3 255.4 L428.3 255.4 L427.3 255.3 L426.3 255.3 L425.3 255.3 L424.3 255.3 L423.3 255.4 L422.3 255.3 L421.3 255.4 L420.3 255.4 L419.3 255.3 L418.3 255.4 L417.3 255.8 L416.3 256.3 L415.3 257.1 L414.3 255.9 L413.3 255.4 L412.3 255.4 L411.3 255.4 L410.3 255.3 L409.3 255.4 L408.3 255.3 L407.3 255.4 L406.3 255.3 L405.3 255.4 L404.3 255.3 L403.3 255.3 L402.3 255.4 L401.3 255.3 L400.3 255.4 L399.3 255.4 L398.3 255.4 L397.3 255.4 L396.3 255.3 L395.3 255.3 L394.3 255.3 L393.3 255.3 L392.3 255.3 L391.3 255.3 L390.3 255.4 L389.3 255.3 L388.3 255.3 L387.3 255.3 L386.3 255.4 L385.3 255.3 L384.3 255.4 L383.3 255.4 L382.3 255.4 L381.3 255.4 L380.3 255.3 L379.3 255.4 L378.3 255.4 L377.3 255.4 L376.3 255.3 L375.3 255.4 L374.3 255.4 L373.3 255.4 L372.3 255.4 L371.3 255.4 L370.3 255.4 L369.3 255.3 L368.3 255.3 L367.3 255.4 L366.3 255.4 L365.3 255.4 L364.3 255.4 L363.3 255.4 L362.3 255.4 L361.3 255.4 L360.3 255.3 L359.3 255.4 L358.3 255.3 L357.3 255.4 L356.3 255.4 L355.3 255.3 L354.3 255.3 L353.3 255.4 L352.3 255.4 L351.3 255.4 L350.3 255.3 L349.3 255.4 L348.3 255.4 L347.3 255.3 L346.3 255.4 L345.3 255.3 L344.3 255.4 L343.3 255.3 L342.3 255.4 L341.3 255.4 L340.3 255.4 L339.3 255.4 L338.3 255.3 L337.3 255.4 L336.3 255.8 L335.3 256.2 L334.3 256.9 L333.3 255.9 L332.3 255.4 L331.3 255.4 L330.3 255.4 L329.3 255.8 L328.3 256.2 L327.3 256.9 L326.3 255.9 L325.3 255.4 L324.3 255.3 L323.3 255.7 L322.3 256.0 L321.3 256.6 L320.3 255.8 L319.3 255.4 L318.3 255.4 L317.3 255.4 L316.3 255.3 L315.3 255.4 L314.3 255.3 L313.3 255.4 L312.3 255.4 L311.3 255.3 L310.3 255.4 L309.3 255.8 L308.3 256.2 L307.3 256.9 L306.3 255.9 L305.3 255.4 L304.3 255.4 L303.3 255.4 L302.3 255.4 L301.3 255.4 L300.3 255.4 L299.3 255.4 L298.3 255.4 L297.3 255.3 L296.3 255.4 L295.3 255.3 L294.3 255.4 L293.3 255.4 L292.3 255.4 L291.3 255.3 L290.3 255.4 L289.3 255.4 L288.3 255.4 L287.3 255.3 L286.3 255.4 L285.3 255.3 L284.3 255.3 L283.3 255.4 L282.3 256.0 L281.3 256.6 L280.3 257.6 L279.3 256.1 L278.3 255.4 L277.3 255.4 L276.3 255.3 L275.3 255.3 L274.3 255.3 L273.3 255.3 L272.3 255.3 L271.3 255.4 L270.3 255.4 L269.3 255.3 L268.3 255.4 L267.3 255.4 L266.3 255.4 L265.3 255.4 L264.3 255.4 L263.3 255.3 L262.3 255.4 L261.3 255.4 L260.3 255.4 L259.3 255.4 L258.3 255.4 L257.3 255.4 L256.3 255.4 L255.3 255.3 L254.3 255.4 L253.3 255.4 L252.3 255.4 L251.3 255.4 L250.3 255.4 L249.3 255.3 L248.3 255.4 L247.3 255.3 L246.3 255.3 L245.3 255.3 L244.3 255.3 L243.3 255.4 L242.3 255.4 L241.3 255.4 L240.3 255.3 L239.3 255.4 L238.3 255.3 L237.3 255.4 L236.3 255.3 L235.3 255.4 L234.3 255.4 L233.3 255.3 L232.3 255.4 L231.3 255.3 L230.3 255.3 L229.3 255.3 L228.3 255.4 L227.3 255.3 L226.3 255.4 L225.3 255.4 L224.3 255.4 L223.3 255.4 L222.3 255.3 L221.3 255.3 L220.3 255.3 L219.3 255.4 L218.3 255.4 L217.3 255.3 L216.3 255.3 L215.3 255.4 L214.3 255.3 L213.3 255.4 L212.3 255.3 L211.3 255.3 L210.3 255.3 L209.3 255.4 L208.3 255.4 L207.3 255.4 L206.3 255.3 L205.3 255.3 L204.3 255.4 L203.3 255.4 L202.3 255.3 L201.3 255.3Z" fill="#086da6"/><rect x="200.8" y="266.08" width="456.8" height="23.28" fill="#11161a"/><rect x="200.8" y="266.88" width="456.8" height="20.50" fill="#06a7ec"/><path d="M201.3 275.9 L202.3 274.6 L203.3 276.6 L204.3 276.0 L205.3 275.3 L206.3 276.6 L207.3 276.1 L208.3 275.4 L209.3 276.6 L210.3 276.0 L211.3 274.6 L212.3 276.7 L213.3 276.6 L214.3 276.2 L215.3 275.5 L216.3 276.7 L217.3 276.2 L218.3 275.1 L219.3 276.7 L220.3 276.1 L221.3 275.0 L222.3 276.8 L223.3 276.5 L224.3 276.0 L225.3 275.0 L226.3 276.6 L227.3 276.4 L228.3 275.7 L229.3 276.6 L230.3 276.0 L231.3 274.9 L232.3 276.5 L233.3 276.7 L234.3 276.2 L235.3 275.0 L236.3 276.8 L237.3 276.0 L238.3 274.7 L239.3 276.5 L240.3 276.4 L241.3 275.6 L242.3 276.8 L243.3 276.6 L244.3 275.9 L245.3 274.5 L246.3 276.8 L247.3 276.2 L248.3 275.6 L249.3 276.7 L250.3 275.8 L251.3 274.6 L252.3 276.8 L253.3 276.3 L254.3 275.3 L255.3 276.5 L256.3 276.8 L257.3 275.9 L258.3 274.6 L259.3 276.5 L260.3 276.1 L261.3 275.5 L262.3 276.5 L263.3 276.2 L264.3 275.3 L265.3 276.8 L266.3 276.6 L267.3 276.1 L268.3 275.7 L269.3 276.6 L270.3 276.1 L271.3 274.8 L272.3 276.6 L273.3 276.0 L274.3 275.1 L275.3 276.6 L276.3 276.7 L277.3 276.2 L278.3 275.4 L279.3 276.7 L280.3 276.2 L281.3 275.5 L282.3 276.7 L283.3 276.2 L284.3 275.7 L285.3 276.6 L286.3 276.5 L287.3 276.3 L288.3 275.4 L289.3 276.7 L290.3 276.0 L291.3 275.2 L292.3 276.6 L293.3 276.0 L294.3 275.3 L295.3 276.7 L296.3 276.1 L297.3 275.0 L298.3 276.6 L299.3 276.5 L300.3 276.3 L301.3 275.7 L302.3 276.7 L303.3 276.0 L304.3 274.6 L305.3 276.6 L306.3 275.8 L307.3 274.6 L308.3 276.7 L309.3 276.8 L310.3 276.1 L311.3 274.9 L312.3 276.6 L313.3 276.0 L314.3 274.8 L315.3 276.5 L316.3 275.9 L317.3 274.7 L318.3 276.5 L319.3 276.6 L320.3 276.3 L321.3 275.5 L322.3 276.5 L323.3 276.2 L324.3 275.1 L325.3 276.7 L326.3 276.2 L327.3 275.8 L328.3 276.6 L329.3 276.5 L330.3 276.0 L331.3 274.7 L332.3 276.6 L333.3 276.2 L334.3 275.2 L335.3 276.7 L336.3 276.1 L337.3 275.6 L338.3 276.6 L339.3 276.5 L340.3 276.2 L341.3 275.3 L342.3 276.6 L343.3 275.9 L344.3 274.9 L345.3 276.6 L346.3 276.1 L347.3 275.1 L348.3 276.8 L349.3 276.1 L350.3 275.7 L351.3 276.5 L352.3 276.7 L353.3 275.9 L354.3 274.7 L355.3 276.6 L356.3 276.3 L357.3 275.7 L358.3 276.7 L359.3 275.9 L360.3 274.9 L361.3 276.5 L362.3 276.6 L363.3 275.9 L364.3 274.6 L365.3 276.8 L366.3 276.1 L367.3 274.8 L368.3 276.6 L369.3 276.0 L370.3 274.6 L371.3 276.5 L372.3 276.6 L373.3 276.1 L374.3 275.1 L375.3 276.5 L376.3 276.4 L377.3 275.4 L378.3 276.6 L379.3 276.1 L380.3 275.3 L381.3 276.5 L382.3 276.5 L383.3 276.1 L384.3 274.7 L385.3 276.8 L386.3 276.0 L387.3 274.9 L388.3 276.7 L389.3 276.1 L390.3 275.2 L391.3 276.6 L392.3 276.0 L393.3 274.6 L394.3 276.6 L395.3 276.7 L396.3 276.3 L397.3 275.7 L398.3 276.7 L399.3 276.2 L400.3 275.1 L401.3 276.7 L402.3 276.2 L403.3 275.5 L404.3 276.6 L405.3 276.7 L406.3 276.2 L407.3 275.2 L408.3 276.7 L409.3 275.8 L410.3 274.7 L411.3 276.5 L412.3 276.2 L413.3 275.5 L414.3 276.6 L415.3 276.5 L416.3 275.9 L417.3 274.7 L418.3 276.7 L419.3 275.9 L420.3 274.5 L421.3 276.7 L422.3 276.0 L423.3 274.8 L424.3 276.7 L425.3 276.7 L426.3 276.2 L427.3 275.8 L428.3 276.7 L429.3 276.1 L430.3 275.2 L431.3 276.5 L432.3 276.0 L433.3 274.9 L434.3 276.7 L435.3 276.5 L436.3 276.4 L437.3 275.8 L438.3 276.7 L439.3 276.1 L440.3 275.4 L441.3 276.6 L442.3 276.4 L443.3 275.7 L444.3 276.5 L445.3 275.9 L446.3 274.8 L447.3 276.5 L448.3 276.6 L449.3 276.0 L450.3 274.7 L451.3 276.5 L452.3 276.0 L453.3 274.5 L454.3 276.5 L455.3 275.9 L456.3 274.8 L457.3 276.5 L458.3 276.7 L459.3 276.0 L460.3 274.9 L461.3 276.6 L462.3 276.4 L463.3 275.7 L464.3 276.6 L465.3 276.1 L466.3 275.1 L467.3 276.7 L468.3 276.8 L469.3 275.9 L470.3 274.7 L471.3 276.6 L472.3 275.9 L473.3 274.8 L474.3 276.6 L475.3 276.2 L476.3 275.8 L477.3 276.6 L478.3 276.6 L479.3 276.3 L480.3 275.6 L481.3 276.7 L482.3 276.2 L483.3 275.5 L484.3 276.5 L485.3 275.8 L486.3 274.7 L487.3 276.6 L488.3 276.1 L489.3 275.6 L490.3 276.6 L491.3 276.7 L492.3 276.1 L493.3 275.4 L494.3 276.6 L495.3 276.3 L496.3 275.2 L497.3 276.7 L498.3 276.0 L499.3 274.8 L500.3 276.6 L501.3 276.6 L502.3 276.2 L503.3 275.5 L504.3 276.6 L505.3 276.2 L506.3 275.4 L507.3 276.5 L508.3 276.0 L509.3 274.8 L510.3 276.7 L511.3 276.8 L512.3 276.4 L513.3 275.6 L514.3 276.7 L515.3 276.3 L516.3 275.7 L517.3 276.7 L518.3 276.2 L519.3 275.6 L520.3 276.7 L521.3 276.5 L522.3 275.9 L523.3 274.5 L524.3 276.7 L525.3 276.1 L526.3 275.5 L527.3 276.7 L528.3 276.2 L529.3 275.3 L530.3 276.8 L531.3 276.5 L532.3 276.1 L533.3 275.3 L534.3 276.7 L535.3 275.8 L536.3 274.6 L537.3 276.5 L538.3 275.9 L539.3 274.9 L540.3 276.6 L541.3 276.1 L542.3 275.1 L543.3 276.6 L544.3 276.6 L545.3 276.0 L546.3 275.3 L547.3 276.7 L548.3 276.2 L549.3 275.3 L550.3 276.5 L551.3 275.9 L552.3 274.8 L553.3 276.6 L554.3 276.7 L555.3 276.3 L556.3 275.7 L557.3 276.8 L558.3 276.1 L559.3 274.9 L560.3 276.7 L561.3 276.3 L562.3 275.3 L563.3 276.7 L564.3 276.8 L565.3 276.3 L566.3 275.3 L567.3 276.5 L568.3 276.1 L569.3 275.2 L570.3 276.6 L571.3 276.3 L572.3 275.5 L573.3 276.5 L574.3 276.6 L575.3 276.0 L576.3 275.0 L577.3 276.5 L578.3 276.2 L579.3 275.7 L580.3 276.6 L581.3 276.3 L582.3 275.8 L583.3 276.7 L584.3 276.3 L585.3 275.4 L586.3 276.8 L587.3 276.5 L588.3 276.1 L589.3 275.7 L590.3 276.6 L591.3 276.0 L592.3 274.8 L593.3 276.8 L594.3 276.0 L595.3 275.2 L596.3 276.6 L597.3 276.7 L598.3 276.2 L599.3 274.9 L600.3 276.6 L601.3 275.8 L602.3 274.8 L603.3 276.5 L604.3 276.3 L605.3 275.4 L606.3 276.6 L607.3 276.8 L608.3 275.8 L609.3 274.5 L610.3 276.6 L611.3 276.2 L612.3 275.4 L613.3 276.5 L614.3 276.3 L615.3 275.3 L616.3 276.5 L617.3 276.7 L618.3 276.2 L619.3 275.2 L620.3 276.6 L621.3 275.9 L622.3 274.9 L623.3 276.7 L624.3 276.0 L625.3 274.9 L626.3 276.5 L627.3 276.4 L628.3 275.5 L629.3 276.7 L630.3 276.5 L631.3 276.1 L632.3 274.6 L633.3 276.6 L634.3 276.0 L635.3 275.1 L636.3 276.6 L637.3 276.1 L638.3 275.5 L639.3 276.6 L640.3 276.7 L641.3 275.9 L642.3 274.8 L643.3 276.5 L644.3 276.0 L645.3 274.6 L646.3 276.6 L647.3 275.9 L648.3 274.8 L649.3 276.5 L650.3 276.7 L651.3 276.1 L652.3 275.2 L653.3 276.6 L654.3 275.9 L655.3 274.6 L656.3 276.6 L656.3 277.9 L655.3 279.9 L654.3 278.7 L653.3 278.0 L652.3 279.3 L651.3 278.4 L650.3 277.9 L649.3 278.0 L648.3 279.8 L647.3 278.7 L646.3 277.9 L645.3 279.9 L644.3 278.6 L643.3 278.1 L642.3 279.8 L641.3 278.6 L640.3 277.8 L639.3 278.0 L638.3 279.0 L637.3 278.4 L636.3 277.9 L635.3 279.4 L634.3 278.5 L633.3 277.9 L632.3 279.9 L631.3 278.5 L630.3 278.0 L629.3 277.9 L628.3 279.0 L627.3 278.2 L626.3 278.0 L625.3 279.7 L624.3 278.6 L623.3 277.8 L622.3 279.6 L621.3 278.6 L620.3 277.9 L619.3 279.3 L618.3 278.4 L617.3 277.9 L616.3 278.0 L615.3 279.3 L614.3 278.3 L613.3 278.0 L612.3 279.1 L611.3 278.4 L610.3 278.0 L609.3 280.0 L608.3 278.8 L607.3 277.8 L606.3 277.9 L605.3 279.1 L604.3 278.3 L603.3 278.1 L602.3 279.8 L601.3 278.7 L600.3 277.9 L599.3 279.6 L598.3 278.4 L597.3 277.9 L596.3 277.9 L595.3 279.4 L594.3 278.5 L593.3 277.8 L592.3 279.7 L591.3 278.6 L590.3 278.0 L589.3 278.9 L588.3 278.4 L587.3 278.1 L586.3 277.8 L585.3 279.1 L584.3 278.3 L583.3 277.8 L582.3 278.8 L581.3 278.3 L580.3 278.0 L579.3 278.8 L578.3 278.4 L577.3 278.0 L576.3 279.6 L575.3 278.6 L574.3 278.0 L573.3 278.0 L572.3 279.0 L571.3 278.3 L570.3 278.0 L569.3 279.4 L568.3 278.4 L567.3 278.1 L566.3 279.3 L565.3 278.3 L564.3 277.8 L563.3 277.9 L562.3 279.2 L561.3 278.2 L560.3 277.9 L559.3 279.7 L558.3 278.5 L557.3 277.8 L556.3 278.8 L555.3 278.3 L554.3 277.8 L553.3 278.0 L552.3 279.7 L551.3 278.7 L550.3 278.1 L549.3 279.2 L548.3 278.4 L547.3 277.9 L546.3 279.3 L545.3 278.6 L544.3 278.0 L543.3 278.0 L542.3 279.5 L541.3 278.5 L540.3 277.9 L539.3 279.7 L538.3 278.6 L537.3 278.1 L536.3 279.9 L535.3 278.8 L534.3 277.9 L533.3 279.2 L532.3 278.5 L531.3 278.0 L530.3 277.8 L529.3 279.3 L528.3 278.3 L527.3 277.8 L526.3 279.1 L525.3 278.5 L524.3 277.8 L523.3 280.1 L522.3 278.7 L521.3 278.1 L520.3 277.9 L519.3 279.0 L518.3 278.4 L517.3 277.8 L516.3 278.9 L515.3 278.3 L514.3 277.9 L513.3 279.0 L512.3 278.2 L511.3 277.8 L510.3 277.9 L509.3 279.7 L508.3 278.5 L507.3 278.0 L506.3 279.2 L505.3 278.4 L504.3 278.0 L503.3 279.1 L502.3 278.4 L501.3 277.9 L500.3 278.0 L499.3 279.8 L498.3 278.5 L497.3 277.8 L496.3 279.3 L495.3 278.3 L494.3 277.9 L493.3 279.2 L492.3 278.5 L491.3 277.8 L490.3 278.0 L489.3 279.0 L488.3 278.4 L487.3 278.0 L486.3 279.9 L485.3 278.8 L484.3 278.0 L483.3 279.0 L482.3 278.4 L481.3 277.8 L480.3 278.9 L479.3 278.2 L478.3 277.9 L477.3 278.0 L476.3 278.7 L475.3 278.3 L474.3 278.0 L473.3 279.8 L472.3 278.6 L471.3 277.9 L470.3 279.9 L469.3 278.6 L468.3 277.8 L467.3 277.8 L466.3 279.5 L465.3 278.4 L464.3 277.9 L463.3 278.8 L462.3 278.1 L461.3 277.9 L460.3 279.7 L459.3 278.5 L458.3 277.8 L457.3 278.1 L456.3 279.8 L455.3 278.7 L454.3 278.1 L453.3 280.0 L452.3 278.5 L451.3 278.1 L450.3 279.9 L449.3 278.5 L448.3 277.9 L447.3 278.1 L446.3 279.7 L445.3 278.7 L444.3 278.1 L443.3 278.9 L442.3 278.2 L441.3 277.9 L440.3 279.1 L439.3 278.5 L438.3 277.9 L437.3 278.8 L436.3 278.1 L435.3 278.0 L434.3 277.8 L433.3 279.6 L432.3 278.5 L431.3 278.1 L430.3 279.4 L429.3 278.5 L428.3 277.9 L427.3 278.8 L426.3 278.3 L425.3 277.9 L424.3 277.9 L423.3 279.7 L422.3 278.5 L421.3 277.8 L420.3 280.1 L419.3 278.7 L418.3 277.8 L417.3 279.9 L416.3 278.6 L415.3 278.0 L414.3 278.0 L413.3 279.1 L412.3 278.3 L411.3 278.1 L410.3 279.9 L409.3 278.8 L408.3 277.8 L407.3 279.3 L406.3 278.4 L405.3 277.9 L404.3 278.0 L403.3 279.0 L402.3 278.3 L401.3 277.9 L400.3 279.4 L399.3 278.3 L398.3 277.9 L397.3 278.9 L396.3 278.2 L395.3 277.9 L394.3 277.9 L393.3 280.0 L392.3 278.6 L391.3 277.9 L390.3 279.4 L389.3 278.4 L388.3 277.8 L387.3 279.6 L386.3 278.6 L385.3 277.8 L384.3 279.9 L383.3 278.5 L382.3 278.0 L381.3 278.0 L380.3 279.3 L379.3 278.5 L378.3 278.0 L377.3 279.1 L376.3 278.2 L375.3 278.0 L374.3 279.5 L373.3 278.5 L372.3 277.9 L371.3 278.0 L370.3 280.0 L369.3 278.6 L368.3 277.9 L367.3 279.8 L366.3 278.4 L365.3 277.8 L364.3 280.0 L363.3 278.7 L362.3 277.9 L361.3 278.1 L360.3 279.7 L359.3 278.6 L358.3 277.8 L357.3 278.9 L356.3 278.3 L355.3 278.0 L354.3 279.8 L353.3 278.6 L352.3 277.8 L351.3 278.0 L350.3 278.9 L349.3 278.4 L348.3 277.8 L347.3 279.4 L346.3 278.4 L345.3 277.9 L344.3 279.7 L343.3 278.7 L342.3 277.9 L341.3 279.3 L340.3 278.4 L339.3 278.0 L338.3 278.0 L337.3 279.0 L336.3 278.4 L335.3 277.9 L334.3 279.3 L333.3 278.3 L332.3 278.0 L331.3 279.9 L330.3 278.6 L329.3 278.1 L328.3 278.0 L327.3 278.8 L326.3 278.4 L325.3 277.9 L324.3 279.5 L323.3 278.4 L322.3 278.0 L321.3 279.1 L320.3 278.3 L319.3 277.9 L318.3 278.0 L317.3 279.9 L316.3 278.7 L315.3 278.0 L314.3 279.8 L313.3 278.6 L312.3 277.9 L311.3 279.7 L310.3 278.5 L309.3 277.8 L308.3 277.8 L307.3 279.9 L306.3 278.7 L305.3 277.9 L304.3 280.0 L303.3 278.5 L302.3 277.9 L301.3 278.9 L300.3 278.3 L299.3 278.0 L298.3 278.0 L297.3 279.6 L296.3 278.5 L295.3 277.9 L294.3 279.3 L293.3 278.5 L292.3 277.9 L291.3 279.4 L290.3 278.5 L289.3 277.9 L288.3 279.1 L287.3 278.3 L286.3 278.1 L285.3 278.0 L284.3 278.8 L283.3 278.3 L282.3 277.8 L281.3 279.1 L280.3 278.4 L279.3 277.9 L278.3 279.2 L277.3 278.4 L276.3 277.8 L275.3 277.9 L274.3 279.4 L273.3 278.6 L272.3 277.9 L271.3 279.8 L270.3 278.5 L269.3 278.0 L268.3 278.9 L267.3 278.4 L266.3 277.9 L265.3 277.8 L264.3 279.3 L263.3 278.4 L262.3 278.0 L261.3 279.1 L260.3 278.5 L259.3 278.0 L258.3 279.9 L257.3 278.7 L256.3 277.8 L255.3 278.0 L254.3 279.3 L253.3 278.3 L252.3 277.8 L251.3 279.9 L250.3 278.7 L249.3 277.9 L248.3 278.9 L247.3 278.4 L246.3 277.8 L245.3 280.1 L244.3 278.7 L243.3 277.9 L242.3 277.8 L241.3 278.9 L240.3 278.1 L239.3 278.1 L238.3 279.9 L237.3 278.6 L236.3 277.8 L235.3 279.6 L234.3 278.4 L233.3 277.9 L232.3 278.0 L231.3 279.6 L230.3 278.5 L229.3 278.0 L228.3 278.9 L227.3 278.2 L226.3 278.0 L225.3 279.6 L224.3 278.5 L223.3 278.1 L222.3 277.8 L221.3 279.6 L220.3 278.4 L219.3 277.8 L218.3 279.5 L217.3 278.3 L216.3 277.9 L215.3 279.0 L214.3 278.3 L213.3 278.0 L212.3 277.9 L211.3 279.9 L210.3 278.6 L209.3 277.9 L208.3 279.1 L207.3 278.4 L206.3 278.0 L205.3 279.2 L204.3 278.5 L203.3 278.0 L202.3 279.9 L201.3 278.7Z" fill="#086da6"/><rect x="200.8" y="288.56" width="456.8" height="23.28" fill="#11161a"/><rect x="200.8" y="289.36" width="456.8" height="20.50" fill="#06a7ec"/><path d="M201.3 298.4 L202.3 297.1 L203.3 299.0 L204.3 298.5 L205.3 297.8 L206.3 299.0 L207.3 298.6 L208.3 297.9 L209.3 299.1 L210.3 298.5 L211.3 297.1 L212.3 299.1 L213.3 299.0 L214.3 298.7 L215.3 298.0 L216.3 299.2 L217.3 298.7 L218.3 297.6 L219.3 299.2 L220.3 298.6 L221.3 297.5 L222.3 299.2 L223.3 299.0 L224.3 298.5 L225.3 297.5 L226.3 299.1 L227.3 298.9 L228.3 298.2 L229.3 299.0 L230.3 298.5 L231.3 297.4 L232.3 299.0 L233.3 299.2 L234.3 298.7 L235.3 297.5 L236.3 299.2 L237.3 298.4 L238.3 297.2 L239.3 299.0 L240.3 298.9 L241.3 298.1 L242.3 299.2 L243.3 299.1 L244.3 298.4 L245.3 297.0 L246.3 299.2 L247.3 298.6 L248.3 298.1 L249.3 299.1 L250.3 298.3 L251.3 297.1 L252.3 299.2 L253.3 298.7 L254.3 297.7 L255.3 299.0 L256.3 299.2 L257.3 298.4 L258.3 297.1 L259.3 299.0 L260.3 298.6 L261.3 298.0 L262.3 299.0 L263.3 298.6 L264.3 297.8 L265.3 299.2 L266.3 299.1 L267.3 298.6 L268.3 298.1 L269.3 299.0 L270.3 298.6 L271.3 297.3 L272.3 299.1 L273.3 298.5 L274.3 297.6 L275.3 299.1 L276.3 299.2 L277.3 298.7 L278.3 297.8 L279.3 299.1 L280.3 298.7 L281.3 298.0 L282.3 299.2 L283.3 298.7 L284.3 298.2 L285.3 299.1 L286.3 299.0 L287.3 298.8 L288.3 297.9 L289.3 299.2 L290.3 298.5 L291.3 297.6 L292.3 299.1 L293.3 298.5 L294.3 297.8 L295.3 299.2 L296.3 298.6 L297.3 297.5 L298.3 299.1 L299.3 299.0 L300.3 298.8 L301.3 298.1 L302.3 299.2 L303.3 298.5 L304.3 297.1 L305.3 299.1 L306.3 298.3 L307.3 297.1 L308.3 299.2 L309.3 299.3 L310.3 298.5 L311.3 297.3 L312.3 299.1 L313.3 298.4 L314.3 297.3 L315.3 299.0 L316.3 298.3 L317.3 297.1 L318.3 299.0 L319.3 299.1 L320.3 298.8 L321.3 298.0 L322.3 299.0 L323.3 298.6 L324.3 297.5 L325.3 299.1 L326.3 298.7 L327.3 298.3 L328.3 299.1 L329.3 299.0 L330.3 298.5 L331.3 297.2 L332.3 299.1 L333.3 298.7 L334.3 297.7 L335.3 299.2 L336.3 298.6 L337.3 298.0 L338.3 299.1 L339.3 299.0 L340.3 298.7 L341.3 297.8 L342.3 299.1 L343.3 298.3 L344.3 297.4 L345.3 299.1 L346.3 298.6 L347.3 297.6 L348.3 299.2 L349.3 298.6 L350.3 298.1 L351.3 299.0 L352.3 299.2 L353.3 298.4 L354.3 297.2 L355.3 299.1 L356.3 298.8 L357.3 298.2 L358.3 299.2 L359.3 298.4 L360.3 297.3 L361.3 299.0 L362.3 299.1 L363.3 298.4 L364.3 297.1 L365.3 299.3 L366.3 298.6 L367.3 297.2 L368.3 299.1 L369.3 298.5 L370.3 297.1 L371.3 299.0 L372.3 299.1 L373.3 298.6 L374.3 297.5 L375.3 299.0 L376.3 298.8 L377.3 297.9 L378.3 299.1 L379.3 298.5 L380.3 297.7 L381.3 299.0 L382.3 299.0 L383.3 298.6 L384.3 297.2 L385.3 299.2 L386.3 298.5 L387.3 297.4 L388.3 299.2 L389.3 298.6 L390.3 297.7 L391.3 299.1 L392.3 298.5 L393.3 297.1 L394.3 299.1 L395.3 299.1 L396.3 298.8 L397.3 298.2 L398.3 299.1 L399.3 298.7 L400.3 297.6 L401.3 299.2 L402.3 298.7 L403.3 298.0 L404.3 299.0 L405.3 299.2 L406.3 298.7 L407.3 297.7 L408.3 299.2 L409.3 298.3 L410.3 297.2 L411.3 299.0 L412.3 298.7 L413.3 298.0 L414.3 299.1 L415.3 299.0 L416.3 298.4 L417.3 297.1 L418.3 299.2 L419.3 298.3 L420.3 297.0 L421.3 299.2 L422.3 298.5 L423.3 297.3 L424.3 299.2 L425.3 299.2 L426.3 298.7 L427.3 298.3 L428.3 299.2 L429.3 298.6 L430.3 297.6 L431.3 299.0 L432.3 298.5 L433.3 297.4 L434.3 299.2 L435.3 299.0 L436.3 298.9 L437.3 298.2 L438.3 299.2 L439.3 298.6 L440.3 297.9 L441.3 299.1 L442.3 298.9 L443.3 298.2 L444.3 299.0 L445.3 298.3 L446.3 297.3 L447.3 299.0 L448.3 299.1 L449.3 298.5 L450.3 297.2 L451.3 299.0 L452.3 298.5 L453.3 297.0 L454.3 299.0 L455.3 298.4 L456.3 297.2 L457.3 299.0 L458.3 299.2 L459.3 298.5 L460.3 297.4 L461.3 299.1 L462.3 298.9 L463.3 298.2 L464.3 299.1 L465.3 298.6 L466.3 297.6 L467.3 299.2 L468.3 299.3 L469.3 298.4 L470.3 297.2 L471.3 299.1 L472.3 298.4 L473.3 297.2 L474.3 299.1 L475.3 298.7 L476.3 298.3 L477.3 299.0 L478.3 299.1 L479.3 298.8 L480.3 298.1 L481.3 299.2 L482.3 298.6 L483.3 298.0 L484.3 299.0 L485.3 298.3 L486.3 297.2 L487.3 299.1 L488.3 298.6 L489.3 298.1 L490.3 299.1 L491.3 299.2 L492.3 298.6 L493.3 297.9 L494.3 299.1 L495.3 298.7 L496.3 297.7 L497.3 299.2 L498.3 298.5 L499.3 297.3 L500.3 299.1 L501.3 299.1 L502.3 298.7 L503.3 298.0 L504.3 299.0 L505.3 298.7 L506.3 297.9 L507.3 299.0 L508.3 298.5 L509.3 297.3 L510.3 299.1 L511.3 299.3 L512.3 298.8 L513.3 298.1 L514.3 299.1 L515.3 298.7 L516.3 298.1 L517.3 299.2 L518.3 298.7 L519.3 298.1 L520.3 299.2 L521.3 299.0 L522.3 298.4 L523.3 297.0 L524.3 299.2 L525.3 298.6 L526.3 297.9 L527.3 299.2 L528.3 298.7 L529.3 297.7 L530.3 299.3 L531.3 299.0 L532.3 298.5 L533.3 297.8 L534.3 299.2 L535.3 298.3 L536.3 297.1 L537.3 299.0 L538.3 298.4 L539.3 297.4 L540.3 299.1 L541.3 298.6 L542.3 297.5 L543.3 299.0 L544.3 299.1 L545.3 298.4 L546.3 297.7 L547.3 299.2 L548.3 298.7 L549.3 297.8 L550.3 299.0 L551.3 298.3 L552.3 297.3 L553.3 299.0 L554.3 299.2 L555.3 298.8 L556.3 298.2 L557.3 299.3 L558.3 298.6 L559.3 297.4 L560.3 299.2 L561.3 298.8 L562.3 297.8 L563.3 299.2 L564.3 299.2 L565.3 298.8 L566.3 297.8 L567.3 299.0 L568.3 298.6 L569.3 297.7 L570.3 299.1 L571.3 298.8 L572.3 298.0 L573.3 299.0 L574.3 299.1 L575.3 298.4 L576.3 297.5 L577.3 299.0 L578.3 298.7 L579.3 298.2 L580.3 299.1 L581.3 298.8 L582.3 298.3 L583.3 299.2 L584.3 298.8 L585.3 297.9 L586.3 299.2 L587.3 299.0 L588.3 298.6 L589.3 298.1 L590.3 299.1 L591.3 298.5 L592.3 297.3 L593.3 299.3 L594.3 298.5 L595.3 297.7 L596.3 299.1 L597.3 299.2 L598.3 298.7 L599.3 297.4 L600.3 299.1 L601.3 298.3 L602.3 297.3 L603.3 299.0 L604.3 298.8 L605.3 297.9 L606.3 299.1 L607.3 299.3 L608.3 298.3 L609.3 297.0 L610.3 299.1 L611.3 298.7 L612.3 297.9 L613.3 299.0 L614.3 298.7 L615.3 297.8 L616.3 299.0 L617.3 299.2 L618.3 298.6 L619.3 297.7 L620.3 299.1 L621.3 298.4 L622.3 297.4 L623.3 299.2 L624.3 298.5 L625.3 297.3 L626.3 299.0 L627.3 298.8 L628.3 298.0 L629.3 299.1 L630.3 299.0 L631.3 298.5 L632.3 297.1 L633.3 299.1 L634.3 298.5 L635.3 297.6 L636.3 299.1 L637.3 298.6 L638.3 298.0 L639.3 299.0 L640.3 299.2 L641.3 298.4 L642.3 297.3 L643.3 299.0 L644.3 298.5 L645.3 297.1 L646.3 299.1 L647.3 298.4 L648.3 297.3 L649.3 299.0 L650.3 299.1 L651.3 298.6 L652.3 297.7 L653.3 299.1 L654.3 298.3 L655.3 297.1 L656.3 299.1 L656.3 300.4 L655.3 302.4 L654.3 301.2 L653.3 300.5 L652.3 301.8 L651.3 300.9 L650.3 300.4 L649.3 300.5 L648.3 302.2 L647.3 301.1 L646.3 300.4 L645.3 302.4 L644.3 301.1 L643.3 300.5 L642.3 302.2 L641.3 301.1 L640.3 300.3 L639.3 300.5 L638.3 301.5 L637.3 300.9 L636.3 300.4 L635.3 301.9 L634.3 301.0 L633.3 300.4 L632.3 302.4 L631.3 301.0 L630.3 300.5 L629.3 300.4 L628.3 301.5 L627.3 300.7 L626.3 300.5 L625.3 302.2 L624.3 301.1 L623.3 300.3 L622.3 302.1 L621.3 301.1 L620.3 300.4 L619.3 301.8 L618.3 300.9 L617.3 300.3 L616.3 300.5 L615.3 301.7 L614.3 300.8 L613.3 300.5 L612.3 301.6 L611.3 300.9 L610.3 300.4 L609.3 302.5 L608.3 301.3 L607.3 300.3 L606.3 300.4 L605.3 301.6 L604.3 300.8 L603.3 300.6 L602.3 302.2 L601.3 301.2 L600.3 300.4 L599.3 302.1 L598.3 300.9 L597.3 300.3 L596.3 300.4 L595.3 301.8 L594.3 301.0 L593.3 300.3 L592.3 302.2 L591.3 301.0 L590.3 300.4 L589.3 301.4 L588.3 300.9 L587.3 300.5 L586.3 300.3 L585.3 301.6 L584.3 300.8 L583.3 300.3 L582.3 301.2 L581.3 300.7 L580.3 300.5 L579.3 301.3 L578.3 300.9 L577.3 300.5 L576.3 302.0 L575.3 301.1 L574.3 300.5 L573.3 300.5 L572.3 301.5 L571.3 300.8 L570.3 300.5 L569.3 301.8 L568.3 300.9 L567.3 300.5 L566.3 301.8 L565.3 300.8 L564.3 300.3 L563.3 300.3 L562.3 301.7 L561.3 300.7 L560.3 300.3 L559.3 302.2 L558.3 301.0 L557.3 300.3 L556.3 301.3 L555.3 300.7 L554.3 300.3 L553.3 300.5 L552.3 302.2 L551.3 301.2 L550.3 300.6 L549.3 301.7 L548.3 300.8 L547.3 300.4 L546.3 301.8 L545.3 301.1 L544.3 300.5 L543.3 300.5 L542.3 302.0 L541.3 300.9 L540.3 300.4 L539.3 302.1 L538.3 301.1 L537.3 300.5 L536.3 302.4 L535.3 301.3 L534.3 300.3 L533.3 301.7 L532.3 301.0 L531.3 300.5 L530.3 300.3 L529.3 301.8 L528.3 300.8 L527.3 300.3 L526.3 301.6 L525.3 301.0 L524.3 300.3 L523.3 302.5 L522.3 301.1 L521.3 300.5 L520.3 300.4 L519.3 301.4 L518.3 300.8 L517.3 300.3 L516.3 301.4 L515.3 300.8 L514.3 300.4 L513.3 301.4 L512.3 300.7 L511.3 300.3 L510.3 300.4 L509.3 302.2 L508.3 301.0 L507.3 300.5 L506.3 301.6 L505.3 300.9 L504.3 300.5 L503.3 301.6 L502.3 300.9 L501.3 300.4 L500.3 300.5 L499.3 302.3 L498.3 301.0 L497.3 300.3 L496.3 301.8 L495.3 300.8 L494.3 300.4 L493.3 301.6 L492.3 300.9 L491.3 300.3 L490.3 300.5 L489.3 301.5 L488.3 300.9 L487.3 300.4 L486.3 302.3 L485.3 301.2 L484.3 300.5 L483.3 301.5 L482.3 300.9 L481.3 300.3 L480.3 301.4 L479.3 300.7 L478.3 300.4 L477.3 300.5 L476.3 301.2 L475.3 300.8 L474.3 300.5 L473.3 302.3 L472.3 301.1 L471.3 300.4 L470.3 302.4 L469.3 301.1 L468.3 300.3 L467.3 300.3 L466.3 302.0 L465.3 300.9 L464.3 300.4 L463.3 301.3 L462.3 300.6 L461.3 300.4 L460.3 302.1 L459.3 301.0 L458.3 300.3 L457.3 300.5 L456.3 302.3 L455.3 301.2 L454.3 300.5 L453.3 302.5 L452.3 301.0 L451.3 300.5 L450.3 302.4 L449.3 301.0 L448.3 300.4 L447.3 300.5 L446.3 302.2 L445.3 301.2 L444.3 300.5 L443.3 301.4 L442.3 300.6 L441.3 300.4 L440.3 301.6 L439.3 300.9 L438.3 300.4 L437.3 301.3 L436.3 300.6 L435.3 300.5 L434.3 300.3 L433.3 302.1 L432.3 301.0 L431.3 300.5 L430.3 301.9 L429.3 301.0 L428.3 300.4 L427.3 301.3 L426.3 300.8 L425.3 300.3 L424.3 300.4 L423.3 302.2 L422.3 301.0 L421.3 300.3 L420.3 302.5 L419.3 301.2 L418.3 300.3 L417.3 302.4 L416.3 301.1 L415.3 300.5 L414.3 300.4 L413.3 301.5 L412.3 300.8 L411.3 300.6 L410.3 302.4 L409.3 301.2 L408.3 300.3 L407.3 301.8 L406.3 300.9 L405.3 300.4 L404.3 300.5 L403.3 301.5 L402.3 300.8 L401.3 300.3 L400.3 301.9 L399.3 300.8 L398.3 300.4 L397.3 301.3 L396.3 300.7 L395.3 300.4 L394.3 300.4 L393.3 302.5 L392.3 301.0 L391.3 300.4 L390.3 301.8 L389.3 300.9 L388.3 300.3 L387.3 302.1 L386.3 301.1 L385.3 300.3 L384.3 302.3 L383.3 301.0 L382.3 300.5 L381.3 300.5 L380.3 301.8 L379.3 301.0 L378.3 300.4 L377.3 301.6 L376.3 300.7 L375.3 300.5 L374.3 302.0 L373.3 301.0 L372.3 300.4 L371.3 300.5 L370.3 302.5 L369.3 301.1 L368.3 300.4 L367.3 302.3 L366.3 300.9 L365.3 300.3 L364.3 302.5 L363.3 301.2 L362.3 300.4 L361.3 300.5 L360.3 302.2 L359.3 301.1 L358.3 300.3 L357.3 301.4 L356.3 300.8 L355.3 300.4 L354.3 302.3 L353.3 301.1 L352.3 300.3 L351.3 300.5 L350.3 301.4 L349.3 300.9 L348.3 300.3 L347.3 301.9 L346.3 300.9 L345.3 300.4 L344.3 302.1 L343.3 301.2 L342.3 300.4 L341.3 301.7 L340.3 300.9 L339.3 300.5 L338.3 300.4 L337.3 301.5 L336.3 300.9 L335.3 300.4 L334.3 301.8 L333.3 300.8 L332.3 300.5 L331.3 302.4 L330.3 301.0 L329.3 300.5 L328.3 300.4 L327.3 301.3 L326.3 300.8 L325.3 300.4 L324.3 302.0 L323.3 300.9 L322.3 300.5 L321.3 301.5 L320.3 300.8 L319.3 300.4 L318.3 300.5 L317.3 302.4 L316.3 301.2 L315.3 300.5 L314.3 302.3 L313.3 301.1 L312.3 300.4 L311.3 302.2 L310.3 301.0 L309.3 300.3 L308.3 300.3 L307.3 302.4 L306.3 301.2 L305.3 300.4 L304.3 302.5 L303.3 301.0 L302.3 300.4 L301.3 301.4 L300.3 300.8 L299.3 300.5 L298.3 300.5 L297.3 302.1 L296.3 300.9 L295.3 300.4 L294.3 301.7 L293.3 301.0 L292.3 300.4 L291.3 301.9 L290.3 301.0 L289.3 300.4 L288.3 301.6 L287.3 300.8 L286.3 300.6 L285.3 300.4 L284.3 301.3 L283.3 300.8 L282.3 300.3 L281.3 301.6 L280.3 300.9 L279.3 300.4 L278.3 301.7 L277.3 300.8 L276.3 300.3 L275.3 300.4 L274.3 301.9 L273.3 301.0 L272.3 300.4 L271.3 302.2 L270.3 301.0 L269.3 300.5 L268.3 301.4 L267.3 300.9 L266.3 300.4 L265.3 300.3 L264.3 301.7 L263.3 300.9 L262.3 300.5 L261.3 301.6 L260.3 300.9 L259.3 300.5 L258.3 302.4 L257.3 301.2 L256.3 300.3 L255.3 300.5 L254.3 301.8 L253.3 300.8 L252.3 300.3 L251.3 302.4 L250.3 301.2 L249.3 300.4 L248.3 301.4 L247.3 300.9 L246.3 300.3 L245.3 302.6 L244.3 301.2 L243.3 300.4 L242.3 300.3 L241.3 301.4 L240.3 300.6 L239.3 300.5 L238.3 302.4 L237.3 301.1 L236.3 300.3 L235.3 302.1 L234.3 300.8 L233.3 300.3 L232.3 300.5 L231.3 302.1 L230.3 301.0 L229.3 300.5 L228.3 301.3 L227.3 300.7 L226.3 300.5 L225.3 302.1 L224.3 301.0 L223.3 300.5 L222.3 300.3 L221.3 302.1 L220.3 300.9 L219.3 300.3 L218.3 301.9 L217.3 300.8 L216.3 300.4 L215.3 301.5 L214.3 300.8 L213.3 300.5 L212.3 300.4 L211.3 302.4 L210.3 301.0 L209.3 300.4 L208.3 301.6 L207.3 300.9 L206.3 300.5 L205.3 301.7 L204.3 301.0 L203.3 300.5 L202.3 302.4 L201.3 301.1Z" fill="#086da6"/><rect x="200.8" y="311.04" width="456.8" height="23.28" fill="#11161a"/><rect x="200.8" y="311.84" width="456.8" height="20.50" fill="#f17022"/><path d="M201.3 321.7 L202.3 321.7 L203.3 321.7 L204.3 321.7 L205.3 321.7 L206.3 321.7 L207.3 321.7 L208.3 321.7 L209.3 321.7 L210.3 321.7 L211.3 321.7 L212.3 321.7 L213.3 321.7 L214.3 321.7 L215.3 321.7 L216.3 321.7 L217.3 321.7 L218.3 321.7 L219.3 321.7 L220.3 321.7 L221.3 321.7 L222.3 321.7 L223.3 321.7 L224.3 321.7 L225.3 321.7 L226.3 321.7 L227.3 321.7 L228.3 321.7 L229.3 321.7 L230.3 321.4 L231.3 320.9 L232.3 320.9 L233.3 321.0 L234.3 321.0 L235.3 321.1 L236.3 321.1 L237.3 321.1 L238.3 321.1 L239.3 320.9 L240.3 321.1 L241.3 321.1 L242.3 320.9 L243.3 320.9 L244.3 321.1 L245.3 321.0 L246.3 321.3 L247.3 321.7 L248.3 321.7 L249.3 321.7 L250.3 321.7 L251.3 321.7 L252.3 321.7 L253.3 321.0 L254.3 320.1 L255.3 320.0 L256.3 320.0 L257.3 320.4 L258.3 320.0 L259.3 319.9 L260.3 320.2 L261.3 320.2 L262.3 320.0 L263.3 320.8 L264.3 321.7 L265.3 321.7 L266.3 321.7 L267.3 321.7 L268.3 321.2 L269.3 321.0 L270.3 321.3 L271.3 321.7 L272.3 321.7 L273.3 321.7 L274.3 321.7 L275.3 321.7 L276.3 321.7 L277.3 321.7 L278.3 321.7 L279.3 321.7 L280.3 321.7 L281.3 321.7 L282.3 321.7 L283.3 321.7 L284.3 321.7 L285.3 321.7 L286.3 321.7 L287.3 321.1 L288.3 320.2 L289.3 320.3 L290.3 320.5 L291.3 320.3 L292.3 320.3 L293.3 320.6 L294.3 320.5 L295.3 320.3 L296.3 320.6 L297.3 320.5 L298.3 320.4 L299.3 320.5 L300.3 321.0 L301.3 321.7 L302.3 321.7 L303.3 321.7 L304.3 321.7 L305.3 321.7 L306.3 321.7 L307.3 321.4 L308.3 320.9 L309.3 320.9 L310.3 321.0 L311.3 320.8 L312.3 320.8 L313.3 320.8 L314.3 321.0 L315.3 320.9 L316.3 321.0 L317.3 320.8 L318.3 321.3 L319.3 321.7 L320.3 321.7 L321.3 321.7 L322.3 321.7 L323.3 321.7 L324.3 321.7 L325.3 321.7 L326.3 321.7 L327.3 321.7 L328.3 321.7 L329.3 321.7 L330.3 321.7 L331.3 321.7 L332.3 321.7 L333.3 321.7 L334.3 321.7 L335.3 321.7 L336.3 321.7 L337.3 321.7 L338.3 321.7 L339.3 321.7 L340.3 321.7 L341.3 321.7 L342.3 321.7 L343.3 321.7 L344.3 321.7 L345.3 321.2 L346.3 320.9 L347.3 320.8 L348.3 320.9 L349.3 320.6 L350.3 320.7 L351.3 320.8 L352.3 320.6 L353.3 320.7 L354.3 320.8 L355.3 320.6 L356.3 320.6 L357.3 321.2 L358.3 321.7 L359.3 321.7 L360.3 321.7 L361.3 321.7 L362.3 321.7 L363.3 321.0 L364.3 320.3 L365.3 320.3 L366.3 320.4 L367.3 320.4 L368.3 320.2 L369.3 320.0 L370.3 320.2 L371.3 320.3 L372.3 320.5 L373.3 320.0 L374.3 320.3 L375.3 321.0 L376.3 321.7 L377.3 321.7 L378.3 321.7 L379.3 321.1 L380.3 320.3 L381.3 320.6 L382.3 320.7 L383.3 320.6 L384.3 320.2 L385.3 320.5 L386.3 320.6 L387.3 321.1 L388.3 321.7 L389.3 321.7 L390.3 321.7 L391.3 321.7 L392.3 321.7 L393.3 321.7 L394.3 321.7 L395.3 321.7 L396.3 321.7 L397.3 321.7 L398.3 321.7 L399.3 320.8 L400.3 320.1 L401.3 320.2 L402.3 320.0 L403.3 319.6 L404.3 319.9 L405.3 319.5 L406.3 320.0 L407.3 320.0 L408.3 320.1 L409.3 319.8 L410.3 320.1 L411.3 319.6 L412.3 319.8 L413.3 320.2 L414.3 319.8 L415.3 319.9 L416.3 319.8 L417.3 319.8 L418.3 320.1 L419.3 319.9 L420.3 319.8 L421.3 320.1 L422.3 319.6 L423.3 319.7 L424.3 320.9 L425.3 321.2 L426.3 320.5 L427.3 320.4 L428.3 320.4 L429.3 320.6 L430.3 321.1 L431.3 321.1 L432.3 320.6 L433.3 320.5 L434.3 320.4 L435.3 320.4 L436.3 320.6 L437.3 320.7 L438.3 320.4 L439.3 320.2 L440.3 320.4 L441.3 321.0 L442.3 321.7 L443.3 321.7 L444.3 321.7 L445.3 321.0 L446.3 320.4 L447.3 320.1 L448.3 320.3 L449.3 320.0 L450.3 320.1 L451.3 320.5 L452.3 320.3 L453.3 320.1 L454.3 320.5 L455.3 320.4 L456.3 320.5 L457.3 320.1 L458.3 320.8 L459.3 321.7 L460.3 321.7 L461.3 321.7 L462.3 321.7 L463.3 321.7 L464.3 321.7 L465.3 321.7 L466.3 321.7 L467.3 321.7 L468.3 321.7 L469.3 320.7 L470.3 319.5 L471.3 320.0 L472.3 319.6 L473.3 319.4 L474.3 319.6 L475.3 320.0 L476.3 319.9 L477.3 319.5 L478.3 319.7 L479.3 319.8 L480.3 319.9 L481.3 320.1 L482.3 319.6 L483.3 319.7 L484.3 320.0 L485.3 320.0 L486.3 319.4 L487.3 320.6 L488.3 321.1 L489.3 320.4 L490.3 320.0 L491.3 320.2 L492.3 320.0 L493.3 320.2 L494.3 320.3 L495.3 320.0 L496.3 320.3 L497.3 320.0 L498.3 320.1 L499.3 320.4 L500.3 320.9 L501.3 321.7 L502.3 321.7 L503.3 321.7 L504.3 321.7 L505.3 321.7 L506.3 321.0 L507.3 320.6 L508.3 320.4 L509.3 320.5 L510.3 320.6 L511.3 320.4 L512.3 320.3 L513.3 321.0 L514.3 321.7 L515.3 320.9 L516.3 320.3 L517.3 320.1 L518.3 320.0 L519.3 320.3 L520.3 320.1 L521.3 320.2 L522.3 320.0 L523.3 320.3 L524.3 320.2 L525.3 320.2 L526.3 320.4 L527.3 321.0 L528.3 321.7 L529.3 321.7 L530.3 321.7 L531.3 321.7 L532.3 321.7 L533.3 321.7 L534.3 321.3 L535.3 320.9 L536.3 320.8 L537.3 320.8 L538.3 321.4 L539.3 321.7 L540.3 321.7 L541.3 321.7 L542.3 321.7 L543.3 321.7 L544.3 321.0 L545.3 320.2 L546.3 320.5 L547.3 320.0 L548.3 320.1 L549.3 320.3 L550.3 320.1 L551.3 320.1 L552.3 320.1 L553.3 320.0 L554.3 320.2 L555.3 320.2 L556.3 321.0 L557.3 321.7 L558.3 321.7 L559.3 321.7 L560.3 321.4 L561.3 321.0 L562.3 320.8 L563.3 321.3 L564.3 321.7 L565.3 320.9 L566.3 320.0 L567.3 320.0 L568.3 320.1 L569.3 319.7 L570.3 319.9 L571.3 320.0 L572.3 319.7 L573.3 319.7 L574.3 320.0 L575.3 319.8 L576.3 320.0 L577.3 320.0 L578.3 320.0 L579.3 320.0 L580.3 320.9 L581.3 321.3 L582.3 320.5 L583.3 320.6 L584.3 320.7 L585.3 320.6 L586.3 320.5 L587.3 320.8 L588.3 321.1 L589.3 321.7 L590.3 321.7 L591.3 321.7 L592.3 321.7 L593.3 321.7 L594.3 321.7 L595.3 321.7 L596.3 321.7 L597.3 321.7 L598.3 321.7 L599.3 321.7 L600.3 321.7 L601.3 321.7 L602.3 321.7 L603.3 321.7 L604.3 321.7 L605.3 321.7 L606.3 321.7 L607.3 321.7 L608.3 321.7 L609.3 321.4 L610.3 321.2 L611.3 320.9 L612.3 321.1 L613.3 321.3 L614.3 321.7 L615.3 321.7 L616.3 320.9 L617.3 320.1 L618.3 319.8 L619.3 320.1 L620.3 319.7 L621.3 319.9 L622.3 319.6 L623.3 319.9 L624.3 319.8 L625.3 320.0 L626.3 320.0 L627.3 319.8 L628.3 320.0 L629.3 319.8 L630.3 320.0 L631.3 319.8 L632.3 320.1 L633.3 320.0 L634.3 320.0 L635.3 319.9 L636.3 320.6 L637.3 321.7 L638.3 321.7 L639.3 321.7 L640.3 321.7 L641.3 320.8 L642.3 320.2 L643.3 320.1 L644.3 320.0 L645.3 320.0 L646.3 320.1 L647.3 320.4 L648.3 320.1 L649.3 320.3 L650.3 320.4 L651.3 320.4 L652.3 320.1 L653.3 320.3 L654.3 320.3 L655.3 320.3 L656.3 321.0 L656.3 323.5 L655.3 324.2 L654.3 324.2 L653.3 324.1 L652.3 324.4 L651.3 324.1 L650.3 324.1 L649.3 324.2 L648.3 324.4 L647.3 324.1 L646.3 324.3 L645.3 324.5 L644.3 324.4 L643.3 324.4 L642.3 324.3 L641.3 323.6 L640.3 322.7 L639.3 322.7 L638.3 322.7 L637.3 322.7 L636.3 323.8 L635.3 324.6 L634.3 324.5 L633.3 324.5 L632.3 324.4 L631.3 324.6 L630.3 324.5 L629.3 324.7 L628.3 324.5 L627.3 324.6 L626.3 324.5 L625.3 324.5 L624.3 324.7 L623.3 324.6 L622.3 324.9 L621.3 324.6 L620.3 324.8 L619.3 324.4 L618.3 324.7 L617.3 324.4 L616.3 323.5 L615.3 322.7 L614.3 322.7 L613.3 323.1 L612.3 323.4 L611.3 323.5 L610.3 323.3 L609.3 323.1 L608.3 322.7 L607.3 322.7 L606.3 322.7 L605.3 322.7 L604.3 322.7 L603.3 322.7 L602.3 322.7 L601.3 322.7 L600.3 322.7 L599.3 322.7 L598.3 322.7 L597.3 322.7 L596.3 322.7 L595.3 322.7 L594.3 322.7 L593.3 322.7 L592.3 322.7 L591.3 322.7 L590.3 322.7 L589.3 322.7 L588.3 323.4 L587.3 323.7 L586.3 324.0 L585.3 323.8 L584.3 323.8 L583.3 323.8 L582.3 324.0 L581.3 323.2 L580.3 323.6 L579.3 324.5 L578.3 324.5 L577.3 324.5 L576.3 324.5 L575.3 324.7 L574.3 324.5 L573.3 324.8 L572.3 324.8 L571.3 324.5 L570.3 324.5 L569.3 324.7 L568.3 324.4 L567.3 324.4 L566.3 324.5 L565.3 323.5 L564.3 322.7 L563.3 323.2 L562.3 323.7 L561.3 323.4 L560.3 323.1 L559.3 322.7 L558.3 322.7 L557.3 322.7 L556.3 323.5 L555.3 324.3 L554.3 324.3 L553.3 324.5 L552.3 324.4 L551.3 324.4 L550.3 324.3 L549.3 324.2 L548.3 324.3 L547.3 324.5 L546.3 324.0 L545.3 324.2 L544.3 323.5 L543.3 322.7 L542.3 322.7 L541.3 322.7 L540.3 322.7 L539.3 322.7 L538.3 323.1 L537.3 323.7 L536.3 323.7 L535.3 323.6 L534.3 323.2 L533.3 322.7 L532.3 322.7 L531.3 322.7 L530.3 322.7 L529.3 322.7 L528.3 322.7 L527.3 323.5 L526.3 324.1 L525.3 324.2 L524.3 324.3 L523.3 324.2 L522.3 324.5 L521.3 324.2 L520.3 324.4 L519.3 324.2 L518.3 324.5 L517.3 324.3 L516.3 324.2 L515.3 323.6 L514.3 322.7 L513.3 323.5 L512.3 324.2 L511.3 324.1 L510.3 323.9 L509.3 324.0 L508.3 324.0 L507.3 323.8 L506.3 323.5 L505.3 322.7 L504.3 322.7 L503.3 322.7 L502.3 322.7 L501.3 322.7 L500.3 323.6 L499.3 324.1 L498.3 324.4 L497.3 324.5 L496.3 324.2 L495.3 324.5 L494.3 324.2 L493.3 324.3 L492.3 324.5 L491.3 324.2 L490.3 324.5 L489.3 324.1 L488.3 323.4 L487.3 323.9 L486.3 325.0 L485.3 324.4 L484.3 324.4 L483.3 324.8 L482.3 324.9 L481.3 324.4 L480.3 324.5 L479.3 324.6 L478.3 324.8 L477.3 325.0 L476.3 324.6 L475.3 324.5 L474.3 324.9 L473.3 325.0 L472.3 324.9 L471.3 324.5 L470.3 325.0 L469.3 323.8 L468.3 322.7 L467.3 322.7 L466.3 322.7 L465.3 322.7 L464.3 322.7 L463.3 322.7 L462.3 322.7 L461.3 322.7 L460.3 322.7 L459.3 322.7 L458.3 323.6 L457.3 324.4 L456.3 324.0 L455.3 324.1 L454.3 324.0 L453.3 324.4 L452.3 324.2 L451.3 324.0 L450.3 324.4 L449.3 324.5 L448.3 324.1 L447.3 324.4 L446.3 324.1 L445.3 323.5 L444.3 322.7 L443.3 322.7 L442.3 322.7 L441.3 323.5 L440.3 324.0 L439.3 324.2 L438.3 324.1 L437.3 323.8 L436.3 323.8 L435.3 324.1 L434.3 324.1 L433.3 324.0 L432.3 323.9 L431.3 323.4 L430.3 323.4 L429.3 323.8 L428.3 324.1 L427.3 324.1 L426.3 324.0 L425.3 323.3 L424.3 323.6 L423.3 324.8 L422.3 324.9 L421.3 324.3 L420.3 324.7 L419.3 324.6 L418.3 324.4 L417.3 324.7 L416.3 324.7 L415.3 324.6 L414.3 324.7 L413.3 324.3 L412.3 324.7 L411.3 324.9 L410.3 324.4 L409.3 324.7 L408.3 324.3 L407.3 324.5 L406.3 324.5 L405.3 324.9 L404.3 324.6 L403.3 324.9 L402.3 324.5 L401.3 324.3 L400.3 324.3 L399.3 323.7 L398.3 322.7 L397.3 322.7 L396.3 322.7 L395.3 322.7 L394.3 322.7 L393.3 322.7 L392.3 322.7 L391.3 322.7 L390.3 322.7 L389.3 322.7 L388.3 322.7 L387.3 323.4 L386.3 323.8 L385.3 324.0 L384.3 324.2 L383.3 323.9 L382.3 323.8 L381.3 323.8 L380.3 324.2 L379.3 323.4 L378.3 322.7 L377.3 322.7 L376.3 322.7 L375.3 323.4 L374.3 324.2 L373.3 324.5 L372.3 324.0 L371.3 324.2 L370.3 324.3 L369.3 324.5 L368.3 324.3 L367.3 324.1 L366.3 324.1 L365.3 324.2 L364.3 324.2 L363.3 323.4 L362.3 322.7 L361.3 322.7 L360.3 322.7 L359.3 322.7 L358.3 322.7 L357.3 323.2 L356.3 323.8 L355.3 323.9 L354.3 323.7 L353.3 323.7 L352.3 323.8 L351.3 323.6 L350.3 323.8 L349.3 323.9 L348.3 323.6 L347.3 323.7 L346.3 323.6 L345.3 323.3 L344.3 322.7 L343.3 322.7 L342.3 322.7 L341.3 322.7 L340.3 322.7 L339.3 322.7 L338.3 322.7 L337.3 322.7 L336.3 322.7 L335.3 322.7 L334.3 322.7 L333.3 322.7 L332.3 322.7 L331.3 322.7 L330.3 322.7 L329.3 322.7 L328.3 322.7 L327.3 322.7 L326.3 322.7 L325.3 322.7 L324.3 322.7 L323.3 322.7 L322.3 322.7 L321.3 322.7 L320.3 322.7 L319.3 322.7 L318.3 323.2 L317.3 323.7 L316.3 323.5 L315.3 323.6 L314.3 323.5 L313.3 323.7 L312.3 323.7 L311.3 323.7 L310.3 323.4 L309.3 323.6 L308.3 323.6 L307.3 323.1 L306.3 322.7 L305.3 322.7 L304.3 322.7 L303.3 322.7 L302.3 322.7 L301.3 322.7 L300.3 323.4 L299.3 323.9 L298.3 324.1 L297.3 324.0 L296.3 323.9 L295.3 324.2 L294.3 324.0 L293.3 323.8 L292.3 324.2 L291.3 324.2 L290.3 324.0 L289.3 324.2 L288.3 324.2 L287.3 323.4 L286.3 322.7 L285.3 322.7 L284.3 322.7 L283.3 322.7 L282.3 322.7 L281.3 322.7 L280.3 322.7 L279.3 322.7 L278.3 322.7 L277.3 322.7 L276.3 322.7 L275.3 322.7 L274.3 322.7 L273.3 322.7 L272.3 322.7 L271.3 322.7 L270.3 323.2 L269.3 323.5 L268.3 323.2 L267.3 322.7 L266.3 322.7 L265.3 322.7 L264.3 322.7 L263.3 323.7 L262.3 324.5 L261.3 324.3 L260.3 324.3 L259.3 324.5 L258.3 324.5 L257.3 324.1 L256.3 324.4 L255.3 324.5 L254.3 324.4 L253.3 323.5 L252.3 322.7 L251.3 322.7 L250.3 322.7 L249.3 322.7 L248.3 322.7 L247.3 322.7 L246.3 323.2 L245.3 323.5 L244.3 323.4 L243.3 323.6 L242.3 323.6 L241.3 323.4 L240.3 323.4 L239.3 323.6 L238.3 323.4 L237.3 323.4 L236.3 323.4 L235.3 323.4 L234.3 323.4 L233.3 323.5 L232.3 323.6 L231.3 323.6 L230.3 323.1 L229.3 322.7 L228.3 322.7 L227.3 322.7 L226.3 322.7 L225.3 322.7 L224.3 322.7 L223.3 322.7 L222.3 322.7 L221.3 322.7 L220.3 322.7 L219.3 322.7 L218.3 322.7 L217.3 322.7 L216.3 322.7 L215.3 322.7 L214.3 322.7 L213.3 322.7 L212.3 322.7 L211.3 322.7 L210.3 322.7 L209.3 322.7 L208.3 322.7 L207.3 322.7 L206.3 322.7 L205.3 322.7 L204.3 322.7 L203.3 322.7 L202.3 322.7 L201.3 322.7Z" fill="#9a3a08"/><rect x="200.8" y="333.52" width="456.8" height="23.28" fill="#11161a"/><rect x="200.8" y="334.32" width="456.8" height="20.50" fill="#f17022"/><path d="M201.3 343.5 L202.3 342.8 L203.3 341.9 L204.3 342.2 L205.3 341.8 L206.3 341.8 L207.3 341.9 L208.3 342.3 L209.3 342.0 L210.3 342.1 L211.3 342.9 L212.3 343.4 L213.3 343.7 L214.3 343.6 L215.3 343.3 L216.3 343.4 L217.3 343.5 L218.3 343.5 L219.3 343.4 L220.3 343.4 L221.3 343.3 L222.3 343.4 L223.3 343.6 L224.3 343.3 L225.3 343.2 L226.3 343.2 L227.3 343.4 L228.3 343.6 L229.3 343.9 L230.3 343.3 L231.3 342.9 L232.3 343.1 L233.3 343.0 L234.3 342.7 L235.3 342.9 L236.3 342.7 L237.3 342.7 L238.3 342.8 L239.3 342.5 L240.3 342.3 L241.3 342.7 L242.3 342.6 L243.3 342.5 L244.3 342.7 L245.3 342.5 L246.3 342.3 L247.3 342.4 L248.3 342.6 L249.3 342.4 L250.3 342.9 L251.3 342.7 L252.3 342.9 L253.3 342.9 L254.3 343.2 L255.3 343.0 L256.3 343.9 L257.3 343.5 L258.3 343.1 L259.3 343.1 L260.3 343.4 L261.3 343.4 L262.3 343.5 L263.3 343.5 L264.3 343.2 L265.3 343.5 L266.3 343.5 L267.3 343.3 L268.3 343.5 L269.3 343.2 L270.3 343.1 L271.3 343.2 L272.3 343.3 L273.3 343.4 L274.3 343.4 L275.3 343.6 L276.3 343.2 L277.3 343.4 L278.3 343.4 L279.3 343.6 L280.3 343.4 L281.3 343.3 L282.3 343.4 L283.3 343.1 L284.3 343.7 L285.3 344.2 L286.3 344.2 L287.3 343.5 L288.3 342.7 L289.3 341.7 L290.3 341.9 L291.3 341.9 L292.3 342.2 L293.3 342.0 L294.3 342.0 L295.3 342.0 L296.3 342.0 L297.3 342.7 L298.3 343.5 L299.3 344.2 L300.3 344.2 L301.3 344.2 L302.3 344.2 L303.3 344.2 L304.3 344.2 L305.3 344.2 L306.3 343.6 L307.3 343.2 L308.3 342.5 L309.3 342.1 L310.3 342.5 L311.3 342.7 L312.3 342.7 L313.3 342.4 L314.3 343.2 L315.3 343.7 L316.3 344.2 L317.3 344.2 L318.3 344.2 L319.3 344.2 L320.3 344.2 L321.3 344.2 L322.3 343.8 L323.3 343.3 L324.3 342.4 L325.3 342.8 L326.3 342.8 L327.3 342.8 L328.3 342.8 L329.3 342.8 L330.3 342.6 L331.3 342.5 L332.3 342.6 L333.3 342.8 L334.3 342.7 L335.3 342.5 L336.3 343.0 L337.3 343.0 L338.3 342.7 L339.3 342.6 L340.3 342.7 L341.3 342.7 L342.3 342.5 L343.3 343.3 L344.3 343.7 L345.3 344.1 L346.3 344.0 L347.3 343.8 L348.3 343.7 L349.3 343.5 L350.3 343.7 L351.3 343.5 L352.3 343.7 L353.3 343.8 L354.3 343.9 L355.3 344.1 L356.3 344.2 L357.3 344.2 L358.3 344.2 L359.3 344.2 L360.3 344.2 L361.3 344.2 L362.3 344.2 L363.3 344.2 L364.3 344.2 L365.3 344.2 L366.3 344.2 L367.3 344.2 L368.3 344.2 L369.3 344.2 L370.3 344.2 L371.3 344.2 L372.3 344.2 L373.3 344.2 L374.3 344.2 L375.3 344.2 L376.3 344.2 L377.3 344.2 L378.3 344.2 L379.3 344.2 L380.3 344.2 L381.3 344.2 L382.3 344.2 L383.3 344.2 L384.3 344.2 L385.3 344.2 L386.3 344.2 L387.3 344.2 L388.3 344.2 L389.3 344.2 L390.3 344.2 L391.3 344.2 L392.3 344.2 L393.3 344.2 L394.3 344.2 L395.3 344.2 L396.3 344.2 L397.3 344.2 L398.3 344.2 L399.3 344.2 L400.3 344.2 L401.3 344.2 L402.3 344.2 L403.3 344.2 L404.3 344.2 L405.3 344.2 L406.3 344.2 L407.3 344.2 L408.3 344.2 L409.3 344.2 L410.3 344.2 L411.3 344.2 L412.3 344.2 L413.3 344.2 L414.3 344.2 L415.3 344.2 L416.3 344.2 L417.3 343.6 L418.3 343.2 L419.3 342.4 L420.3 341.6 L421.3 341.5 L422.3 341.4 L423.3 341.6 L424.3 341.5 L425.3 341.5 L426.3 341.6 L427.3 341.5 L428.3 342.2 L429.3 343.0 L430.3 343.1 L431.3 342.9 L432.3 342.7 L433.3 342.3 L434.3 342.1 L435.3 342.2 L436.3 341.9 L437.3 341.8 L438.3 342.1 L439.3 342.7 L440.3 342.6 L441.3 342.7 L442.3 343.0 L443.3 343.4 L444.3 343.6 L445.3 343.5 L446.3 343.6 L447.3 343.6 L448.3 343.6 L449.3 343.5 L450.3 343.4 L451.3 343.4 L452.3 343.5 L453.3 343.0 L454.3 342.8 L455.3 342.6 L456.3 342.5 L457.3 342.1 L458.3 342.0 L459.3 341.3 L460.3 341.8 L461.3 342.1 L462.3 342.3 L463.3 342.6 L464.3 342.7 L465.3 343.0 L466.3 343.3 L467.3 343.4 L468.3 343.0 L469.3 342.6 L470.3 342.3 L471.3 342.3 L472.3 342.6 L473.3 341.8 L474.3 342.0 L475.3 342.8 L476.3 342.8 L477.3 343.0 L478.3 343.0 L479.3 343.3 L480.3 343.5 L481.3 343.6 L482.3 343.3 L483.3 343.1 L484.3 342.5 L485.3 342.1 L486.3 342.4 L487.3 341.7 L488.3 341.3 L489.3 342.3 L490.3 342.1 L491.3 342.5 L492.3 342.4 L493.3 342.7 L494.3 343.3 L495.3 343.0 L496.3 342.4 L497.3 342.4 L498.3 342.2 L499.3 341.8 L500.3 342.0 L501.3 342.1 L502.3 342.8 L503.3 343.1 L504.3 343.0 L505.3 343.5 L506.3 343.5 L507.3 343.4 L508.3 343.2 L509.3 342.9 L510.3 342.9 L511.3 342.7 L512.3 342.1 L513.3 341.6 L514.3 341.2 L515.3 342.4 L516.3 341.8 L517.3 342.4 L518.3 342.8 L519.3 343.0 L520.3 343.1 L521.3 343.0 L522.3 342.9 L523.3 342.2 L524.3 342.1 L525.3 342.0 L526.3 342.1 L527.3 342.1 L528.3 342.9 L529.3 342.7 L530.3 342.9 L531.3 343.4 L532.3 343.5 L533.3 343.5 L534.3 343.6 L535.3 343.5 L536.3 343.6 L537.3 343.3 L538.3 343.4 L539.3 342.8 L540.3 342.4 L541.3 341.7 L542.3 341.5 L543.3 341.7 L544.3 341.4 L545.3 341.6 L546.3 341.8 L547.3 341.7 L548.3 341.4 L549.3 342.6 L550.3 342.7 L551.3 342.8 L552.3 343.1 L553.3 343.0 L554.3 342.2 L555.3 342.7 L556.3 342.0 L557.3 342.0 L558.3 342.3 L559.3 342.6 L560.3 342.8 L561.3 342.8 L562.3 342.9 L563.3 343.3 L564.3 343.4 L565.3 343.4 L566.3 343.6 L567.3 343.4 L568.3 343.5 L569.3 343.5 L570.3 343.5 L571.3 343.4 L572.3 343.5 L573.3 343.4 L574.3 342.6 L575.3 342.8 L576.3 342.5 L577.3 341.6 L578.3 341.7 L579.3 341.5 L580.3 340.7 L581.3 340.7 L582.3 341.7 L583.3 341.4 L584.3 342.1 L585.3 342.4 L586.3 342.8 L587.3 343.4 L588.3 343.6 L589.3 343.4 L590.3 343.4 L591.3 343.6 L592.3 343.4 L593.3 343.5 L594.3 343.5 L595.3 343.5 L596.3 343.5 L597.3 343.1 L598.3 342.5 L599.3 342.7 L600.3 341.9 L601.3 341.9 L602.3 342.1 L603.3 341.0 L604.3 342.2 L605.3 341.6 L606.3 342.3 L607.3 342.2 L608.3 342.6 L609.3 343.1 L610.3 342.8 L611.3 342.3 L612.3 342.7 L613.3 342.5 L614.3 342.3 L615.3 342.0 L616.3 342.7 L617.3 342.8 L618.3 342.8 L619.3 343.1 L620.3 343.4 L621.3 343.5 L622.3 343.6 L623.3 343.6 L624.3 343.6 L625.3 343.4 L626.3 342.8 L627.3 342.4 L628.3 342.7 L629.3 342.3 L630.3 342.4 L631.3 341.8 L632.3 341.8 L633.3 342.1 L634.3 342.1 L635.3 342.6 L636.3 343.2 L637.3 343.2 L638.3 343.5 L639.3 343.5 L640.3 343.6 L641.3 343.4 L642.3 343.5 L643.3 343.2 L644.3 343.1 L645.3 343.0 L646.3 342.7 L647.3 342.6 L648.3 342.2 L649.3 342.2 L650.3 342.5 L651.3 342.3 L652.3 342.8 L653.3 343.0 L654.3 343.2 L655.3 343.2 L656.3 343.4 L656.3 346.1 L655.3 346.3 L654.3 346.2 L653.3 346.4 L652.3 346.6 L651.3 347.1 L650.3 346.9 L649.3 347.2 L648.3 347.3 L647.3 346.8 L646.3 346.7 L645.3 346.4 L644.3 346.4 L643.3 346.3 L642.3 346.0 L641.3 346.0 L640.3 345.8 L639.3 345.9 L638.3 346.0 L637.3 346.2 L636.3 346.3 L635.3 346.8 L634.3 347.3 L633.3 347.4 L632.3 347.6 L631.3 347.6 L630.3 347.0 L629.3 347.1 L628.3 346.7 L627.3 347.1 L626.3 346.7 L625.3 346.1 L624.3 345.8 L623.3 345.8 L622.3 345.8 L621.3 346.0 L620.3 346.1 L619.3 346.4 L618.3 346.6 L617.3 346.6 L616.3 346.8 L615.3 347.4 L614.3 347.2 L613.3 346.9 L612.3 346.7 L611.3 347.1 L610.3 346.6 L609.3 346.3 L608.3 346.8 L607.3 347.3 L606.3 347.1 L605.3 347.8 L604.3 347.2 L603.3 348.4 L602.3 347.3 L601.3 347.5 L600.3 347.6 L599.3 346.7 L598.3 347.0 L597.3 346.3 L596.3 346.0 L595.3 345.9 L594.3 346.0 L593.3 346.0 L592.3 346.0 L591.3 345.8 L590.3 346.0 L589.3 346.0 L588.3 345.9 L587.3 346.0 L586.3 346.6 L585.3 347.0 L584.3 347.4 L583.3 348.0 L582.3 347.7 L581.3 348.7 L580.3 348.7 L579.3 348.0 L578.3 347.7 L577.3 347.8 L576.3 346.9 L575.3 346.7 L574.3 346.9 L573.3 346.0 L572.3 345.9 L571.3 346.1 L570.3 346.0 L569.3 345.9 L568.3 346.0 L567.3 346.1 L566.3 345.9 L565.3 346.1 L564.3 346.0 L563.3 346.2 L562.3 346.6 L561.3 346.6 L560.3 346.7 L559.3 346.9 L558.3 347.2 L557.3 347.5 L556.3 347.4 L555.3 346.7 L554.3 347.2 L553.3 346.5 L552.3 346.4 L551.3 346.7 L550.3 346.7 L549.3 346.9 L548.3 348.1 L547.3 347.7 L546.3 347.7 L545.3 347.9 L544.3 348.1 L543.3 347.8 L542.3 347.9 L541.3 347.7 L540.3 347.0 L539.3 346.7 L538.3 346.1 L537.3 346.1 L536.3 345.9 L535.3 345.9 L534.3 345.9 L533.3 345.9 L532.3 346.0 L531.3 346.1 L530.3 346.5 L529.3 346.7 L528.3 346.6 L527.3 347.3 L526.3 347.4 L525.3 347.5 L524.3 347.3 L523.3 347.2 L522.3 346.5 L521.3 346.5 L520.3 346.4 L519.3 346.5 L518.3 346.7 L517.3 347.0 L516.3 347.6 L515.3 347.0 L514.3 348.2 L513.3 347.8 L512.3 347.3 L511.3 346.7 L510.3 346.6 L509.3 346.6 L508.3 346.2 L507.3 346.1 L506.3 346.0 L505.3 345.9 L504.3 346.4 L503.3 346.3 L502.3 346.7 L501.3 347.3 L500.3 347.4 L499.3 347.6 L498.3 347.2 L497.3 347.0 L496.3 347.0 L495.3 346.4 L494.3 346.1 L493.3 346.7 L492.3 347.1 L491.3 347.0 L490.3 347.3 L489.3 347.2 L488.3 348.2 L487.3 347.7 L486.3 347.0 L485.3 347.3 L484.3 347.0 L483.3 346.3 L482.3 346.1 L481.3 345.9 L480.3 345.9 L479.3 346.2 L478.3 346.5 L477.3 346.5 L476.3 346.7 L475.3 346.6 L474.3 347.5 L473.3 347.7 L472.3 346.8 L471.3 347.1 L470.3 347.1 L469.3 346.8 L468.3 346.5 L467.3 346.1 L466.3 346.1 L465.3 346.4 L464.3 346.7 L463.3 346.9 L462.3 347.1 L461.3 347.3 L460.3 347.6 L459.3 348.1 L458.3 347.5 L457.3 347.3 L456.3 346.9 L455.3 346.9 L454.3 346.6 L453.3 346.4 L452.3 345.9 L451.3 346.0 L450.3 346.0 L449.3 345.9 L448.3 345.9 L447.3 345.8 L446.3 345.8 L445.3 345.9 L444.3 345.8 L443.3 346.0 L442.3 346.4 L441.3 346.7 L440.3 346.8 L439.3 346.8 L438.3 347.4 L437.3 347.6 L436.3 347.6 L435.3 347.2 L434.3 347.3 L433.3 347.1 L432.3 346.7 L431.3 346.5 L430.3 346.3 L429.3 346.4 L428.3 347.2 L427.3 347.9 L426.3 347.9 L425.3 347.9 L424.3 347.9 L423.3 347.8 L422.3 348.1 L421.3 347.9 L420.3 347.9 L419.3 347.1 L418.3 346.3 L417.3 345.8 L416.3 345.2 L415.3 345.2 L414.3 345.2 L413.3 345.2 L412.3 345.2 L411.3 345.2 L410.3 345.2 L409.3 345.2 L408.3 345.2 L407.3 345.2 L406.3 345.2 L405.3 345.2 L404.3 345.2 L403.3 345.2 L402.3 345.2 L401.3 345.2 L400.3 345.2 L399.3 345.2 L398.3 345.2 L397.3 345.2 L396.3 345.2 L395.3 345.2 L394.3 345.2 L393.3 345.2 L392.3 345.2 L391.3 345.2 L390.3 345.2 L389.3 345.2 L388.3 345.2 L387.3 345.2 L386.3 345.2 L385.3 345.2 L384.3 345.2 L383.3 345.2 L382.3 345.2 L381.3 345.2 L380.3 345.2 L379.3 345.2 L378.3 345.2 L377.3 345.2 L376.3 345.2 L375.3 345.2 L374.3 345.2 L373.3 345.2 L372.3 345.2 L371.3 345.2 L370.3 345.2 L369.3 345.2 L368.3 345.2 L367.3 345.2 L366.3 345.2 L365.3 345.2 L364.3 345.2 L363.3 345.2 L362.3 345.2 L361.3 345.2 L360.3 345.2 L359.3 345.2 L358.3 345.2 L357.3 345.2 L356.3 345.2 L355.3 345.3 L354.3 345.5 L353.3 345.7 L352.3 345.8 L351.3 345.9 L350.3 345.8 L349.3 345.9 L348.3 345.8 L347.3 345.6 L346.3 345.5 L345.3 345.4 L344.3 345.8 L343.3 346.2 L342.3 346.9 L341.3 346.7 L340.3 346.8 L339.3 346.8 L338.3 346.7 L337.3 346.5 L336.3 346.4 L335.3 347.0 L334.3 346.8 L333.3 346.6 L332.3 346.8 L331.3 346.9 L330.3 346.8 L329.3 346.6 L328.3 346.7 L327.3 346.6 L326.3 346.6 L325.3 346.6 L324.3 347.0 L323.3 346.2 L322.3 345.6 L321.3 345.2 L320.3 345.2 L319.3 345.2 L318.3 345.2 L317.3 345.2 L316.3 345.2 L315.3 345.7 L314.3 346.2 L313.3 347.0 L312.3 346.7 L311.3 346.7 L310.3 347.0 L309.3 347.3 L308.3 347.0 L307.3 346.3 L306.3 345.8 L305.3 345.2 L304.3 345.2 L303.3 345.2 L302.3 345.2 L301.3 345.2 L300.3 345.2 L299.3 345.2 L298.3 346.0 L297.3 346.8 L296.3 347.4 L295.3 347.4 L294.3 347.5 L293.3 347.5 L292.3 347.2 L291.3 347.6 L290.3 347.5 L289.3 347.8 L288.3 346.7 L287.3 345.9 L286.3 345.2 L285.3 345.2 L284.3 345.7 L283.3 346.3 L282.3 346.1 L281.3 346.2 L280.3 346.1 L279.3 345.9 L278.3 346.0 L277.3 346.0 L276.3 346.2 L275.3 345.8 L274.3 346.1 L273.3 346.0 L272.3 346.1 L271.3 346.3 L270.3 346.3 L269.3 346.2 L268.3 345.9 L267.3 346.1 L266.3 345.9 L265.3 345.9 L264.3 346.2 L263.3 346.0 L262.3 346.0 L261.3 346.1 L260.3 346.1 L259.3 346.4 L258.3 346.3 L257.3 345.9 L256.3 345.5 L255.3 346.4 L254.3 346.3 L253.3 346.6 L252.3 346.5 L251.3 346.7 L250.3 346.6 L249.3 347.0 L248.3 346.9 L247.3 347.0 L246.3 347.2 L245.3 347.0 L244.3 346.7 L243.3 347.0 L242.3 346.8 L241.3 346.8 L240.3 347.2 L239.3 347.0 L238.3 346.6 L237.3 346.8 L236.3 346.8 L235.3 346.6 L234.3 346.8 L233.3 346.5 L232.3 346.3 L231.3 346.5 L230.3 346.1 L229.3 345.5 L228.3 345.8 L227.3 346.1 L226.3 346.2 L225.3 346.2 L224.3 346.1 L223.3 345.9 L222.3 346.1 L221.3 346.1 L220.3 346.0 L219.3 346.1 L218.3 345.9 L217.3 346.0 L216.3 346.1 L215.3 346.2 L214.3 345.8 L213.3 345.7 L212.3 346.1 L211.3 346.6 L210.3 347.3 L209.3 347.4 L208.3 347.2 L207.3 347.5 L206.3 347.7 L205.3 347.7 L204.3 347.2 L203.3 347.5 L202.3 346.7 L201.3 346.0Z" fill="#9a3a08"/><rect x="200.8" y="356.00" width="456.8" height="23.28" fill="#11161a"/><rect x="200.8" y="356.80" width="456.8" height="20.50" fill="#d4e81a"/><path d="M201.3 365.9 L202.3 365.3 L203.3 364.4 L204.3 364.7 L205.3 364.2 L206.3 364.2 L207.3 364.4 L208.3 364.8 L209.3 364.5 L210.3 364.6 L211.3 365.4 L212.3 365.8 L213.3 366.2 L214.3 366.1 L215.3 365.8 L216.3 365.9 L217.3 365.9 L218.3 366.0 L219.3 365.8 L220.3 365.9 L221.3 365.8 L222.3 365.8 L223.3 366.0 L224.3 365.8 L225.3 365.7 L226.3 365.7 L227.3 365.9 L228.3 366.1 L229.3 366.4 L230.3 365.8 L231.3 365.4 L232.3 365.6 L233.3 365.5 L234.3 365.1 L235.3 365.3 L236.3 365.1 L237.3 365.1 L238.3 365.3 L239.3 365.0 L240.3 364.8 L241.3 365.2 L242.3 365.1 L243.3 365.0 L244.3 365.2 L245.3 364.9 L246.3 364.8 L247.3 364.9 L248.3 365.0 L249.3 364.9 L250.3 365.4 L251.3 365.2 L252.3 365.4 L253.3 365.4 L254.3 365.7 L255.3 365.5 L256.3 366.4 L257.3 366.0 L258.3 365.6 L259.3 365.5 L260.3 365.8 L261.3 365.9 L262.3 366.0 L263.3 365.9 L264.3 365.7 L265.3 366.0 L266.3 366.0 L267.3 365.8 L268.3 366.0 L269.3 365.7 L270.3 365.6 L271.3 365.6 L272.3 365.8 L273.3 365.9 L274.3 365.8 L275.3 366.1 L276.3 365.7 L277.3 365.9 L278.3 365.9 L279.3 366.1 L280.3 365.8 L281.3 365.8 L282.3 365.9 L283.3 365.6 L284.3 366.2 L285.3 366.7 L286.3 366.7 L287.3 366.0 L288.3 365.2 L289.3 364.2 L290.3 364.4 L291.3 364.4 L292.3 364.7 L293.3 364.4 L294.3 364.5 L295.3 364.5 L296.3 364.5 L297.3 365.1 L298.3 365.9 L299.3 366.7 L300.3 366.7 L301.3 366.7 L302.3 366.7 L303.3 366.7 L304.3 366.7 L305.3 366.7 L306.3 366.1 L307.3 365.7 L308.3 365.0 L309.3 364.6 L310.3 365.0 L311.3 365.2 L312.3 365.2 L313.3 364.9 L314.3 365.7 L315.3 366.2 L316.3 366.7 L317.3 366.7 L318.3 366.7 L319.3 366.7 L320.3 366.7 L321.3 366.7 L322.3 366.3 L323.3 365.8 L324.3 364.9 L325.3 365.3 L326.3 365.3 L327.3 365.3 L328.3 365.3 L329.3 365.3 L330.3 365.1 L331.3 365.0 L332.3 365.1 L333.3 365.3 L334.3 365.2 L335.3 365.0 L336.3 365.5 L337.3 365.4 L338.3 365.2 L339.3 365.1 L340.3 365.2 L341.3 365.2 L342.3 365.0 L343.3 365.8 L344.3 366.1 L345.3 366.6 L346.3 366.5 L347.3 366.3 L348.3 366.2 L349.3 366.0 L350.3 366.1 L351.3 366.0 L352.3 366.2 L353.3 366.3 L354.3 366.4 L355.3 366.6 L356.3 366.7 L357.3 366.7 L358.3 366.7 L359.3 366.7 L360.3 366.7 L361.3 366.7 L362.3 366.7 L363.3 366.7 L364.3 366.7 L365.3 366.7 L366.3 366.7 L367.3 366.7 L368.3 366.7 L369.3 366.7 L370.3 366.7 L371.3 366.7 L372.3 366.7 L373.3 366.7 L374.3 366.7 L375.3 366.7 L376.3 366.7 L377.3 366.7 L378.3 366.7 L379.3 366.7 L380.3 366.7 L381.3 366.7 L382.3 366.7 L383.3 366.7 L384.3 366.7 L385.3 366.7 L386.3 366.7 L387.3 366.7 L388.3 366.7 L389.3 366.7 L390.3 366.7 L391.3 366.7 L392.3 366.7 L393.3 366.7 L394.3 366.7 L395.3 366.7 L396.3 366.7 L397.3 366.7 L398.3 366.7 L399.3 366.7 L400.3 366.7 L401.3 366.7 L402.3 366.7 L403.3 366.7 L404.3 366.7 L405.3 366.7 L406.3 366.7 L407.3 366.7 L408.3 366.7 L409.3 366.7 L410.3 366.7 L411.3 366.7 L412.3 366.7 L413.3 366.7 L414.3 366.7 L415.3 366.7 L416.3 366.7 L417.3 366.1 L418.3 365.6 L419.3 364.9 L420.3 364.0 L421.3 364.0 L422.3 363.9 L423.3 364.1 L424.3 364.0 L425.3 364.0 L426.3 364.1 L427.3 364.0 L428.3 364.7 L429.3 365.5 L430.3 365.6 L431.3 365.4 L432.3 365.2 L433.3 364.8 L434.3 364.6 L435.3 364.7 L436.3 364.4 L437.3 364.3 L438.3 364.6 L439.3 365.1 L440.3 365.1 L441.3 365.2 L442.3 365.5 L443.3 365.9 L444.3 366.1 L445.3 366.0 L446.3 366.1 L447.3 366.1 L448.3 366.0 L449.3 366.0 L450.3 365.9 L451.3 365.9 L452.3 366.0 L453.3 365.5 L454.3 365.3 L455.3 365.0 L456.3 365.0 L457.3 364.6 L458.3 364.5 L459.3 363.8 L460.3 364.3 L461.3 364.6 L462.3 364.8 L463.3 365.1 L464.3 365.2 L465.3 365.5 L466.3 365.8 L467.3 365.8 L468.3 365.4 L469.3 365.1 L470.3 364.8 L471.3 364.8 L472.3 365.1 L473.3 364.2 L474.3 364.5 L475.3 365.3 L476.3 365.3 L477.3 365.5 L478.3 365.5 L479.3 365.8 L480.3 366.0 L481.3 366.1 L482.3 365.8 L483.3 365.6 L484.3 365.0 L485.3 364.6 L486.3 364.9 L487.3 364.2 L488.3 363.8 L489.3 364.7 L490.3 364.6 L491.3 365.0 L492.3 364.8 L493.3 365.2 L494.3 365.8 L495.3 365.5 L496.3 364.9 L497.3 364.9 L498.3 364.7 L499.3 364.3 L500.3 364.5 L501.3 364.6 L502.3 365.3 L503.3 365.6 L504.3 365.5 L505.3 366.0 L506.3 365.9 L507.3 365.8 L508.3 365.7 L509.3 365.4 L510.3 365.4 L511.3 365.2 L512.3 364.6 L513.3 364.1 L514.3 363.7 L515.3 364.9 L516.3 364.3 L517.3 364.9 L518.3 365.3 L519.3 365.5 L520.3 365.5 L521.3 365.4 L522.3 365.4 L523.3 364.7 L524.3 364.6 L525.3 364.5 L526.3 364.6 L527.3 364.6 L528.3 365.4 L529.3 365.2 L530.3 365.4 L531.3 365.9 L532.3 365.9 L533.3 366.0 L534.3 366.1 L535.3 366.0 L536.3 366.1 L537.3 365.8 L538.3 365.8 L539.3 365.3 L540.3 364.9 L541.3 364.2 L542.3 364.0 L543.3 364.2 L544.3 363.9 L545.3 364.0 L546.3 364.3 L547.3 364.2 L548.3 363.9 L549.3 365.0 L550.3 365.2 L551.3 365.3 L552.3 365.6 L553.3 365.4 L554.3 364.7 L555.3 365.2 L556.3 364.5 L557.3 364.5 L558.3 364.7 L559.3 365.1 L560.3 365.3 L561.3 365.3 L562.3 365.4 L563.3 365.8 L564.3 365.9 L565.3 365.8 L566.3 366.1 L567.3 365.8 L568.3 365.9 L569.3 366.0 L570.3 366.0 L571.3 365.8 L572.3 366.0 L573.3 365.9 L574.3 365.1 L575.3 365.3 L576.3 365.0 L577.3 364.1 L578.3 364.2 L579.3 364.0 L580.3 363.2 L581.3 363.2 L582.3 364.2 L583.3 363.9 L584.3 364.5 L585.3 364.9 L586.3 365.3 L587.3 365.9 L588.3 366.1 L589.3 365.9 L590.3 365.9 L591.3 366.1 L592.3 365.9 L593.3 366.0 L594.3 365.9 L595.3 366.0 L596.3 366.0 L597.3 365.6 L598.3 364.9 L599.3 365.2 L600.3 364.4 L601.3 364.4 L602.3 364.6 L603.3 363.5 L604.3 364.7 L605.3 364.1 L606.3 364.8 L607.3 364.6 L608.3 365.1 L609.3 365.6 L610.3 365.3 L611.3 364.8 L612.3 365.2 L613.3 365.0 L614.3 364.7 L615.3 364.5 L616.3 365.1 L617.3 365.3 L618.3 365.3 L619.3 365.5 L620.3 365.8 L621.3 365.9 L622.3 366.1 L623.3 366.1 L624.3 366.1 L625.3 365.9 L626.3 365.3 L627.3 364.8 L628.3 365.2 L629.3 364.8 L630.3 364.9 L631.3 364.3 L632.3 364.3 L633.3 364.6 L634.3 364.6 L635.3 365.1 L636.3 365.7 L637.3 365.7 L638.3 366.0 L639.3 366.0 L640.3 366.1 L641.3 365.9 L642.3 366.0 L643.3 365.7 L644.3 365.6 L645.3 365.5 L646.3 365.2 L647.3 365.1 L648.3 364.6 L649.3 364.7 L650.3 365.0 L651.3 364.8 L652.3 365.3 L653.3 365.5 L654.3 365.7 L655.3 365.7 L656.3 365.9 L656.3 368.5 L655.3 368.7 L654.3 368.7 L653.3 368.9 L652.3 369.1 L651.3 369.6 L650.3 369.4 L649.3 369.7 L648.3 369.8 L647.3 369.3 L646.3 369.2 L645.3 368.9 L644.3 368.8 L643.3 368.7 L642.3 368.4 L641.3 368.5 L640.3 368.3 L639.3 368.4 L638.3 368.4 L637.3 368.7 L636.3 368.7 L635.3 369.3 L634.3 369.8 L633.3 369.8 L632.3 370.1 L631.3 370.1 L630.3 369.5 L629.3 369.6 L628.3 369.2 L627.3 369.6 L626.3 369.1 L625.3 368.5 L624.3 368.3 L623.3 368.3 L622.3 368.3 L621.3 368.5 L620.3 368.6 L619.3 368.9 L618.3 369.1 L617.3 369.1 L616.3 369.3 L615.3 369.9 L614.3 369.7 L613.3 369.4 L612.3 369.2 L611.3 369.6 L610.3 369.1 L609.3 368.8 L608.3 369.3 L607.3 369.8 L606.3 369.6 L605.3 370.3 L604.3 369.7 L603.3 370.9 L602.3 369.8 L601.3 370.0 L600.3 370.0 L599.3 369.2 L598.3 369.5 L597.3 368.8 L596.3 368.4 L595.3 368.4 L594.3 368.5 L593.3 368.4 L592.3 368.5 L591.3 368.3 L590.3 368.5 L589.3 368.5 L588.3 368.3 L587.3 368.5 L586.3 369.1 L585.3 369.5 L584.3 369.9 L583.3 370.5 L582.3 370.2 L581.3 371.2 L580.3 371.2 L579.3 370.4 L578.3 370.2 L577.3 370.3 L576.3 369.4 L575.3 369.1 L574.3 369.3 L573.3 368.5 L572.3 368.4 L571.3 368.6 L570.3 368.4 L569.3 368.4 L568.3 368.5 L567.3 368.6 L566.3 368.3 L565.3 368.6 L564.3 368.5 L563.3 368.6 L562.3 369.0 L561.3 369.1 L560.3 369.1 L559.3 369.3 L558.3 369.7 L557.3 369.9 L556.3 369.9 L555.3 369.2 L554.3 369.7 L553.3 369.0 L552.3 368.8 L551.3 369.1 L550.3 369.2 L549.3 369.4 L548.3 370.5 L547.3 370.2 L546.3 370.1 L545.3 370.4 L544.3 370.5 L543.3 370.2 L542.3 370.4 L541.3 370.2 L540.3 369.5 L539.3 369.1 L538.3 368.6 L537.3 368.6 L536.3 368.3 L535.3 368.4 L534.3 368.3 L533.3 368.4 L532.3 368.5 L531.3 368.5 L530.3 369.0 L529.3 369.2 L528.3 369.0 L527.3 369.8 L526.3 369.8 L525.3 369.9 L524.3 369.8 L523.3 369.7 L522.3 369.0 L521.3 369.0 L520.3 368.9 L519.3 368.9 L518.3 369.1 L517.3 369.5 L516.3 370.1 L515.3 369.5 L514.3 370.7 L513.3 370.3 L512.3 369.8 L511.3 369.2 L510.3 369.0 L509.3 369.0 L508.3 368.7 L507.3 368.6 L506.3 368.5 L505.3 368.4 L504.3 368.9 L503.3 368.8 L502.3 369.1 L501.3 369.8 L500.3 369.9 L499.3 370.1 L498.3 369.7 L497.3 369.5 L496.3 369.5 L495.3 368.9 L494.3 368.6 L493.3 369.2 L492.3 369.6 L491.3 369.4 L490.3 369.8 L489.3 369.7 L488.3 370.6 L487.3 370.2 L486.3 369.5 L485.3 369.8 L484.3 369.4 L483.3 368.8 L482.3 368.6 L481.3 368.3 L480.3 368.4 L479.3 368.6 L478.3 368.9 L477.3 368.9 L476.3 369.1 L475.3 369.1 L474.3 369.9 L473.3 370.2 L472.3 369.3 L471.3 369.6 L470.3 369.6 L469.3 369.3 L468.3 369.0 L467.3 368.6 L466.3 368.6 L465.3 368.9 L464.3 369.2 L463.3 369.3 L462.3 369.6 L461.3 369.8 L460.3 370.1 L459.3 370.6 L458.3 369.9 L457.3 369.8 L456.3 369.4 L455.3 369.4 L454.3 369.1 L453.3 368.9 L452.3 368.4 L451.3 368.5 L450.3 368.5 L449.3 368.4 L448.3 368.4 L447.3 368.3 L446.3 368.3 L445.3 368.4 L444.3 368.3 L443.3 368.5 L442.3 368.9 L441.3 369.2 L440.3 369.3 L439.3 369.3 L438.3 369.8 L437.3 370.1 L436.3 370.0 L435.3 369.7 L434.3 369.8 L433.3 369.6 L432.3 369.2 L431.3 369.0 L430.3 368.8 L429.3 368.9 L428.3 369.7 L427.3 370.4 L426.3 370.3 L425.3 370.4 L424.3 370.4 L423.3 370.3 L422.3 370.5 L421.3 370.4 L420.3 370.4 L419.3 369.5 L418.3 368.8 L417.3 368.3 L416.3 367.7 L415.3 367.7 L414.3 367.7 L413.3 367.7 L412.3 367.7 L411.3 367.7 L410.3 367.7 L409.3 367.7 L408.3 367.7 L407.3 367.7 L406.3 367.7 L405.3 367.7 L404.3 367.7 L403.3 367.7 L402.3 367.7 L401.3 367.7 L400.3 367.7 L399.3 367.7 L398.3 367.7 L397.3 367.7 L396.3 367.7 L395.3 367.7 L394.3 367.7 L393.3 367.7 L392.3 367.7 L391.3 367.7 L390.3 367.7 L389.3 367.7 L388.3 367.7 L387.3 367.7 L386.3 367.7 L385.3 367.7 L384.3 367.7 L383.3 367.7 L382.3 367.7 L381.3 367.7 L380.3 367.7 L379.3 367.7 L378.3 367.7 L377.3 367.7 L376.3 367.7 L375.3 367.7 L374.3 367.7 L373.3 367.7 L372.3 367.7 L371.3 367.7 L370.3 367.7 L369.3 367.7 L368.3 367.7 L367.3 367.7 L366.3 367.7 L365.3 367.7 L364.3 367.7 L363.3 367.7 L362.3 367.7 L361.3 367.7 L360.3 367.7 L359.3 367.7 L358.3 367.7 L357.3 367.7 L356.3 367.7 L355.3 367.8 L354.3 368.0 L353.3 368.1 L352.3 368.2 L351.3 368.4 L350.3 368.3 L349.3 368.4 L348.3 368.2 L347.3 368.1 L346.3 367.9 L345.3 367.8 L344.3 368.3 L343.3 368.6 L342.3 369.4 L341.3 369.2 L340.3 369.2 L339.3 369.3 L338.3 369.2 L337.3 369.0 L336.3 368.9 L335.3 369.4 L334.3 369.2 L333.3 369.1 L332.3 369.3 L331.3 369.4 L330.3 369.3 L329.3 369.1 L328.3 369.1 L327.3 369.1 L326.3 369.1 L325.3 369.1 L324.3 369.5 L323.3 368.6 L322.3 368.1 L321.3 367.7 L320.3 367.7 L319.3 367.7 L318.3 367.7 L317.3 367.7 L316.3 367.7 L315.3 368.2 L314.3 368.7 L313.3 369.5 L312.3 369.2 L311.3 369.2 L310.3 369.4 L309.3 369.8 L308.3 369.4 L307.3 368.7 L306.3 368.3 L305.3 367.7 L304.3 367.7 L303.3 367.7 L302.3 367.7 L301.3 367.7 L300.3 367.7 L299.3 367.7 L298.3 368.5 L297.3 369.3 L296.3 369.9 L295.3 369.9 L294.3 369.9 L293.3 370.0 L292.3 369.7 L291.3 370.0 L290.3 370.0 L289.3 370.2 L288.3 369.2 L287.3 368.4 L286.3 367.7 L285.3 367.7 L284.3 368.2 L283.3 368.8 L282.3 368.5 L281.3 368.6 L280.3 368.6 L279.3 368.3 L278.3 368.5 L277.3 368.5 L276.3 368.7 L275.3 368.3 L274.3 368.6 L273.3 368.5 L272.3 368.6 L271.3 368.8 L270.3 368.8 L269.3 368.7 L268.3 368.4 L267.3 368.6 L266.3 368.4 L265.3 368.4 L264.3 368.7 L263.3 368.5 L262.3 368.4 L261.3 368.5 L260.3 368.6 L259.3 368.9 L258.3 368.8 L257.3 368.4 L256.3 368.0 L255.3 368.9 L254.3 368.7 L253.3 369.0 L252.3 369.0 L251.3 369.2 L250.3 369.0 L249.3 369.5 L248.3 369.4 L247.3 369.5 L246.3 369.6 L245.3 369.5 L244.3 369.2 L243.3 369.4 L242.3 369.3 L241.3 369.2 L240.3 369.6 L239.3 369.4 L238.3 369.1 L237.3 369.3 L236.3 369.3 L235.3 369.1 L234.3 369.3 L233.3 368.9 L232.3 368.8 L231.3 369.0 L230.3 368.6 L229.3 368.0 L228.3 368.3 L227.3 368.5 L226.3 368.7 L225.3 368.7 L224.3 368.6 L223.3 368.4 L222.3 368.6 L221.3 368.6 L220.3 368.5 L219.3 368.6 L218.3 368.4 L217.3 368.5 L216.3 368.5 L215.3 368.6 L214.3 368.3 L213.3 368.2 L212.3 368.6 L211.3 369.0 L210.3 369.8 L209.3 369.9 L208.3 369.6 L207.3 370.0 L206.3 370.2 L205.3 370.2 L204.3 369.7 L203.3 370.0 L202.3 369.1 L201.3 368.5Z" fill="#8c9a10"/><rect x="200.8" y="378.48" width="456.8" height="23.28" fill="#11161a"/><rect x="200.8" y="379.28" width="456.8" height="20.50" fill="#d4e81a"/><path d="M201.3 388.8 L202.3 388.6 L203.3 388.5 L204.3 388.6 L205.3 388.6 L206.3 388.3 L207.3 388.3 L208.3 387.9 L209.3 388.0 L210.3 388.1 L211.3 388.1 L212.3 388.1 L213.3 388.5 L214.3 388.4 L215.3 388.6 L216.3 388.4 L217.3 388.9 L218.3 388.7 L219.3 388.8 L220.3 388.4 L221.3 388.5 L222.3 388.4 L223.3 388.0 L224.3 388.5 L225.3 388.4 L226.3 387.8 L227.3 388.1 L228.3 388.5 L229.3 387.9 L230.3 388.1 L231.3 388.6 L232.3 388.6 L233.3 388.8 L234.3 388.8 L235.3 388.7 L236.3 388.7 L237.3 388.4 L238.3 388.6 L239.3 388.5 L240.3 388.0 L241.3 388.2 L242.3 388.2 L243.3 388.1 L244.3 388.2 L245.3 388.3 L246.3 388.5 L247.3 388.2 L248.3 388.2 L249.3 388.4 L250.3 388.6 L251.3 388.8 L252.3 388.7 L253.3 388.5 L254.3 388.4 L255.3 388.6 L256.3 388.4 L257.3 388.3 L258.3 388.1 L259.3 387.9 L260.3 388.1 L261.3 388.5 L262.3 388.0 L263.3 388.3 L264.3 388.4 L265.3 388.6 L266.3 388.6 L267.3 388.8 L268.3 388.7 L269.3 388.8 L270.3 388.5 L271.3 388.6 L272.3 388.2 L273.3 388.5 L274.3 388.3 L275.3 388.2 L276.3 388.0 L277.3 388.5 L278.3 388.2 L279.3 388.4 L280.3 388.4 L281.3 388.4 L282.3 388.3 L283.3 388.7 L284.3 388.6 L285.3 388.8 L286.3 388.4 L287.3 388.5 L288.3 387.9 L289.3 387.0 L290.3 387.7 L291.3 387.2 L292.3 387.6 L293.3 387.0 L294.3 387.0 L295.3 387.2 L296.3 387.4 L297.3 388.2 L298.3 388.4 L299.3 388.4 L300.3 388.5 L301.3 388.7 L302.3 388.2 L303.3 387.9 L304.3 387.2 L305.3 387.6 L306.3 387.5 L307.3 387.3 L308.3 387.3 L309.3 388.1 L310.3 388.0 L311.3 388.3 L312.3 387.9 L313.3 388.1 L314.3 388.1 L315.3 387.1 L316.3 387.8 L317.3 387.2 L318.3 387.4 L319.3 387.3 L320.3 387.0 L321.3 388.2 L322.3 388.5 L323.3 388.4 L324.3 388.3 L325.3 388.0 L326.3 388.0 L327.3 387.6 L328.3 387.4 L329.3 387.4 L330.3 387.3 L331.3 387.5 L332.3 387.7 L333.3 387.8 L334.3 387.9 L335.3 387.9 L336.3 387.9 L337.3 387.2 L338.3 387.9 L339.3 387.5 L340.3 387.9 L341.3 387.2 L342.3 387.6 L343.3 388.2 L344.3 388.2 L345.3 388.0 L346.3 388.2 L347.3 388.6 L348.3 388.4 L349.3 388.4 L350.3 388.6 L351.3 388.4 L352.3 387.5 L353.3 387.4 L354.3 387.2 L355.3 386.9 L356.3 387.3 L357.3 387.0 L358.3 386.9 L359.3 386.8 L360.3 387.6 L361.3 388.1 L362.3 388.1 L363.3 388.5 L364.3 388.4 L365.3 388.4 L366.3 388.7 L367.3 388.8 L368.3 388.8 L369.3 388.3 L370.3 388.0 L371.3 388.2 L372.3 388.3 L373.3 387.9 L374.3 388.0 L375.3 388.0 L376.3 388.0 L377.3 387.8 L378.3 388.3 L379.3 388.5 L380.3 388.3 L381.3 388.0 L382.3 385.8 L383.3 388.6 L384.3 388.0 L385.3 385.8 L386.3 388.0 L387.3 385.8 L388.3 388.6 L389.3 388.4 L390.3 388.3 L391.3 388.4 L392.3 388.2 L393.3 388.3 L394.3 387.9 L395.3 388.2 L396.3 388.2 L397.3 388.4 L398.3 387.5 L399.3 386.7 L400.3 386.2 L401.3 386.3 L402.3 387.0 L403.3 386.3 L404.3 387.7 L405.3 388.2 L406.3 388.2 L407.3 388.0 L408.3 388.2 L409.3 388.0 L410.3 388.0 L411.3 387.9 L412.3 388.2 L413.3 388.2 L414.3 388.5 L415.3 388.3 L416.3 387.4 L417.3 387.6 L418.3 387.6 L419.3 388.0 L420.3 388.0 L421.3 387.4 L422.3 388.1 L423.3 388.0 L424.3 387.8 L425.3 387.5 L426.3 387.6 L427.3 387.4 L428.3 387.5 L429.3 388.3 L430.3 388.1 L431.3 388.2 L432.3 388.6 L433.3 388.8 L434.3 388.8 L435.3 388.6 L436.3 388.5 L437.3 388.3 L438.3 388.4 L439.3 388.2 L440.3 388.4 L441.3 388.2 L442.3 388.2 L443.3 388.1 L444.3 386.6 L445.3 386.7 L446.3 386.9 L447.3 387.1 L448.3 387.4 L449.3 388.0 L450.3 388.6 L451.3 388.9 L452.3 388.5 L453.3 388.4 L454.3 388.3 L455.3 388.4 L456.3 388.1 L457.3 388.3 L458.3 388.4 L459.3 387.9 L460.3 387.9 L461.3 388.4 L462.3 388.0 L463.3 388.6 L464.3 388.5 L465.3 388.7 L466.3 388.7 L467.3 388.8 L468.3 388.7 L469.3 388.7 L470.3 388.6 L471.3 388.5 L472.3 388.4 L473.3 388.0 L474.3 388.1 L475.3 387.8 L476.3 386.7 L477.3 386.7 L478.3 387.1 L479.3 386.9 L480.3 387.1 L481.3 386.8 L482.3 387.7 L483.3 388.3 L484.3 388.8 L485.3 388.6 L486.3 388.6 L487.3 388.5 L488.3 388.3 L489.3 388.0 L490.3 387.5 L491.3 387.8 L492.3 387.6 L493.3 387.6 L494.3 387.9 L495.3 387.8 L496.3 387.7 L497.3 387.8 L498.3 388.0 L499.3 388.5 L500.3 388.6 L501.3 388.7 L502.3 388.0 L503.3 385.9 L504.3 387.4 L505.3 388.0 L506.3 385.9 L507.3 387.4 L508.3 388.0 L509.3 385.9 L510.3 387.4 L511.3 388.0 L512.3 385.9 L513.3 387.4 L514.3 388.0 L515.3 385.9 L516.3 387.4 L517.3 388.0 L518.3 385.9 L519.3 387.4 L520.3 388.6 L521.3 388.0 L522.3 385.9 L523.3 387.4 L524.3 388.3 L525.3 388.3 L526.3 388.4 L527.3 388.1 L528.3 387.8 L529.3 387.2 L530.3 387.3 L531.3 387.4 L532.3 387.5 L533.3 386.8 L534.3 386.9 L535.3 387.1 L536.3 387.1 L537.3 387.6 L538.3 387.2 L539.3 387.6 L540.3 387.4 L541.3 387.2 L542.3 387.6 L543.3 388.1 L544.3 388.2 L545.3 388.0 L546.3 388.0 L547.3 388.4 L548.3 388.6 L549.3 388.5 L550.3 388.7 L551.3 388.8 L552.3 388.7 L553.3 388.6 L554.3 388.3 L555.3 388.5 L556.3 388.2 L557.3 387.9 L558.3 388.0 L559.3 388.3 L560.3 388.2 L561.3 388.4 L562.3 388.1 L563.3 388.2 L564.3 388.6 L565.3 388.5 L566.3 388.6 L567.3 388.7 L568.3 388.8 L569.3 388.7 L570.3 388.5 L571.3 388.1 L572.3 388.4 L573.3 388.2 L574.3 388.2 L575.3 388.4 L576.3 388.2 L577.3 388.4 L578.3 388.3 L579.3 388.3 L580.3 388.4 L581.3 388.2 L582.3 388.6 L583.3 388.7 L584.3 388.8 L585.3 388.7 L586.3 388.5 L587.3 388.4 L588.3 388.6 L589.3 388.1 L590.3 388.5 L591.3 388.3 L592.3 387.9 L593.3 387.8 L594.3 388.0 L595.3 388.4 L596.3 388.3 L597.3 388.5 L598.3 388.0 L599.3 385.8 L600.3 388.8 L601.3 388.0 L602.3 385.8 L603.3 388.5 L604.3 388.4 L605.3 388.0 L606.3 388.3 L607.3 387.9 L608.3 388.2 L609.3 388.2 L610.3 388.2 L611.3 388.0 L612.3 388.1 L613.3 388.5 L614.3 388.4 L615.3 388.4 L616.3 388.6 L617.3 388.7 L618.3 388.7 L619.3 388.5 L620.3 388.5 L621.3 388.5 L622.3 388.6 L623.3 388.0 L624.3 388.0 L625.3 388.2 L626.3 387.8 L627.3 387.9 L628.3 388.4 L629.3 388.1 L630.3 388.4 L631.3 388.5 L632.3 387.5 L633.3 387.5 L634.3 387.5 L635.3 386.6 L636.3 387.7 L637.3 388.4 L638.3 388.5 L639.3 388.5 L640.3 388.0 L641.3 388.2 L642.3 388.1 L643.3 388.1 L644.3 387.9 L645.3 388.4 L646.3 388.5 L647.3 388.2 L648.3 388.3 L649.3 388.4 L650.3 388.7 L651.3 388.8 L652.3 388.7 L653.3 388.3 L654.3 388.3 L655.3 388.3 L656.3 388.0 L656.3 391.3 L655.3 391.1 L654.3 391.1 L653.3 391.0 L652.3 390.6 L651.3 390.6 L650.3 390.6 L649.3 390.9 L648.3 391.1 L647.3 391.2 L646.3 390.9 L645.3 390.9 L644.3 391.5 L643.3 391.3 L642.3 391.2 L641.3 391.1 L640.3 391.4 L639.3 390.9 L638.3 390.8 L637.3 390.9 L636.3 391.6 L635.3 392.7 L634.3 391.8 L633.3 391.9 L632.3 391.8 L631.3 390.9 L630.3 391.0 L629.3 391.3 L628.3 390.9 L627.3 391.5 L626.3 391.6 L625.3 391.1 L624.3 391.4 L623.3 391.4 L622.3 390.8 L621.3 390.9 L620.3 390.8 L619.3 390.9 L618.3 390.7 L617.3 390.6 L616.3 390.7 L615.3 390.9 L614.3 391.0 L613.3 390.9 L612.3 391.3 L611.3 391.3 L610.3 391.1 L609.3 391.2 L608.3 391.1 L607.3 391.5 L606.3 391.1 L605.3 391.3 L604.3 390.9 L603.3 390.9 L602.3 393.6 L601.3 391.4 L600.3 390.5 L599.3 393.6 L598.3 391.4 L597.3 390.9 L596.3 391.0 L595.3 390.9 L594.3 391.3 L593.3 391.6 L592.3 391.4 L591.3 391.0 L590.3 390.9 L589.3 391.2 L588.3 390.8 L587.3 391.0 L586.3 390.8 L585.3 390.7 L584.3 390.6 L583.3 390.6 L582.3 390.7 L581.3 391.1 L580.3 390.9 L579.3 391.0 L578.3 391.0 L577.3 391.0 L576.3 391.2 L575.3 391.0 L574.3 391.2 L573.3 391.1 L572.3 391.0 L571.3 391.3 L570.3 390.8 L569.3 390.7 L568.3 390.6 L567.3 390.6 L566.3 390.8 L565.3 390.9 L564.3 390.8 L563.3 391.1 L562.3 391.3 L561.3 390.9 L560.3 391.2 L559.3 391.1 L558.3 391.4 L557.3 391.5 L556.3 391.2 L555.3 390.8 L554.3 391.0 L553.3 390.8 L552.3 390.6 L551.3 390.6 L550.3 390.6 L549.3 390.8 L548.3 390.7 L547.3 391.0 L546.3 391.4 L545.3 391.4 L544.3 391.1 L543.3 391.3 L542.3 391.8 L541.3 392.2 L540.3 391.9 L539.3 391.8 L538.3 392.1 L537.3 391.8 L536.3 392.2 L535.3 392.2 L534.3 392.5 L533.3 392.5 L532.3 391.8 L531.3 392.0 L530.3 392.0 L529.3 392.1 L528.3 391.6 L527.3 391.3 L526.3 390.9 L525.3 391.0 L524.3 391.1 L523.3 392.0 L522.3 393.5 L521.3 391.3 L520.3 390.7 L519.3 392.0 L518.3 393.5 L517.3 391.3 L516.3 392.0 L515.3 393.5 L514.3 391.3 L513.3 392.0 L512.3 393.5 L511.3 391.3 L510.3 392.0 L509.3 393.5 L508.3 391.3 L507.3 392.0 L506.3 393.5 L505.3 391.3 L504.3 392.0 L503.3 393.5 L502.3 391.3 L501.3 390.7 L500.3 390.7 L499.3 390.8 L498.3 391.3 L497.3 391.5 L496.3 391.7 L495.3 391.5 L494.3 391.5 L493.3 391.7 L492.3 391.8 L491.3 391.5 L490.3 391.9 L489.3 391.3 L488.3 391.0 L487.3 390.9 L486.3 390.8 L485.3 390.7 L484.3 390.6 L483.3 391.0 L482.3 391.7 L481.3 392.5 L480.3 392.2 L479.3 392.4 L478.3 392.3 L477.3 392.7 L476.3 392.7 L475.3 391.6 L474.3 391.3 L473.3 391.4 L472.3 391.0 L471.3 390.8 L470.3 390.7 L469.3 390.7 L468.3 390.7 L467.3 390.5 L466.3 390.6 L465.3 390.6 L464.3 390.9 L463.3 390.8 L462.3 391.4 L461.3 391.0 L460.3 391.5 L459.3 391.5 L458.3 391.0 L457.3 391.0 L456.3 391.3 L455.3 391.0 L454.3 391.1 L453.3 391.0 L452.3 390.8 L451.3 390.5 L450.3 390.7 L449.3 391.4 L448.3 392.0 L447.3 392.2 L446.3 392.4 L445.3 392.7 L444.3 392.7 L443.3 391.3 L442.3 391.1 L441.3 391.1 L440.3 391.0 L439.3 391.2 L438.3 391.0 L437.3 391.0 L436.3 390.8 L435.3 390.8 L434.3 390.6 L433.3 390.6 L432.3 390.7 L431.3 391.1 L430.3 391.2 L429.3 391.1 L428.3 391.8 L427.3 392.0 L426.3 391.7 L425.3 391.8 L424.3 391.6 L423.3 391.4 L422.3 391.3 L421.3 392.0 L420.3 391.3 L419.3 391.4 L418.3 391.8 L417.3 391.7 L416.3 391.9 L415.3 391.1 L414.3 390.9 L413.3 391.2 L412.3 391.2 L411.3 391.5 L410.3 391.3 L409.3 391.4 L408.3 391.1 L407.3 391.3 L406.3 391.1 L405.3 391.2 L404.3 391.6 L403.3 393.0 L402.3 392.3 L401.3 393.1 L400.3 393.2 L399.3 392.6 L398.3 391.8 L397.3 391.0 L396.3 391.2 L395.3 391.2 L394.3 391.5 L393.3 391.0 L392.3 391.2 L391.3 391.0 L390.3 391.0 L389.3 391.0 L388.3 390.7 L387.3 393.6 L386.3 391.4 L385.3 393.6 L384.3 391.4 L383.3 390.8 L382.3 393.6 L381.3 391.4 L380.3 391.0 L379.3 390.8 L378.3 391.1 L377.3 391.5 L376.3 391.4 L375.3 391.4 L374.3 391.3 L373.3 391.5 L372.3 391.1 L371.3 391.2 L370.3 391.3 L369.3 391.1 L368.3 390.6 L367.3 390.5 L366.3 390.7 L365.3 391.0 L364.3 391.0 L363.3 390.8 L362.3 391.2 L361.3 391.2 L360.3 391.8 L359.3 392.5 L358.3 392.5 L357.3 392.3 L356.3 392.0 L355.3 392.4 L354.3 392.2 L353.3 392.0 L352.3 391.9 L351.3 391.0 L350.3 390.8 L349.3 390.9 L348.3 391.0 L347.3 390.7 L346.3 391.1 L345.3 391.3 L344.3 391.1 L343.3 391.1 L342.3 391.8 L341.3 392.2 L340.3 391.5 L339.3 391.9 L338.3 391.5 L337.3 392.2 L336.3 391.4 L335.3 391.5 L334.3 391.4 L333.3 391.6 L332.3 391.7 L331.3 391.9 L330.3 392.1 L329.3 391.9 L328.3 392.0 L327.3 391.8 L326.3 391.4 L325.3 391.3 L324.3 391.0 L323.3 391.0 L322.3 390.9 L321.3 391.2 L320.3 392.4 L319.3 392.0 L318.3 392.0 L317.3 392.2 L316.3 391.5 L315.3 392.3 L314.3 391.3 L313.3 391.3 L312.3 391.4 L311.3 391.0 L310.3 391.3 L309.3 391.3 L308.3 392.1 L307.3 392.1 L306.3 391.8 L305.3 391.8 L304.3 392.1 L303.3 391.4 L302.3 391.2 L301.3 390.7 L300.3 390.8 L299.3 391.0 L298.3 391.0 L297.3 391.1 L296.3 392.0 L295.3 392.2 L294.3 392.3 L293.3 392.3 L292.3 391.7 L291.3 392.1 L290.3 391.7 L289.3 392.4 L288.3 391.4 L287.3 390.8 L286.3 390.9 L285.3 390.5 L284.3 390.7 L283.3 390.7 L282.3 391.0 L281.3 390.9 L280.3 390.9 L279.3 390.9 L278.3 391.2 L277.3 390.9 L276.3 391.3 L275.3 391.1 L274.3 391.0 L273.3 390.8 L272.3 391.2 L271.3 390.8 L270.3 390.9 L269.3 390.6 L268.3 390.7 L267.3 390.6 L266.3 390.7 L265.3 390.7 L264.3 391.0 L263.3 391.0 L262.3 391.3 L261.3 390.9 L260.3 391.2 L259.3 391.4 L258.3 391.2 L257.3 391.1 L256.3 390.9 L255.3 390.8 L254.3 391.0 L253.3 390.9 L252.3 390.6 L251.3 390.5 L250.3 390.7 L249.3 391.0 L248.3 391.1 L247.3 391.1 L246.3 390.8 L245.3 391.1 L244.3 391.2 L243.3 391.3 L242.3 391.2 L241.3 391.1 L240.3 391.4 L239.3 390.9 L238.3 390.7 L237.3 391.0 L236.3 390.6 L235.3 390.7 L234.3 390.5 L233.3 390.6 L232.3 390.8 L231.3 390.8 L230.3 391.3 L229.3 391.4 L228.3 390.9 L227.3 391.2 L226.3 391.5 L225.3 390.9 L224.3 390.9 L223.3 391.3 L222.3 391.0 L221.3 390.9 L220.3 390.9 L219.3 390.6 L218.3 390.7 L217.3 390.5 L216.3 390.9 L215.3 390.7 L214.3 391.0 L213.3 390.9 L212.3 391.2 L211.3 391.2 L210.3 391.3 L209.3 391.4 L208.3 391.4 L207.3 391.0 L206.3 391.0 L205.3 390.7 L204.3 390.7 L203.3 390.9 L202.3 390.7 L201.3 390.5Z" fill="#8c9a10"/><rect x="200.8" y="400.96" width="456.8" height="23.28" fill="#11161a"/><rect x="200.8" y="401.76" width="456.8" height="20.50" fill="#d4e81a"/><path d="M201.3 411.5 L202.3 411.5 L203.3 411.5 L204.3 411.5 L205.3 411.4 L206.3 411.4 L207.3 411.6 L208.3 411.6 L209.3 411.5 L210.3 411.5 L211.3 411.4 L212.3 411.4 L213.3 411.5 L214.3 411.6 L215.3 411.6 L216.3 411.5 L217.3 411.4 L218.3 411.6 L219.3 411.5 L220.3 411.6 L221.3 411.5 L222.3 411.6 L223.3 411.6 L224.3 411.5 L225.3 411.6 L226.3 411.5 L227.3 411.4 L228.3 411.5 L229.3 411.4 L230.3 411.4 L231.3 411.6 L232.3 411.6 L233.3 411.5 L234.3 411.5 L235.3 411.7 L236.3 411.4 L237.3 411.5 L238.3 411.5 L239.3 411.5 L240.3 411.6 L241.3 411.5 L242.3 411.6 L243.3 411.5 L244.3 411.4 L245.3 411.6 L246.3 411.6 L247.3 411.5 L248.3 411.4 L249.3 411.6 L250.3 411.5 L251.3 411.5 L252.3 411.6 L253.3 411.6 L254.3 411.4 L255.3 411.5 L256.3 411.5 L257.3 411.5 L258.3 411.6 L259.3 411.5 L260.3 411.5 L261.3 411.5 L262.3 411.6 L263.3 411.6 L264.3 411.5 L265.3 411.5 L266.3 411.5 L267.3 411.4 L268.3 411.5 L269.3 411.5 L270.3 411.6 L271.3 411.5 L272.3 411.5 L273.3 411.4 L274.3 411.6 L275.3 411.5 L276.3 411.4 L277.3 411.4 L278.3 411.5 L279.3 411.6 L280.3 411.6 L281.3 411.5 L282.3 411.4 L283.3 411.6 L284.3 411.6 L285.3 411.5 L286.3 411.6 L287.3 411.4 L288.3 411.6 L289.3 411.5 L290.3 411.4 L291.3 411.4 L292.3 411.6 L293.3 411.4 L294.3 411.4 L295.3 411.5 L296.3 411.5 L297.3 411.4 L298.3 411.4 L299.3 411.5 L300.3 411.6 L301.3 411.4 L302.3 411.5 L303.3 411.4 L304.3 411.4 L305.3 411.5 L306.3 411.4 L307.3 411.5 L308.3 411.5 L309.3 411.4 L310.3 411.5 L311.3 411.6 L312.3 411.4 L313.3 411.5 L314.3 411.5 L315.3 411.5 L316.3 411.6 L317.3 411.4 L318.3 411.6 L319.3 411.6 L320.3 411.5 L321.3 411.5 L322.3 411.6 L323.3 411.6 L324.3 411.5 L325.3 411.5 L326.3 411.5 L327.3 411.5 L328.3 411.6 L329.3 411.6 L330.3 411.6 L331.3 411.5 L332.3 411.4 L333.3 411.4 L334.3 411.4 L335.3 411.6 L336.3 411.6 L337.3 411.4 L338.3 411.5 L339.3 411.5 L340.3 411.4 L341.3 411.6 L342.3 411.4 L343.3 411.6 L344.3 411.5 L345.3 411.5 L346.3 411.5 L347.3 411.4 L348.3 411.6 L349.3 411.6 L350.3 411.5 L351.3 411.4 L352.3 411.6 L353.3 411.6 L354.3 411.4 L355.3 411.6 L356.3 411.6 L357.3 411.5 L358.3 411.6 L359.3 411.4 L360.3 411.5 L361.3 411.4 L362.3 411.6 L363.3 411.6 L364.3 411.6 L365.3 411.4 L366.3 411.4 L367.3 411.5 L368.3 411.6 L369.3 411.6 L370.3 411.6 L371.3 411.4 L372.3 411.4 L373.3 411.4 L374.3 411.6 L375.3 411.6 L376.3 411.4 L377.3 411.4 L378.3 411.4 L379.3 411.4 L380.3 411.4 L381.3 411.7 L382.3 411.4 L383.3 411.5 L384.3 411.4 L385.3 411.6 L386.3 411.5 L387.3 411.6 L388.3 411.4 L389.3 411.5 L390.3 411.4 L391.3 411.5 L392.3 411.4 L393.3 411.6 L394.3 411.6 L395.3 411.6 L396.3 411.6 L397.3 411.7 L398.3 411.4 L399.3 411.4 L400.3 411.4 L401.3 411.4 L402.3 411.6 L403.3 411.6 L404.3 411.6 L405.3 411.6 L406.3 411.6 L407.3 411.4 L408.3 411.4 L409.3 411.5 L410.3 411.5 L411.3 411.5 L412.3 411.5 L413.3 411.5 L414.3 411.5 L415.3 411.4 L416.3 411.6 L417.3 411.6 L418.3 411.6 L419.3 411.5 L420.3 411.5 L421.3 411.4 L422.3 411.5 L423.3 411.4 L424.3 411.4 L425.3 411.6 L426.3 411.6 L427.3 411.5 L428.3 411.5 L429.3 411.6 L430.3 411.6 L431.3 411.4 L432.3 411.4 L433.3 411.4 L434.3 411.6 L435.3 411.7 L436.3 411.5 L437.3 411.5 L438.3 411.4 L439.3 411.5 L440.3 411.5 L441.3 411.7 L442.3 411.6 L443.3 411.4 L444.3 411.5 L445.3 411.4 L446.3 411.5 L447.3 411.5 L448.3 411.5 L449.3 411.4 L450.3 411.5 L451.3 411.4 L452.3 411.6 L453.3 411.5 L454.3 411.5 L455.3 411.4 L456.3 411.5 L457.3 411.6 L458.3 411.7 L459.3 411.5 L460.3 411.6 L461.3 411.4 L462.3 411.4 L463.3 411.6 L464.3 411.4 L465.3 411.5 L466.3 411.5 L467.3 411.6 L468.3 411.4 L469.3 411.6 L470.3 411.6 L471.3 411.4 L472.3 411.4 L473.3 411.4 L474.3 411.5 L475.3 411.6 L476.3 411.4 L477.3 411.5 L478.3 411.4 L479.3 411.4 L480.3 411.5 L481.3 411.4 L482.3 411.5 L483.3 411.5 L484.3 411.6 L485.3 411.6 L486.3 411.5 L487.3 411.6 L488.3 411.5 L489.3 411.6 L490.3 411.6 L491.3 411.4 L492.3 411.4 L493.3 411.4 L494.3 411.4 L495.3 411.6 L496.3 411.6 L497.3 411.4 L498.3 411.5 L499.3 411.4 L500.3 411.4 L501.3 411.5 L502.3 411.6 L503.3 411.4 L504.3 411.4 L505.3 411.5 L506.3 411.5 L507.3 411.5 L508.3 411.5 L509.3 411.6 L510.3 411.5 L511.3 411.4 L512.3 411.4 L513.3 411.4 L514.3 411.4 L515.3 411.5 L516.3 411.6 L517.3 411.4 L518.3 411.7 L519.3 411.4 L520.3 411.6 L521.3 411.5 L522.3 411.6 L523.3 411.6 L524.3 411.6 L525.3 411.5 L526.3 411.5 L527.3 411.4 L528.3 411.5 L529.3 411.4 L530.3 411.4 L531.3 411.4 L532.3 411.6 L533.3 411.4 L534.3 411.6 L535.3 411.5 L536.3 411.4 L537.3 411.5 L538.3 411.6 L539.3 411.5 L540.3 411.6 L541.3 411.4 L542.3 411.5 L543.3 411.4 L544.3 411.5 L545.3 411.4 L546.3 411.6 L547.3 411.5 L548.3 411.6 L549.3 411.5 L550.3 411.5 L551.3 411.4 L552.3 411.5 L553.3 411.5 L554.3 411.5 L555.3 411.4 L556.3 411.4 L557.3 411.6 L558.3 411.5 L559.3 411.6 L560.3 411.7 L561.3 411.6 L562.3 411.6 L563.3 411.4 L564.3 411.4 L565.3 411.6 L566.3 411.6 L567.3 411.5 L568.3 411.6 L569.3 411.5 L570.3 411.5 L571.3 411.5 L572.3 411.4 L573.3 411.4 L574.3 411.6 L575.3 411.6 L576.3 411.5 L577.3 411.5 L578.3 411.5 L579.3 411.4 L580.3 411.4 L581.3 411.6 L582.3 411.6 L583.3 411.4 L584.3 411.5 L585.3 411.4 L586.3 411.5 L587.3 411.5 L588.3 411.4 L589.3 411.5 L590.3 411.6 L591.3 411.6 L592.3 411.4 L593.3 411.6 L594.3 411.6 L595.3 411.6 L596.3 411.4 L597.3 411.4 L598.3 411.5 L599.3 411.5 L600.3 411.4 L601.3 411.5 L602.3 411.4 L603.3 411.7 L604.3 411.5 L605.3 411.4 L606.3 411.6 L607.3 411.5 L608.3 411.5 L609.3 411.5 L610.3 411.6 L611.3 411.4 L612.3 411.4 L613.3 411.4 L614.3 411.4 L615.3 411.5 L616.3 411.5 L617.3 411.4 L618.3 411.7 L619.3 411.7 L620.3 411.5 L621.3 411.4 L622.3 411.5 L623.3 411.6 L624.3 411.5 L625.3 411.5 L626.3 411.4 L627.3 411.7 L628.3 411.5 L629.3 411.5 L630.3 411.5 L631.3 411.4 L632.3 411.6 L633.3 411.6 L634.3 411.6 L635.3 411.4 L636.3 411.4 L637.3 411.6 L638.3 411.5 L639.3 411.4 L640.3 411.4 L641.3 411.6 L642.3 411.5 L643.3 411.5 L644.3 411.6 L645.3 411.5 L646.3 411.6 L647.3 411.5 L648.3 411.5 L649.3 411.6 L650.3 411.6 L651.3 411.4 L652.3 411.5 L653.3 411.4 L654.3 411.4 L655.3 411.5 L656.3 411.4 L656.3 412.9 L655.3 412.8 L654.3 412.9 L653.3 412.9 L652.3 412.8 L651.3 412.9 L650.3 412.8 L649.3 412.8 L648.3 412.8 L647.3 412.9 L646.3 412.7 L645.3 412.9 L644.3 412.7 L643.3 412.8 L642.3 412.8 L641.3 412.8 L640.3 412.9 L639.3 412.9 L638.3 412.8 L637.3 412.8 L636.3 412.9 L635.3 412.9 L634.3 412.7 L633.3 412.7 L632.3 412.8 L631.3 412.9 L630.3 412.8 L629.3 412.8 L628.3 412.8 L627.3 412.7 L626.3 412.9 L625.3 412.8 L624.3 412.8 L623.3 412.7 L622.3 412.8 L621.3 412.9 L620.3 412.8 L619.3 412.7 L618.3 412.7 L617.3 412.9 L616.3 412.8 L615.3 412.8 L614.3 412.9 L613.3 413.0 L612.3 413.0 L611.3 412.9 L610.3 412.7 L609.3 412.8 L608.3 412.8 L607.3 412.8 L606.3 412.7 L605.3 412.9 L604.3 412.8 L603.3 412.7 L602.3 412.9 L601.3 412.8 L600.3 412.9 L599.3 412.9 L598.3 412.8 L597.3 412.9 L596.3 412.9 L595.3 412.8 L594.3 412.7 L593.3 412.7 L592.3 412.9 L591.3 412.7 L590.3 412.7 L589.3 412.8 L588.3 413.0 L587.3 412.8 L586.3 412.9 L585.3 412.9 L584.3 412.8 L583.3 412.9 L582.3 412.8 L581.3 412.7 L580.3 412.9 L579.3 412.9 L578.3 412.9 L577.3 412.8 L576.3 412.8 L575.3 412.7 L574.3 412.7 L573.3 412.9 L572.3 412.9 L571.3 412.9 L570.3 412.8 L569.3 412.8 L568.3 412.7 L567.3 412.9 L566.3 412.8 L565.3 412.7 L564.3 413.0 L563.3 412.9 L562.3 412.7 L561.3 412.7 L560.3 412.7 L559.3 412.8 L558.3 412.8 L557.3 412.8 L556.3 412.9 L555.3 412.9 L554.3 412.8 L553.3 412.8 L552.3 412.8 L551.3 412.9 L550.3 412.8 L549.3 412.8 L548.3 412.7 L547.3 412.8 L546.3 412.7 L545.3 413.0 L544.3 412.9 L543.3 413.0 L542.3 412.9 L541.3 412.9 L540.3 412.8 L539.3 412.8 L538.3 412.7 L537.3 412.8 L536.3 412.9 L535.3 412.8 L534.3 412.7 L533.3 412.9 L532.3 412.8 L531.3 412.9 L530.3 412.9 L529.3 412.9 L528.3 412.8 L527.3 412.9 L526.3 412.8 L525.3 412.8 L524.3 412.7 L523.3 412.8 L522.3 412.7 L521.3 412.9 L520.3 412.7 L519.3 412.9 L518.3 412.7 L517.3 412.9 L516.3 412.8 L515.3 412.8 L514.3 412.9 L513.3 412.9 L512.3 412.9 L511.3 412.9 L510.3 412.8 L509.3 412.7 L508.3 412.8 L507.3 412.9 L506.3 412.9 L505.3 412.8 L504.3 412.9 L503.3 412.9 L502.3 412.7 L501.3 412.8 L500.3 412.9 L499.3 412.9 L498.3 412.8 L497.3 412.9 L496.3 412.8 L495.3 412.8 L494.3 412.9 L493.3 412.9 L492.3 412.9 L491.3 412.9 L490.3 412.8 L489.3 412.7 L488.3 412.9 L487.3 412.7 L486.3 412.8 L485.3 412.7 L484.3 412.7 L483.3 412.9 L482.3 412.8 L481.3 413.0 L480.3 412.8 L479.3 412.9 L478.3 412.9 L477.3 412.8 L476.3 413.0 L475.3 412.8 L474.3 412.9 L473.3 412.9 L472.3 412.9 L471.3 412.9 L470.3 412.7 L469.3 412.8 L468.3 413.0 L467.3 412.7 L466.3 412.8 L465.3 412.9 L464.3 412.9 L463.3 412.8 L462.3 412.9 L461.3 412.9 L460.3 412.7 L459.3 412.8 L458.3 412.7 L457.3 412.7 L456.3 412.8 L455.3 412.9 L454.3 412.8 L453.3 412.9 L452.3 412.7 L451.3 412.9 L450.3 412.8 L449.3 412.9 L448.3 412.8 L447.3 412.8 L446.3 412.8 L445.3 412.9 L444.3 412.8 L443.3 412.9 L442.3 412.7 L441.3 412.7 L440.3 412.9 L439.3 412.8 L438.3 412.9 L437.3 412.8 L436.3 412.8 L435.3 412.7 L434.3 412.7 L433.3 412.9 L432.3 413.0 L431.3 412.9 L430.3 412.7 L429.3 412.7 L428.3 412.8 L427.3 412.9 L426.3 412.7 L425.3 412.8 L424.3 412.9 L423.3 412.9 L422.3 412.8 L421.3 412.9 L420.3 412.8 L419.3 412.8 L418.3 412.7 L417.3 412.7 L416.3 412.8 L415.3 413.0 L414.3 412.8 L413.3 412.8 L412.3 412.8 L411.3 412.8 L410.3 412.8 L409.3 412.8 L408.3 412.9 L407.3 412.9 L406.3 412.7 L405.3 412.8 L404.3 412.8 L403.3 412.7 L402.3 412.7 L401.3 412.9 L400.3 413.0 L399.3 412.9 L398.3 412.9 L397.3 412.7 L396.3 412.7 L395.3 412.7 L394.3 412.7 L393.3 412.8 L392.3 412.9 L391.3 412.8 L390.3 412.9 L389.3 412.8 L388.3 412.9 L387.3 412.7 L386.3 412.8 L385.3 412.7 L384.3 413.0 L383.3 412.8 L382.3 412.9 L381.3 412.7 L380.3 412.9 L379.3 412.9 L378.3 412.9 L377.3 412.9 L376.3 413.0 L375.3 412.7 L374.3 412.7 L373.3 412.9 L372.3 412.9 L371.3 413.0 L370.3 412.7 L369.3 412.7 L368.3 412.7 L367.3 412.8 L366.3 413.0 L365.3 412.9 L364.3 412.7 L363.3 412.7 L362.3 412.7 L361.3 412.9 L360.3 412.8 L359.3 412.9 L358.3 412.8 L357.3 412.8 L356.3 412.7 L355.3 412.7 L354.3 413.0 L353.3 412.7 L352.3 412.7 L351.3 412.9 L350.3 412.9 L349.3 412.7 L348.3 412.8 L347.3 412.9 L346.3 412.8 L345.3 412.9 L344.3 412.8 L343.3 412.7 L342.3 412.9 L341.3 412.7 L340.3 412.9 L339.3 412.8 L338.3 412.8 L337.3 412.9 L336.3 412.7 L335.3 412.7 L334.3 412.9 L333.3 412.9 L332.3 412.9 L331.3 412.8 L330.3 412.7 L329.3 412.7 L328.3 412.7 L327.3 412.9 L326.3 412.8 L325.3 412.8 L324.3 412.8 L323.3 412.7 L322.3 412.8 L321.3 412.8 L320.3 412.8 L319.3 412.7 L318.3 412.7 L317.3 412.9 L316.3 412.7 L315.3 412.8 L314.3 412.8 L313.3 412.8 L312.3 412.9 L311.3 412.7 L310.3 412.8 L309.3 412.9 L308.3 412.8 L307.3 412.8 L306.3 412.9 L305.3 412.9 L304.3 412.9 L303.3 412.9 L302.3 412.9 L301.3 412.9 L300.3 412.8 L299.3 412.9 L298.3 412.9 L297.3 412.9 L296.3 412.8 L295.3 412.8 L294.3 412.9 L293.3 412.9 L292.3 412.7 L291.3 412.9 L290.3 413.0 L289.3 412.8 L288.3 412.8 L287.3 413.0 L286.3 412.7 L285.3 412.8 L284.3 412.8 L283.3 412.7 L282.3 412.9 L281.3 412.8 L280.3 412.8 L279.3 412.7 L278.3 412.8 L277.3 412.9 L276.3 412.9 L275.3 412.8 L274.3 412.7 L273.3 412.9 L272.3 412.9 L271.3 412.8 L270.3 412.8 L269.3 412.8 L268.3 412.8 L267.3 412.9 L266.3 412.9 L265.3 412.9 L264.3 412.8 L263.3 412.7 L262.3 412.7 L261.3 412.8 L260.3 412.8 L259.3 412.8 L258.3 412.7 L257.3 412.8 L256.3 412.8 L255.3 412.8 L254.3 412.9 L253.3 412.7 L252.3 412.7 L251.3 412.8 L250.3 412.8 L249.3 412.7 L248.3 412.9 L247.3 412.8 L246.3 412.7 L245.3 412.7 L244.3 412.9 L243.3 412.9 L242.3 412.7 L241.3 412.8 L240.3 412.7 L239.3 412.8 L238.3 412.8 L237.3 412.9 L236.3 412.9 L235.3 412.7 L234.3 412.8 L233.3 412.9 L232.3 412.7 L231.3 412.7 L230.3 412.9 L229.3 412.9 L228.3 412.8 L227.3 412.9 L226.3 412.9 L225.3 412.8 L224.3 412.9 L223.3 412.7 L222.3 412.7 L221.3 412.8 L220.3 412.8 L219.3 412.8 L218.3 412.7 L217.3 412.9 L216.3 412.8 L215.3 412.7 L214.3 412.8 L213.3 412.8 L212.3 412.9 L211.3 412.9 L210.3 412.8 L209.3 412.8 L208.3 412.7 L207.3 412.7 L206.3 412.9 L205.3 412.9 L204.3 412.9 L203.3 412.8 L202.3 412.9 L201.3 412.8Z" fill="#8c9a10"/><rect x="200.8" y="423.44" width="456.8" height="23.28" fill="#11161a"/><rect x="200.8" y="424.24" width="456.8" height="20.50" fill="#6fe214"/><path d="M201.3 434.1 L202.3 434.1 L203.3 434.1 L204.3 434.1 L205.3 434.1 L206.3 434.1 L207.3 434.1 L208.3 434.1 L209.3 434.1 L210.3 434.1 L211.3 434.1 L212.3 434.0 L213.3 433.7 L214.3 433.7 L215.3 433.6 L216.3 433.8 L217.3 433.9 L218.3 433.7 L219.3 433.7 L220.3 433.8 L221.3 433.7 L222.3 433.8 L223.3 433.6 L224.3 433.9 L225.3 433.9 L226.3 433.6 L227.3 433.8 L228.3 433.9 L229.3 433.6 L230.3 433.7 L231.3 433.9 L232.3 433.7 L233.3 433.7 L234.3 433.9 L235.3 433.7 L236.3 433.9 L237.3 433.8 L238.3 433.9 L239.3 433.9 L240.3 433.5 L241.3 433.8 L242.3 433.5 L243.3 433.8 L244.3 433.7 L245.3 433.6 L246.3 433.9 L247.3 434.1 L248.3 434.1 L249.3 434.1 L250.3 434.1 L251.3 434.1 L252.3 434.1 L253.3 434.0 L254.3 433.7 L255.3 433.7 L256.3 433.9 L257.3 433.9 L258.3 433.6 L259.3 433.7 L260.3 433.9 L261.3 433.8 L262.3 433.9 L263.3 433.6 L264.3 433.7 L265.3 433.9 L266.3 433.6 L267.3 433.9 L268.3 433.8 L269.3 433.9 L270.3 433.6 L271.3 433.9 L272.3 433.7 L273.3 433.9 L274.3 433.8 L275.3 433.7 L276.3 433.7 L277.3 433.8 L278.3 433.8 L279.3 433.8 L280.3 433.7 L281.3 433.9 L282.3 433.8 L283.3 433.9 L284.3 433.6 L285.3 433.6 L286.3 433.9 L287.3 433.9 L288.3 433.7 L289.3 433.7 L290.3 434.0 L291.3 433.7 L292.3 433.6 L293.3 433.8 L294.3 433.8 L295.3 433.9 L296.3 433.3 L297.3 432.7 L298.3 432.7 L299.3 432.8 L300.3 432.5 L301.3 432.6 L302.3 432.7 L303.3 432.7 L304.3 433.5 L305.3 434.0 L306.3 433.6 L307.3 433.8 L308.3 433.9 L309.3 433.7 L310.3 433.9 L311.3 433.9 L312.3 434.0 L313.3 434.0 L314.3 434.0 L315.3 433.9 L316.3 433.7 L317.3 433.9 L318.3 433.9 L319.3 433.8 L320.3 433.7 L321.3 433.9 L322.3 433.7 L323.3 433.9 L324.3 433.8 L325.3 433.8 L326.3 433.7 L327.3 433.7 L328.3 433.8 L329.3 433.7 L330.3 433.9 L331.3 433.9 L332.3 433.9 L333.3 434.1 L334.3 434.1 L335.3 434.1 L336.3 434.1 L337.3 434.1 L338.3 434.1 L339.3 434.1 L340.3 434.1 L341.3 434.1 L342.3 434.1 L343.3 434.1 L344.3 434.1 L345.3 434.1 L346.3 434.1 L347.3 434.1 L348.3 434.1 L349.3 434.1 L350.3 434.1 L351.3 434.1 L352.3 434.1 L353.3 434.1 L354.3 434.1 L355.3 434.1 L356.3 434.1 L357.3 434.1 L358.3 434.1 L359.3 434.1 L360.3 434.1 L361.3 434.1 L362.3 434.1 L363.3 434.1 L364.3 434.1 L365.3 434.1 L366.3 434.1 L367.3 434.1 L368.3 434.1 L369.3 434.1 L370.3 434.1 L371.3 434.1 L372.3 434.1 L373.3 433.7 L374.3 433.2 L375.3 433.0 L376.3 432.7 L377.3 432.8 L378.3 433.0 L379.3 432.7 L380.3 432.9 L381.3 433.0 L382.3 433.0 L383.3 433.1 L384.3 433.1 L385.3 432.8 L386.3 433.1 L387.3 433.0 L388.3 432.9 L389.3 432.9 L390.3 433.0 L391.3 432.8 L392.3 433.4 L393.3 433.8 L394.3 434.0 L395.3 434.0 L396.3 434.0 L397.3 434.0 L398.3 433.7 L399.3 434.0 L400.3 433.8 L401.3 434.0 L402.3 434.0 L403.3 434.1 L404.3 434.1 L405.3 434.1 L406.3 434.1 L407.3 434.1 L408.3 434.1 L409.3 434.1 L410.3 434.1 L411.3 434.1 L412.3 434.1 L413.3 434.1 L414.3 434.1 L415.3 434.1 L416.3 434.1 L417.3 434.1 L418.3 434.1 L419.3 434.1 L420.3 434.1 L421.3 434.1 L422.3 434.1 L423.3 434.1 L424.3 434.1 L425.3 434.1 L426.3 434.1 L427.3 434.1 L428.3 434.1 L429.3 434.1 L430.3 434.1 L431.3 434.1 L432.3 434.1 L433.3 434.1 L434.3 434.1 L435.3 434.1 L436.3 434.1 L437.3 434.1 L438.3 434.1 L439.3 434.1 L440.3 434.1 L441.3 434.1 L442.3 434.1 L443.3 434.1 L444.3 434.1 L445.3 434.1 L446.3 434.1 L447.3 434.1 L448.3 434.1 L449.3 434.1 L450.3 434.1 L451.3 434.1 L452.3 434.1 L453.3 434.1 L454.3 434.1 L455.3 434.1 L456.3 434.1 L457.3 434.1 L458.3 434.1 L459.3 434.1 L460.3 434.1 L461.3 434.1 L462.3 434.1 L463.3 434.1 L464.3 434.1 L465.3 434.1 L466.3 434.1 L467.3 434.1 L468.3 434.1 L469.3 434.1 L470.3 434.1 L471.3 434.1 L472.3 434.1 L473.3 434.1 L474.3 434.1 L475.3 434.1 L476.3 434.1 L477.3 434.1 L478.3 434.1 L479.3 434.1 L480.3 434.1 L481.3 434.1 L482.3 433.6 L483.3 433.1 L484.3 432.9 L485.3 433.0 L486.3 433.0 L487.3 433.7 L488.3 434.0 L489.3 433.9 L490.3 433.9 L491.3 433.7 L492.3 433.7 L493.3 434.0 L494.3 433.8 L495.3 433.7 L496.3 433.8 L497.3 434.1 L498.3 434.1 L499.3 434.1 L500.3 434.1 L501.3 434.1 L502.3 434.1 L503.3 434.1 L504.3 434.1 L505.3 434.1 L506.3 434.1 L507.3 434.1 L508.3 434.1 L509.3 434.1 L510.3 434.1 L511.3 434.1 L512.3 434.1 L513.3 434.1 L514.3 434.1 L515.3 434.1 L516.3 434.1 L517.3 434.1 L518.3 434.1 L519.3 434.1 L520.3 434.1 L521.3 434.1 L522.3 434.1 L523.3 434.1 L524.3 434.1 L525.3 434.1 L526.3 434.1 L527.3 434.1 L528.3 434.1 L529.3 434.1 L530.3 434.1 L531.3 434.1 L532.3 434.1 L533.3 434.1 L534.3 434.1 L535.3 434.1 L536.3 434.1 L537.3 434.1 L538.3 434.1 L539.3 434.1 L540.3 434.1 L541.3 434.1 L542.3 434.1 L543.3 434.1 L544.3 434.1 L545.3 434.1 L546.3 434.1 L547.3 434.1 L548.3 434.1 L549.3 434.1 L550.3 434.1 L551.3 434.1 L552.3 434.1 L553.3 434.1 L554.3 434.1 L555.3 434.1 L556.3 434.1 L557.3 434.1 L558.3 434.1 L559.3 433.8 L560.3 433.6 L561.3 433.3 L562.3 433.4 L563.3 433.4 L564.3 433.4 L565.3 433.8 L566.3 433.4 L567.3 433.7 L568.3 433.8 L569.3 433.6 L570.3 433.5 L571.3 433.8 L572.3 433.6 L573.3 433.4 L574.3 433.6 L575.3 433.6 L576.3 433.7 L577.3 433.4 L578.3 433.7 L579.3 433.5 L580.3 433.5 L581.3 433.8 L582.3 433.3 L583.3 433.7 L584.3 433.3 L585.3 433.4 L586.3 433.4 L587.3 433.4 L588.3 433.6 L589.3 433.6 L590.3 433.7 L591.3 433.4 L592.3 433.8 L593.3 433.8 L594.3 433.4 L595.3 433.4 L596.3 433.5 L597.3 433.4 L598.3 433.6 L599.3 433.4 L600.3 433.6 L601.3 433.4 L602.3 433.8 L603.3 433.6 L604.3 433.5 L605.3 433.8 L606.3 433.3 L607.3 432.3 L608.3 432.2 L609.3 432.5 L610.3 432.6 L611.3 432.7 L612.3 432.2 L613.3 433.3 L614.3 433.9 L615.3 433.6 L616.3 433.8 L617.3 433.7 L618.3 433.7 L619.3 433.7 L620.3 433.4 L621.3 433.7 L622.3 434.0 L623.3 434.1 L624.3 434.1 L625.3 434.1 L626.3 434.1 L627.3 434.1 L628.3 434.1 L629.3 434.1 L630.3 433.9 L631.3 433.5 L632.3 434.1 L633.3 434.1 L634.3 434.1 L635.3 434.1 L636.3 434.1 L637.3 434.1 L638.3 433.9 L639.3 433.5 L640.3 434.1 L641.3 434.1 L642.3 434.1 L643.3 434.1 L644.3 434.1 L645.3 434.1 L646.3 433.9 L647.3 433.5 L648.3 434.1 L649.3 434.1 L650.3 434.1 L651.3 434.1 L652.3 433.9 L653.3 433.5 L654.3 434.1 L655.3 434.1 L656.3 434.1 L656.3 435.1 L655.3 435.1 L654.3 435.1 L653.3 435.7 L652.3 435.3 L651.3 435.1 L650.3 435.1 L649.3 435.1 L648.3 435.1 L647.3 435.7 L646.3 435.3 L645.3 435.1 L644.3 435.1 L643.3 435.1 L642.3 435.1 L641.3 435.1 L640.3 435.1 L639.3 435.7 L638.3 435.3 L637.3 435.1 L636.3 435.1 L635.3 435.1 L634.3 435.1 L633.3 435.1 L632.3 435.1 L631.3 435.7 L630.3 435.3 L629.3 435.1 L628.3 435.1 L627.3 435.1 L626.3 435.1 L625.3 435.1 L624.3 435.1 L623.3 435.1 L622.3 435.3 L621.3 435.6 L620.3 435.9 L619.3 435.6 L618.3 435.6 L617.3 435.6 L616.3 435.5 L615.3 435.7 L614.3 435.4 L613.3 436.0 L612.3 437.1 L611.3 436.6 L610.3 436.7 L609.3 436.8 L608.3 437.1 L607.3 436.9 L606.3 436.0 L605.3 435.5 L604.3 435.7 L603.3 435.7 L602.3 435.5 L601.3 435.9 L600.3 435.7 L599.3 435.9 L598.3 435.7 L597.3 435.9 L596.3 435.8 L595.3 435.8 L594.3 435.9 L593.3 435.5 L592.3 435.5 L591.3 435.9 L590.3 435.6 L589.3 435.7 L588.3 435.7 L587.3 435.9 L586.3 435.9 L585.3 435.9 L584.3 435.9 L583.3 435.6 L582.3 435.9 L581.3 435.5 L580.3 435.8 L579.3 435.8 L578.3 435.6 L577.3 435.9 L576.3 435.6 L575.3 435.7 L574.3 435.7 L573.3 435.8 L572.3 435.7 L571.3 435.5 L570.3 435.7 L569.3 435.6 L568.3 435.5 L567.3 435.6 L566.3 435.8 L565.3 435.5 L564.3 435.9 L563.3 435.9 L562.3 435.9 L561.3 435.9 L560.3 435.7 L559.3 435.5 L558.3 435.1 L557.3 435.1 L556.3 435.1 L555.3 435.1 L554.3 435.1 L553.3 435.1 L552.3 435.1 L551.3 435.1 L550.3 435.1 L549.3 435.1 L548.3 435.1 L547.3 435.1 L546.3 435.1 L545.3 435.1 L544.3 435.1 L543.3 435.1 L542.3 435.1 L541.3 435.1 L540.3 435.1 L539.3 435.1 L538.3 435.1 L537.3 435.1 L536.3 435.1 L535.3 435.1 L534.3 435.1 L533.3 435.1 L532.3 435.1 L531.3 435.1 L530.3 435.1 L529.3 435.1 L528.3 435.1 L527.3 435.1 L526.3 435.1 L525.3 435.1 L524.3 435.1 L523.3 435.1 L522.3 435.1 L521.3 435.1 L520.3 435.1 L519.3 435.1 L518.3 435.1 L517.3 435.1 L516.3 435.1 L515.3 435.1 L514.3 435.1 L513.3 435.1 L512.3 435.1 L511.3 435.1 L510.3 435.1 L509.3 435.1 L508.3 435.1 L507.3 435.1 L506.3 435.1 L505.3 435.1 L504.3 435.1 L503.3 435.1 L502.3 435.1 L501.3 435.1 L500.3 435.1 L499.3 435.1 L498.3 435.1 L497.3 435.2 L496.3 435.5 L495.3 435.6 L494.3 435.5 L493.3 435.3 L492.3 435.6 L491.3 435.6 L490.3 435.4 L489.3 435.3 L488.3 435.3 L487.3 435.6 L486.3 436.3 L485.3 436.3 L484.3 436.4 L483.3 436.2 L482.3 435.7 L481.3 435.1 L480.3 435.1 L479.3 435.1 L478.3 435.1 L477.3 435.1 L476.3 435.1 L475.3 435.1 L474.3 435.1 L473.3 435.1 L472.3 435.1 L471.3 435.1 L470.3 435.1 L469.3 435.1 L468.3 435.1 L467.3 435.1 L466.3 435.1 L465.3 435.1 L464.3 435.1 L463.3 435.1 L462.3 435.1 L461.3 435.1 L460.3 435.1 L459.3 435.1 L458.3 435.1 L457.3 435.1 L456.3 435.1 L455.3 435.1 L454.3 435.1 L453.3 435.1 L452.3 435.1 L451.3 435.1 L450.3 435.1 L449.3 435.1 L448.3 435.1 L447.3 435.1 L446.3 435.1 L445.3 435.1 L444.3 435.1 L443.3 435.1 L442.3 435.1 L441.3 435.1 L440.3 435.1 L439.3 435.1 L438.3 435.1 L437.3 435.1 L436.3 435.1 L435.3 435.1 L434.3 435.1 L433.3 435.1 L432.3 435.1 L431.3 435.1 L430.3 435.1 L429.3 435.1 L428.3 435.1 L427.3 435.1 L426.3 435.1 L425.3 435.1 L424.3 435.1 L423.3 435.1 L422.3 435.1 L421.3 435.1 L420.3 435.1 L419.3 435.1 L418.3 435.1 L417.3 435.1 L416.3 435.1 L415.3 435.1 L414.3 435.1 L413.3 435.1 L412.3 435.1 L411.3 435.1 L410.3 435.1 L409.3 435.1 L408.3 435.1 L407.3 435.1 L406.3 435.1 L405.3 435.1 L404.3 435.1 L403.3 435.1 L402.3 435.3 L401.3 435.3 L400.3 435.5 L399.3 435.3 L398.3 435.5 L397.3 435.3 L396.3 435.3 L395.3 435.3 L394.3 435.3 L393.3 435.5 L392.3 435.9 L391.3 436.5 L390.3 436.3 L389.3 436.4 L388.3 436.3 L387.3 436.3 L386.3 436.2 L385.3 436.5 L384.3 436.2 L383.3 436.2 L382.3 436.3 L381.3 436.3 L380.3 436.4 L379.3 436.6 L378.3 436.2 L377.3 436.4 L376.3 436.6 L375.3 436.3 L374.3 436.1 L373.3 435.6 L372.3 435.1 L371.3 435.1 L370.3 435.1 L369.3 435.1 L368.3 435.1 L367.3 435.1 L366.3 435.1 L365.3 435.1 L364.3 435.1 L363.3 435.1 L362.3 435.1 L361.3 435.1 L360.3 435.1 L359.3 435.1 L358.3 435.1 L357.3 435.1 L356.3 435.1 L355.3 435.1 L354.3 435.1 L353.3 435.1 L352.3 435.1 L351.3 435.1 L350.3 435.1 L349.3 435.1 L348.3 435.1 L347.3 435.1 L346.3 435.1 L345.3 435.1 L344.3 435.1 L343.3 435.1 L342.3 435.1 L341.3 435.1 L340.3 435.1 L339.3 435.1 L338.3 435.1 L337.3 435.1 L336.3 435.1 L335.3 435.1 L334.3 435.1 L333.3 435.1 L332.3 435.4 L331.3 435.4 L330.3 435.4 L329.3 435.6 L328.3 435.4 L327.3 435.5 L326.3 435.6 L325.3 435.5 L324.3 435.5 L323.3 435.4 L322.3 435.5 L321.3 435.4 L320.3 435.6 L319.3 435.5 L318.3 435.3 L317.3 435.3 L316.3 435.6 L315.3 435.3 L314.3 435.3 L313.3 435.3 L312.3 435.3 L311.3 435.3 L310.3 435.4 L309.3 435.6 L308.3 435.4 L307.3 435.5 L306.3 435.6 L305.3 435.3 L304.3 435.8 L303.3 436.6 L302.3 436.5 L301.3 436.7 L300.3 436.7 L299.3 436.5 L298.3 436.6 L297.3 436.5 L296.3 436.0 L295.3 435.3 L294.3 435.5 L293.3 435.5 L292.3 435.7 L291.3 435.6 L290.3 435.3 L289.3 435.6 L288.3 435.6 L287.3 435.4 L286.3 435.3 L285.3 435.7 L284.3 435.7 L283.3 435.4 L282.3 435.5 L281.3 435.4 L280.3 435.6 L279.3 435.5 L278.3 435.5 L277.3 435.5 L276.3 435.5 L275.3 435.6 L274.3 435.5 L273.3 435.4 L272.3 435.5 L271.3 435.4 L270.3 435.6 L269.3 435.3 L268.3 435.4 L267.3 435.4 L266.3 435.7 L265.3 435.4 L264.3 435.5 L263.3 435.7 L262.3 435.4 L261.3 435.5 L260.3 435.4 L259.3 435.5 L258.3 435.7 L257.3 435.4 L256.3 435.4 L255.3 435.6 L254.3 435.6 L253.3 435.3 L252.3 435.1 L251.3 435.1 L250.3 435.1 L249.3 435.1 L248.3 435.1 L247.3 435.1 L246.3 435.4 L245.3 435.7 L244.3 435.6 L243.3 435.5 L242.3 435.7 L241.3 435.5 L240.3 435.7 L239.3 435.4 L238.3 435.4 L237.3 435.5 L236.3 435.4 L235.3 435.6 L234.3 435.4 L233.3 435.6 L232.3 435.6 L231.3 435.4 L230.3 435.6 L229.3 435.7 L228.3 435.4 L227.3 435.5 L226.3 435.7 L225.3 435.4 L224.3 435.4 L223.3 435.6 L222.3 435.5 L221.3 435.6 L220.3 435.4 L219.3 435.6 L218.3 435.6 L217.3 435.4 L216.3 435.4 L215.3 435.7 L214.3 435.6 L213.3 435.6 L212.3 435.3 L211.3 435.1 L210.3 435.1 L209.3 435.1 L208.3 435.1 L207.3 435.1 L206.3 435.1 L205.3 435.1 L204.3 435.1 L203.3 435.1 L202.3 435.1 L201.3 435.1Z" fill="#3a8a0a"/><rect x="200.8" y="445.92" width="456.8" height="23.28" fill="#11161a"/><rect x="200.8" y="446.72" width="456.8" height="20.50" fill="#6fe214"/><path d="M201.3 456.6 L202.3 456.6 L203.3 456.6 L204.3 456.6 L205.3 456.6 L206.3 456.6 L207.3 456.6 L208.3 456.6 L209.3 456.6 L210.3 456.6 L211.3 456.6 L212.3 456.5 L213.3 456.1 L214.3 456.2 L215.3 456.0 L216.3 456.3 L217.3 456.3 L218.3 456.1 L219.3 456.2 L220.3 456.3 L221.3 456.2 L222.3 456.3 L223.3 456.1 L224.3 456.4 L225.3 456.3 L226.3 456.1 L227.3 456.3 L228.3 456.3 L229.3 456.1 L230.3 456.2 L231.3 456.4 L232.3 456.2 L233.3 456.2 L234.3 456.4 L235.3 456.2 L236.3 456.4 L237.3 456.3 L238.3 456.4 L239.3 456.4 L240.3 456.0 L241.3 456.3 L242.3 456.0 L243.3 456.3 L244.3 456.2 L245.3 456.1 L246.3 456.4 L247.3 456.6 L248.3 456.6 L249.3 456.6 L250.3 456.6 L251.3 456.6 L252.3 456.6 L253.3 456.5 L254.3 456.2 L255.3 456.2 L256.3 456.4 L257.3 456.4 L258.3 456.1 L259.3 456.2 L260.3 456.4 L261.3 456.2 L262.3 456.3 L263.3 456.1 L264.3 456.2 L265.3 456.4 L266.3 456.1 L267.3 456.4 L268.3 456.3 L269.3 456.4 L270.3 456.1 L271.3 456.4 L272.3 456.2 L273.3 456.4 L274.3 456.2 L275.3 456.2 L276.3 456.2 L277.3 456.2 L278.3 456.2 L279.3 456.3 L280.3 456.2 L281.3 456.4 L282.3 456.2 L283.3 456.3 L284.3 456.1 L285.3 456.0 L286.3 456.4 L287.3 456.4 L288.3 456.1 L289.3 456.2 L290.3 456.4 L291.3 456.1 L292.3 456.0 L293.3 456.3 L294.3 456.3 L295.3 456.4 L296.3 455.7 L297.3 455.2 L298.3 455.2 L299.3 455.3 L300.3 455.0 L301.3 455.1 L302.3 455.2 L303.3 455.2 L304.3 456.0 L305.3 456.5 L306.3 456.1 L307.3 456.3 L308.3 456.4 L309.3 456.1 L310.3 456.4 L311.3 456.4 L312.3 456.5 L313.3 456.5 L314.3 456.4 L315.3 456.4 L316.3 456.2 L317.3 456.4 L318.3 456.4 L319.3 456.3 L320.3 456.2 L321.3 456.4 L322.3 456.2 L323.3 456.4 L324.3 456.3 L325.3 456.3 L326.3 456.1 L327.3 456.2 L328.3 456.3 L329.3 456.2 L330.3 456.4 L331.3 456.4 L332.3 456.4 L333.3 456.6 L334.3 456.6 L335.3 456.6 L336.3 456.6 L337.3 456.6 L338.3 456.6 L339.3 456.6 L340.3 456.6 L341.3 456.6 L342.3 456.6 L343.3 456.6 L344.3 456.6 L345.3 456.6 L346.3 456.6 L347.3 456.6 L348.3 456.6 L349.3 456.6 L350.3 456.6 L351.3 456.6 L352.3 456.6 L353.3 456.6 L354.3 456.6 L355.3 456.6 L356.3 456.6 L357.3 456.6 L358.3 456.6 L359.3 456.6 L360.3 456.6 L361.3 456.6 L362.3 456.6 L363.3 456.6 L364.3 456.6 L365.3 456.6 L366.3 456.6 L367.3 456.6 L368.3 456.6 L369.3 456.6 L370.3 456.6 L371.3 456.6 L372.3 456.6 L373.3 456.2 L374.3 455.7 L375.3 455.5 L376.3 455.2 L377.3 455.3 L378.3 455.5 L379.3 455.2 L380.3 455.4 L381.3 455.5 L382.3 455.5 L383.3 455.6 L384.3 455.5 L385.3 455.3 L386.3 455.6 L387.3 455.5 L388.3 455.4 L389.3 455.4 L390.3 455.4 L391.3 455.2 L392.3 455.9 L393.3 456.2 L394.3 456.5 L395.3 456.5 L396.3 456.4 L397.3 456.5 L398.3 456.2 L399.3 456.5 L400.3 456.3 L401.3 456.4 L402.3 456.4 L403.3 456.6 L404.3 456.6 L405.3 456.6 L406.3 456.6 L407.3 456.6 L408.3 456.6 L409.3 456.6 L410.3 456.6 L411.3 456.6 L412.3 456.6 L413.3 456.6 L414.3 456.6 L415.3 456.6 L416.3 456.6 L417.3 456.6 L418.3 456.6 L419.3 456.6 L420.3 456.6 L421.3 456.6 L422.3 456.6 L423.3 456.6 L424.3 456.6 L425.3 456.6 L426.3 456.6 L427.3 456.6 L428.3 456.6 L429.3 456.6 L430.3 456.6 L431.3 456.6 L432.3 456.6 L433.3 456.6 L434.3 456.6 L435.3 456.6 L436.3 456.6 L437.3 456.6 L438.3 456.6 L439.3 456.6 L440.3 456.6 L441.3 456.6 L442.3 456.6 L443.3 456.6 L444.3 456.6 L445.3 456.6 L446.3 456.6 L447.3 456.6 L448.3 456.6 L449.3 456.6 L450.3 456.6 L451.3 456.6 L452.3 456.6 L453.3 456.6 L454.3 456.6 L455.3 456.6 L456.3 456.6 L457.3 456.6 L458.3 456.6 L459.3 456.6 L460.3 456.6 L461.3 456.6 L462.3 456.6 L463.3 456.6 L464.3 456.6 L465.3 456.6 L466.3 456.6 L467.3 456.6 L468.3 456.6 L469.3 456.6 L470.3 456.6 L471.3 456.6 L472.3 456.6 L473.3 456.6 L474.3 456.6 L475.3 456.6 L476.3 456.6 L477.3 456.6 L478.3 456.6 L479.3 456.6 L480.3 456.6 L481.3 456.6 L482.3 456.0 L483.3 455.6 L484.3 455.3 L485.3 455.5 L486.3 455.5 L487.3 456.2 L488.3 456.5 L489.3 456.4 L490.3 456.3 L491.3 456.1 L492.3 456.2 L493.3 456.5 L494.3 456.2 L495.3 456.1 L496.3 456.3 L497.3 456.6 L498.3 456.6 L499.3 456.6 L500.3 456.6 L501.3 456.6 L502.3 456.6 L503.3 456.6 L504.3 456.6 L505.3 456.6 L506.3 456.6 L507.3 456.6 L508.3 456.6 L509.3 456.6 L510.3 456.6 L511.3 456.6 L512.3 456.6 L513.3 456.6 L514.3 456.6 L515.3 456.6 L516.3 456.6 L517.3 456.6 L518.3 456.6 L519.3 456.6 L520.3 456.6 L521.3 456.6 L522.3 456.6 L523.3 456.6 L524.3 456.6 L525.3 456.6 L526.3 456.6 L527.3 456.6 L528.3 456.6 L529.3 456.6 L530.3 456.6 L531.3 456.6 L532.3 456.6 L533.3 456.6 L534.3 456.6 L535.3 456.6 L536.3 456.6 L537.3 456.6 L538.3 456.6 L539.3 456.6 L540.3 456.6 L541.3 456.6 L542.3 456.6 L543.3 456.6 L544.3 456.6 L545.3 456.6 L546.3 456.6 L547.3 456.6 L548.3 456.6 L549.3 456.6 L550.3 456.6 L551.3 456.6 L552.3 456.6 L553.3 456.6 L554.3 456.6 L555.3 456.6 L556.3 456.6 L557.3 456.6 L558.3 456.6 L559.3 456.3 L560.3 456.1 L561.3 455.8 L562.3 455.9 L563.3 455.9 L564.3 455.9 L565.3 456.3 L566.3 455.9 L567.3 456.2 L568.3 456.2 L569.3 456.1 L570.3 456.0 L571.3 456.3 L572.3 456.1 L573.3 455.9 L574.3 456.1 L575.3 456.0 L576.3 456.2 L577.3 455.8 L578.3 456.2 L579.3 456.0 L580.3 456.0 L581.3 456.3 L582.3 455.8 L583.3 456.2 L584.3 455.8 L585.3 455.9 L586.3 455.9 L587.3 455.9 L588.3 456.1 L589.3 456.1 L590.3 456.1 L591.3 455.9 L592.3 456.3 L593.3 456.2 L594.3 455.8 L595.3 455.9 L596.3 456.0 L597.3 455.8 L598.3 456.0 L599.3 455.9 L600.3 456.1 L601.3 455.9 L602.3 456.3 L603.3 456.1 L604.3 456.0 L605.3 456.3 L606.3 455.8 L607.3 454.8 L608.3 454.6 L609.3 455.0 L610.3 455.1 L611.3 455.2 L612.3 454.7 L613.3 455.8 L614.3 456.4 L615.3 456.1 L616.3 456.2 L617.3 456.2 L618.3 456.2 L619.3 456.2 L620.3 455.9 L621.3 456.2 L622.3 456.4 L623.3 456.6 L624.3 456.6 L625.3 456.6 L626.3 456.6 L627.3 456.6 L628.3 456.6 L629.3 456.6 L630.3 456.4 L631.3 456.0 L632.3 456.6 L633.3 456.6 L634.3 456.6 L635.3 456.6 L636.3 456.6 L637.3 456.6 L638.3 456.4 L639.3 456.0 L640.3 456.6 L641.3 456.6 L642.3 456.6 L643.3 456.6 L644.3 456.6 L645.3 456.6 L646.3 456.4 L647.3 456.0 L648.3 456.6 L649.3 456.6 L650.3 456.6 L651.3 456.6 L652.3 456.4 L653.3 456.0 L654.3 456.6 L655.3 456.6 L656.3 456.6 L656.3 457.6 L655.3 457.6 L654.3 457.6 L653.3 458.2 L652.3 457.8 L651.3 457.6 L650.3 457.6 L649.3 457.6 L648.3 457.6 L647.3 458.2 L646.3 457.8 L645.3 457.6 L644.3 457.6 L643.3 457.6 L642.3 457.6 L641.3 457.6 L640.3 457.6 L639.3 458.2 L638.3 457.8 L637.3 457.6 L636.3 457.6 L635.3 457.6 L634.3 457.6 L633.3 457.6 L632.3 457.6 L631.3 458.2 L630.3 457.8 L629.3 457.6 L628.3 457.6 L627.3 457.6 L626.3 457.6 L625.3 457.6 L624.3 457.6 L623.3 457.6 L622.3 457.8 L621.3 458.1 L620.3 458.4 L619.3 458.1 L618.3 458.1 L617.3 458.0 L616.3 458.0 L615.3 458.2 L614.3 457.9 L613.3 458.5 L612.3 459.5 L611.3 459.0 L610.3 459.1 L609.3 459.3 L608.3 459.6 L607.3 459.4 L606.3 458.4 L605.3 458.0 L604.3 458.2 L603.3 458.2 L602.3 458.0 L601.3 458.4 L600.3 458.2 L599.3 458.3 L598.3 458.2 L597.3 458.4 L596.3 458.3 L595.3 458.3 L594.3 458.4 L593.3 458.0 L592.3 458.0 L591.3 458.4 L590.3 458.1 L589.3 458.2 L588.3 458.1 L587.3 458.4 L586.3 458.4 L585.3 458.4 L584.3 458.4 L583.3 458.1 L582.3 458.4 L581.3 457.9 L580.3 458.3 L579.3 458.3 L578.3 458.1 L577.3 458.4 L576.3 458.1 L575.3 458.2 L574.3 458.2 L573.3 458.3 L572.3 458.2 L571.3 457.9 L570.3 458.2 L569.3 458.1 L568.3 458.0 L567.3 458.1 L566.3 458.3 L565.3 458.0 L564.3 458.4 L563.3 458.3 L562.3 458.4 L561.3 458.4 L560.3 458.1 L559.3 458.0 L558.3 457.6 L557.3 457.6 L556.3 457.6 L555.3 457.6 L554.3 457.6 L553.3 457.6 L552.3 457.6 L551.3 457.6 L550.3 457.6 L549.3 457.6 L548.3 457.6 L547.3 457.6 L546.3 457.6 L545.3 457.6 L544.3 457.6 L543.3 457.6 L542.3 457.6 L541.3 457.6 L540.3 457.6 L539.3 457.6 L538.3 457.6 L537.3 457.6 L536.3 457.6 L535.3 457.6 L534.3 457.6 L533.3 457.6 L532.3 457.6 L531.3 457.6 L530.3 457.6 L529.3 457.6 L528.3 457.6 L527.3 457.6 L526.3 457.6 L525.3 457.6 L524.3 457.6 L523.3 457.6 L522.3 457.6 L521.3 457.6 L520.3 457.6 L519.3 457.6 L518.3 457.6 L517.3 457.6 L516.3 457.6 L515.3 457.6 L514.3 457.6 L513.3 457.6 L512.3 457.6 L511.3 457.6 L510.3 457.6 L509.3 457.6 L508.3 457.6 L507.3 457.6 L506.3 457.6 L505.3 457.6 L504.3 457.6 L503.3 457.6 L502.3 457.6 L501.3 457.6 L500.3 457.6 L499.3 457.6 L498.3 457.6 L497.3 457.7 L496.3 457.9 L495.3 458.1 L494.3 458.0 L493.3 457.7 L492.3 458.1 L491.3 458.1 L490.3 457.9 L489.3 457.8 L488.3 457.8 L487.3 458.1 L486.3 458.7 L485.3 458.8 L484.3 458.9 L483.3 458.7 L482.3 458.2 L481.3 457.6 L480.3 457.6 L479.3 457.6 L478.3 457.6 L477.3 457.6 L476.3 457.6 L475.3 457.6 L474.3 457.6 L473.3 457.6 L472.3 457.6 L471.3 457.6 L470.3 457.6 L469.3 457.6 L468.3 457.6 L467.3 457.6 L466.3 457.6 L465.3 457.6 L464.3 457.6 L463.3 457.6 L462.3 457.6 L461.3 457.6 L460.3 457.6 L459.3 457.6 L458.3 457.6 L457.3 457.6 L456.3 457.6 L455.3 457.6 L454.3 457.6 L453.3 457.6 L452.3 457.6 L451.3 457.6 L450.3 457.6 L449.3 457.6 L448.3 457.6 L447.3 457.6 L446.3 457.6 L445.3 457.6 L444.3 457.6 L443.3 457.6 L442.3 457.6 L441.3 457.6 L440.3 457.6 L439.3 457.6 L438.3 457.6 L437.3 457.6 L436.3 457.6 L435.3 457.6 L434.3 457.6 L433.3 457.6 L432.3 457.6 L431.3 457.6 L430.3 457.6 L429.3 457.6 L428.3 457.6 L427.3 457.6 L426.3 457.6 L425.3 457.6 L424.3 457.6 L423.3 457.6 L422.3 457.6 L421.3 457.6 L420.3 457.6 L419.3 457.6 L418.3 457.6 L417.3 457.6 L416.3 457.6 L415.3 457.6 L414.3 457.6 L413.3 457.6 L412.3 457.6 L411.3 457.6 L410.3 457.6 L409.3 457.6 L408.3 457.6 L407.3 457.6 L406.3 457.6 L405.3 457.6 L404.3 457.6 L403.3 457.6 L402.3 457.8 L401.3 457.8 L400.3 458.0 L399.3 457.8 L398.3 458.0 L397.3 457.8 L396.3 457.8 L395.3 457.8 L394.3 457.8 L393.3 458.0 L392.3 458.4 L391.3 459.0 L390.3 458.8 L389.3 458.9 L388.3 458.8 L387.3 458.7 L386.3 458.7 L385.3 459.0 L384.3 458.7 L383.3 458.6 L382.3 458.7 L381.3 458.8 L380.3 458.8 L379.3 459.1 L378.3 458.7 L377.3 458.9 L376.3 459.1 L375.3 458.8 L374.3 458.5 L373.3 458.0 L372.3 457.6 L371.3 457.6 L370.3 457.6 L369.3 457.6 L368.3 457.6 L367.3 457.6 L366.3 457.6 L365.3 457.6 L364.3 457.6 L363.3 457.6 L362.3 457.6 L361.3 457.6 L360.3 457.6 L359.3 457.6 L358.3 457.6 L357.3 457.6 L356.3 457.6 L355.3 457.6 L354.3 457.6 L353.3 457.6 L352.3 457.6 L351.3 457.6 L350.3 457.6 L349.3 457.6 L348.3 457.6 L347.3 457.6 L346.3 457.6 L345.3 457.6 L344.3 457.6 L343.3 457.6 L342.3 457.6 L341.3 457.6 L340.3 457.6 L339.3 457.6 L338.3 457.6 L337.3 457.6 L336.3 457.6 L335.3 457.6 L334.3 457.6 L333.3 457.6 L332.3 457.9 L331.3 457.9 L330.3 457.9 L329.3 458.1 L328.3 457.9 L327.3 458.0 L326.3 458.1 L325.3 458.0 L324.3 457.9 L323.3 457.9 L322.3 458.0 L321.3 457.8 L320.3 458.1 L319.3 458.0 L318.3 457.8 L317.3 457.8 L316.3 458.1 L315.3 457.8 L314.3 457.8 L313.3 457.8 L312.3 457.7 L311.3 457.8 L310.3 457.9 L309.3 458.1 L308.3 457.8 L307.3 458.0 L306.3 458.1 L305.3 457.7 L304.3 458.3 L303.3 459.1 L302.3 459.0 L301.3 459.1 L300.3 459.2 L299.3 459.0 L298.3 459.0 L297.3 459.0 L296.3 458.5 L295.3 457.8 L294.3 457.9 L293.3 458.0 L292.3 458.2 L291.3 458.1 L290.3 457.8 L289.3 458.0 L288.3 458.1 L287.3 457.9 L286.3 457.8 L285.3 458.2 L284.3 458.2 L283.3 457.9 L282.3 458.0 L281.3 457.8 L280.3 458.1 L279.3 458.0 L278.3 458.0 L277.3 458.0 L276.3 458.0 L275.3 458.1 L274.3 458.0 L273.3 457.8 L272.3 458.0 L271.3 457.8 L270.3 458.1 L269.3 457.8 L268.3 457.9 L267.3 457.8 L266.3 458.1 L265.3 457.8 L264.3 458.0 L263.3 458.1 L262.3 457.9 L261.3 458.0 L260.3 457.9 L259.3 458.0 L258.3 458.2 L257.3 457.8 L256.3 457.9 L255.3 458.1 L254.3 458.0 L253.3 457.7 L252.3 457.6 L251.3 457.6 L250.3 457.6 L249.3 457.6 L248.3 457.6 L247.3 457.6 L246.3 457.9 L245.3 458.2 L244.3 458.1 L243.3 458.0 L242.3 458.2 L241.3 458.0 L240.3 458.2 L239.3 457.9 L238.3 457.8 L237.3 457.9 L236.3 457.9 L235.3 458.1 L234.3 457.9 L233.3 458.1 L232.3 458.0 L231.3 457.9 L230.3 458.1 L229.3 458.1 L228.3 457.9 L227.3 458.0 L226.3 458.2 L225.3 457.9 L224.3 457.8 L223.3 458.1 L222.3 458.0 L221.3 458.1 L220.3 457.9 L219.3 458.1 L218.3 458.1 L217.3 457.9 L216.3 457.9 L215.3 458.2 L214.3 458.1 L213.3 458.1 L212.3 457.7 L211.3 457.6 L210.3 457.6 L209.3 457.6 L208.3 457.6 L207.3 457.6 L206.3 457.6 L205.3 457.6 L204.3 457.6 L203.3 457.6 L202.3 457.6 L201.3 457.6Z" fill="#3a8a0a"/><rect x="200.8" y="468.40" width="456.8" height="18.10" fill="#11161a"/><rect x="200.8" y="469.20" width="456.8" height="17.30" fill="#f6152f"/><path d="M201.3 478.8 L202.3 479.1 L203.3 479.1 L204.3 479.1 L205.3 478.9 L206.3 478.8 L207.3 478.8 L208.3 478.9 L209.3 478.9 L210.3 478.9 L211.3 479.0 L212.3 479.0 L213.3 479.1 L214.3 479.1 L215.3 478.8 L216.3 478.9 L217.3 478.8 L218.3 478.9 L219.3 478.9 L220.3 479.1 L221.3 478.8 L222.3 479.0 L223.3 478.8 L224.3 478.9 L225.3 478.9 L226.3 478.9 L227.3 478.9 L228.3 479.0 L229.3 478.9 L230.3 479.0 L231.3 478.9 L232.3 478.8 L233.3 478.8 L234.3 478.9 L235.3 478.9 L236.3 479.1 L237.3 478.9 L238.3 479.0 L239.3 479.0 L240.3 478.8 L241.3 479.0 L242.3 478.9 L243.3 479.1 L244.3 478.9 L245.3 478.8 L246.3 478.9 L247.3 478.9 L248.3 478.9 L249.3 478.9 L250.3 479.0 L251.3 479.0 L252.3 478.8 L253.3 478.9 L254.3 478.8 L255.3 479.0 L256.3 479.1 L257.3 479.0 L258.3 478.9 L259.3 479.1 L260.3 479.1 L261.3 478.9 L262.3 479.1 L263.3 479.1 L264.3 478.8 L265.3 478.8 L266.3 478.8 L267.3 479.0 L268.3 478.8 L269.3 479.0 L270.3 478.9 L271.3 479.0 L272.3 478.8 L273.3 479.1 L274.3 479.1 L275.3 479.1 L276.3 478.9 L277.3 479.1 L278.3 478.9 L279.3 478.9 L280.3 478.9 L281.3 478.9 L282.3 478.9 L283.3 479.0 L284.3 479.0 L285.3 479.1 L286.3 479.0 L287.3 478.9 L288.3 479.0 L289.3 478.8 L290.3 478.9 L291.3 479.0 L292.3 478.8 L293.3 479.0 L294.3 479.0 L295.3 479.1 L296.3 478.9 L297.3 479.1 L298.3 479.1 L299.3 478.8 L300.3 478.8 L301.3 479.0 L302.3 478.9 L303.3 479.0 L304.3 479.1 L305.3 479.1 L306.3 478.9 L307.3 478.9 L308.3 479.0 L309.3 478.8 L310.3 478.8 L311.3 479.1 L312.3 479.1 L313.3 478.9 L314.3 478.8 L315.3 478.9 L316.3 478.9 L317.3 478.9 L318.3 478.9 L319.3 479.1 L320.3 478.9 L321.3 478.9 L322.3 478.9 L323.3 478.8 L324.3 478.9 L325.3 479.1 L326.3 478.9 L327.3 479.1 L328.3 478.9 L329.3 478.8 L330.3 479.1 L331.3 479.1 L332.3 478.9 L333.3 478.8 L334.3 479.1 L335.3 478.9 L336.3 478.9 L337.3 479.1 L338.3 478.9 L339.3 478.8 L340.3 479.0 L341.3 479.1 L342.3 479.1 L343.3 478.9 L344.3 478.8 L345.3 479.1 L346.3 478.9 L347.3 479.0 L348.3 479.0 L349.3 478.9 L350.3 479.0 L351.3 479.0 L352.3 479.0 L353.3 478.9 L354.3 478.9 L355.3 479.0 L356.3 479.0 L357.3 479.1 L358.3 478.9 L359.3 479.0 L360.3 479.1 L361.3 478.8 L362.3 478.9 L363.3 478.9 L364.3 479.0 L365.3 479.1 L366.3 479.1 L367.3 478.9 L368.3 478.8 L369.3 479.0 L370.3 479.0 L371.3 479.0 L372.3 478.9 L373.3 478.9 L374.3 478.9 L375.3 479.1 L376.3 478.9 L377.3 479.0 L378.3 478.8 L379.3 478.9 L380.3 478.9 L381.3 478.8 L382.3 478.8 L383.3 479.1 L384.3 478.8 L385.3 478.9 L386.3 479.0 L387.3 479.0 L388.3 478.9 L389.3 478.9 L390.3 478.9 L391.3 479.0 L392.3 478.8 L393.3 479.0 L394.3 478.9 L395.3 479.1 L396.3 479.1 L397.3 479.0 L398.3 478.9 L399.3 478.9 L400.3 479.0 L401.3 479.0 L402.3 478.9 L403.3 478.8 L404.3 479.0 L405.3 478.9 L406.3 479.1 L407.3 479.0 L408.3 479.1 L409.3 478.8 L410.3 479.0 L411.3 478.9 L412.3 478.8 L413.3 479.0 L414.3 479.0 L415.3 478.9 L416.3 478.9 L417.3 478.8 L418.3 479.0 L419.3 479.0 L420.3 479.1 L421.3 478.9 L422.3 478.8 L423.3 478.9 L424.3 479.1 L425.3 478.8 L426.3 479.0 L427.3 478.8 L428.3 479.1 L429.3 479.0 L430.3 479.1 L431.3 479.0 L432.3 479.1 L433.3 478.9 L434.3 479.0 L435.3 478.9 L436.3 479.0 L437.3 479.0 L438.3 479.1 L439.3 479.1 L440.3 479.1 L441.3 478.9 L442.3 479.1 L443.3 478.8 L444.3 478.9 L445.3 478.9 L446.3 479.0 L447.3 478.8 L448.3 478.9 L449.3 479.1 L450.3 479.0 L451.3 479.1 L452.3 479.0 L453.3 479.1 L454.3 479.1 L455.3 478.9 L456.3 479.0 L457.3 479.0 L458.3 478.9 L459.3 479.0 L460.3 479.1 L461.3 478.9 L462.3 478.9 L463.3 479.1 L464.3 479.1 L465.3 478.8 L466.3 479.0 L467.3 479.1 L468.3 479.1 L469.3 478.9 L470.3 479.1 L471.3 479.1 L472.3 478.9 L473.3 479.0 L474.3 479.1 L475.3 479.1 L476.3 479.1 L477.3 479.1 L478.3 479.0 L479.3 479.0 L480.3 479.1 L481.3 478.9 L482.3 478.9 L483.3 479.1 L484.3 478.9 L485.3 478.9 L486.3 479.1 L487.3 478.9 L488.3 479.0 L489.3 478.8 L490.3 479.0 L491.3 478.9 L492.3 478.9 L493.3 479.1 L494.3 478.9 L495.3 479.1 L496.3 479.0 L497.3 479.0 L498.3 479.1 L499.3 478.9 L500.3 479.1 L501.3 479.0 L502.3 479.1 L503.3 478.9 L504.3 478.8 L505.3 479.0 L506.3 479.1 L507.3 478.8 L508.3 478.8 L509.3 478.9 L510.3 478.8 L511.3 478.9 L512.3 478.8 L513.3 478.8 L514.3 479.0 L515.3 479.0 L516.3 478.9 L517.3 478.8 L518.3 479.1 L519.3 479.0 L520.3 478.9 L521.3 479.0 L522.3 479.0 L523.3 478.9 L524.3 478.8 L525.3 478.9 L526.3 478.8 L527.3 478.8 L528.3 479.0 L529.3 478.9 L530.3 479.1 L531.3 479.1 L532.3 479.1 L533.3 479.1 L534.3 479.1 L535.3 479.0 L536.3 479.0 L537.3 478.9 L538.3 479.0 L539.3 479.0 L540.3 478.9 L541.3 479.0 L542.3 479.0 L543.3 478.9 L544.3 478.9 L545.3 479.0 L546.3 478.9 L547.3 479.0 L548.3 478.8 L549.3 479.0 L550.3 479.0 L551.3 478.9 L552.3 479.0 L553.3 478.8 L554.3 479.1 L555.3 478.9 L556.3 479.1 L557.3 479.1 L558.3 479.0 L559.3 479.0 L560.3 479.1 L561.3 478.8 L562.3 478.9 L563.3 479.1 L564.3 478.8 L565.3 479.0 L566.3 478.8 L567.3 479.0 L568.3 478.8 L569.3 479.0 L570.3 479.1 L571.3 479.1 L572.3 478.9 L573.3 479.0 L574.3 479.0 L575.3 478.9 L576.3 479.1 L577.3 479.0 L578.3 479.0 L579.3 479.1 L580.3 479.0 L581.3 479.1 L582.3 478.9 L583.3 478.9 L584.3 478.9 L585.3 478.9 L586.3 478.9 L587.3 478.9 L588.3 478.9 L589.3 479.1 L590.3 479.0 L591.3 479.0 L592.3 479.0 L593.3 479.1 L594.3 478.8 L595.3 479.0 L596.3 479.0 L597.3 478.9 L598.3 479.1 L599.3 479.1 L600.3 478.8 L601.3 478.9 L602.3 479.0 L603.3 478.9 L604.3 478.8 L605.3 479.0 L606.3 478.8 L607.3 478.9 L608.3 479.1 L609.3 478.9 L610.3 479.0 L611.3 479.0 L612.3 478.9 L613.3 478.9 L614.3 478.9 L615.3 478.8 L616.3 479.1 L617.3 478.8 L618.3 478.9 L619.3 479.1 L620.3 479.1 L621.3 479.1 L622.3 478.9 L623.3 478.9 L624.3 479.0 L625.3 478.9 L626.3 478.9 L627.3 478.9 L628.3 478.8 L629.3 478.8 L630.3 479.0 L631.3 479.0 L632.3 478.8 L633.3 478.9 L634.3 478.8 L635.3 479.1 L636.3 479.1 L637.3 479.1 L638.3 478.8 L639.3 479.0 L640.3 478.9 L641.3 478.8 L642.3 478.9 L643.3 479.0 L644.3 479.0 L645.3 479.0 L646.3 479.1 L647.3 478.9 L648.3 478.9 L649.3 479.1 L650.3 478.9 L651.3 479.1 L652.3 478.9 L653.3 479.1 L654.3 478.9 L655.3 479.1 L656.3 478.8 L656.3 480.4 L655.3 480.1 L654.3 480.3 L653.3 480.1 L652.3 480.3 L651.3 480.1 L650.3 480.3 L649.3 480.1 L648.3 480.3 L647.3 480.3 L646.3 480.1 L645.3 480.2 L644.3 480.2 L643.3 480.2 L642.3 480.3 L641.3 480.4 L640.3 480.3 L639.3 480.2 L638.3 480.4 L637.3 480.1 L636.3 480.1 L635.3 480.1 L634.3 480.4 L633.3 480.3 L632.3 480.4 L631.3 480.2 L630.3 480.2 L629.3 480.4 L628.3 480.4 L627.3 480.3 L626.3 480.3 L625.3 480.3 L624.3 480.2 L623.3 480.3 L622.3 480.3 L621.3 480.1 L620.3 480.1 L619.3 480.1 L618.3 480.3 L617.3 480.4 L616.3 480.1 L615.3 480.4 L614.3 480.3 L613.3 480.3 L612.3 480.3 L611.3 480.2 L610.3 480.2 L609.3 480.3 L608.3 480.1 L607.3 480.3 L606.3 480.4 L605.3 480.2 L604.3 480.4 L603.3 480.3 L602.3 480.2 L601.3 480.3 L600.3 480.4 L599.3 480.1 L598.3 480.1 L597.3 480.3 L596.3 480.2 L595.3 480.2 L594.3 480.4 L593.3 480.1 L592.3 480.2 L591.3 480.2 L590.3 480.2 L589.3 480.1 L588.3 480.3 L587.3 480.3 L586.3 480.3 L585.3 480.3 L584.3 480.3 L583.3 480.3 L582.3 480.3 L581.3 480.1 L580.3 480.2 L579.3 480.1 L578.3 480.2 L577.3 480.2 L576.3 480.1 L575.3 480.3 L574.3 480.2 L573.3 480.2 L572.3 480.3 L571.3 480.1 L570.3 480.1 L569.3 480.2 L568.3 480.4 L567.3 480.2 L566.3 480.4 L565.3 480.2 L564.3 480.4 L563.3 480.1 L562.3 480.3 L561.3 480.4 L560.3 480.1 L559.3 480.2 L558.3 480.2 L557.3 480.1 L556.3 480.1 L555.3 480.3 L554.3 480.1 L553.3 480.4 L552.3 480.2 L551.3 480.3 L550.3 480.2 L549.3 480.2 L548.3 480.4 L547.3 480.2 L546.3 480.3 L545.3 480.2 L544.3 480.3 L543.3 480.3 L542.3 480.2 L541.3 480.2 L540.3 480.3 L539.3 480.2 L538.3 480.2 L537.3 480.3 L536.3 480.2 L535.3 480.2 L534.3 480.1 L533.3 480.1 L532.3 480.1 L531.3 480.1 L530.3 480.1 L529.3 480.3 L528.3 480.2 L527.3 480.4 L526.3 480.4 L525.3 480.3 L524.3 480.4 L523.3 480.3 L522.3 480.2 L521.3 480.2 L520.3 480.3 L519.3 480.2 L518.3 480.1 L517.3 480.4 L516.3 480.3 L515.3 480.2 L514.3 480.2 L513.3 480.4 L512.3 480.4 L511.3 480.3 L510.3 480.4 L509.3 480.3 L508.3 480.4 L507.3 480.4 L506.3 480.1 L505.3 480.2 L504.3 480.4 L503.3 480.3 L502.3 480.1 L501.3 480.2 L500.3 480.1 L499.3 480.3 L498.3 480.1 L497.3 480.2 L496.3 480.2 L495.3 480.1 L494.3 480.3 L493.3 480.1 L492.3 480.3 L491.3 480.3 L490.3 480.2 L489.3 480.4 L488.3 480.2 L487.3 480.3 L486.3 480.1 L485.3 480.3 L484.3 480.3 L483.3 480.1 L482.3 480.3 L481.3 480.3 L480.3 480.1 L479.3 480.2 L478.3 480.2 L477.3 480.1 L476.3 480.1 L475.3 480.1 L474.3 480.1 L473.3 480.2 L472.3 480.3 L471.3 480.1 L470.3 480.1 L469.3 480.3 L468.3 480.1 L467.3 480.1 L466.3 480.2 L465.3 480.4 L464.3 480.1 L463.3 480.1 L462.3 480.3 L461.3 480.3 L460.3 480.1 L459.3 480.2 L458.3 480.3 L457.3 480.2 L456.3 480.2 L455.3 480.3 L454.3 480.1 L453.3 480.1 L452.3 480.2 L451.3 480.1 L450.3 480.2 L449.3 480.1 L448.3 480.3 L447.3 480.4 L446.3 480.2 L445.3 480.3 L444.3 480.3 L443.3 480.4 L442.3 480.1 L441.3 480.3 L440.3 480.1 L439.3 480.1 L438.3 480.1 L437.3 480.2 L436.3 480.2 L435.3 480.3 L434.3 480.2 L433.3 480.3 L432.3 480.1 L431.3 480.2 L430.3 480.1 L429.3 480.2 L428.3 480.1 L427.3 480.4 L426.3 480.2 L425.3 480.4 L424.3 480.1 L423.3 480.3 L422.3 480.4 L421.3 480.3 L420.3 480.1 L419.3 480.2 L418.3 480.2 L417.3 480.4 L416.3 480.3 L415.3 480.3 L414.3 480.2 L413.3 480.2 L412.3 480.4 L411.3 480.3 L410.3 480.2 L409.3 480.4 L408.3 480.1 L407.3 480.2 L406.3 480.1 L405.3 480.3 L404.3 480.2 L403.3 480.4 L402.3 480.3 L401.3 480.2 L400.3 480.2 L399.3 480.3 L398.3 480.3 L397.3 480.2 L396.3 480.1 L395.3 480.1 L394.3 480.3 L393.3 480.2 L392.3 480.4 L391.3 480.2 L390.3 480.3 L389.3 480.3 L388.3 480.3 L387.3 480.2 L386.3 480.2 L385.3 480.3 L384.3 480.4 L383.3 480.1 L382.3 480.4 L381.3 480.4 L380.3 480.3 L379.3 480.3 L378.3 480.4 L377.3 480.2 L376.3 480.3 L375.3 480.1 L374.3 480.3 L373.3 480.3 L372.3 480.3 L371.3 480.2 L370.3 480.2 L369.3 480.2 L368.3 480.4 L367.3 480.3 L366.3 480.1 L365.3 480.1 L364.3 480.2 L363.3 480.3 L362.3 480.3 L361.3 480.4 L360.3 480.1 L359.3 480.2 L358.3 480.3 L357.3 480.1 L356.3 480.2 L355.3 480.2 L354.3 480.3 L353.3 480.3 L352.3 480.2 L351.3 480.2 L350.3 480.2 L349.3 480.3 L348.3 480.2 L347.3 480.2 L346.3 480.3 L345.3 480.1 L344.3 480.4 L343.3 480.3 L342.3 480.1 L341.3 480.1 L340.3 480.2 L339.3 480.4 L338.3 480.3 L337.3 480.1 L336.3 480.3 L335.3 480.3 L334.3 480.1 L333.3 480.4 L332.3 480.3 L331.3 480.1 L330.3 480.1 L329.3 480.4 L328.3 480.3 L327.3 480.1 L326.3 480.3 L325.3 480.1 L324.3 480.3 L323.3 480.4 L322.3 480.3 L321.3 480.3 L320.3 480.3 L319.3 480.1 L318.3 480.3 L317.3 480.3 L316.3 480.3 L315.3 480.3 L314.3 480.4 L313.3 480.3 L312.3 480.1 L311.3 480.1 L310.3 480.4 L309.3 480.4 L308.3 480.2 L307.3 480.3 L306.3 480.3 L305.3 480.1 L304.3 480.1 L303.3 480.2 L302.3 480.3 L301.3 480.2 L300.3 480.4 L299.3 480.4 L298.3 480.1 L297.3 480.1 L296.3 480.3 L295.3 480.1 L294.3 480.2 L293.3 480.2 L292.3 480.4 L291.3 480.2 L290.3 480.3 L289.3 480.4 L288.3 480.2 L287.3 480.3 L286.3 480.2 L285.3 480.1 L284.3 480.2 L283.3 480.2 L282.3 480.3 L281.3 480.3 L280.3 480.3 L279.3 480.3 L278.3 480.3 L277.3 480.1 L276.3 480.3 L275.3 480.1 L274.3 480.1 L273.3 480.1 L272.3 480.4 L271.3 480.2 L270.3 480.3 L269.3 480.2 L268.3 480.4 L267.3 480.2 L266.3 480.4 L265.3 480.4 L264.3 480.4 L263.3 480.1 L262.3 480.1 L261.3 480.3 L260.3 480.1 L259.3 480.1 L258.3 480.3 L257.3 480.2 L256.3 480.1 L255.3 480.2 L254.3 480.4 L253.3 480.3 L252.3 480.4 L251.3 480.2 L250.3 480.2 L249.3 480.3 L248.3 480.3 L247.3 480.3 L246.3 480.3 L245.3 480.4 L244.3 480.3 L243.3 480.1 L242.3 480.3 L241.3 480.2 L240.3 480.4 L239.3 480.2 L238.3 480.2 L237.3 480.3 L236.3 480.1 L235.3 480.3 L234.3 480.3 L233.3 480.4 L232.3 480.4 L231.3 480.3 L230.3 480.2 L229.3 480.3 L228.3 480.2 L227.3 480.3 L226.3 480.3 L225.3 480.3 L224.3 480.3 L223.3 480.4 L222.3 480.2 L221.3 480.4 L220.3 480.1 L219.3 480.3 L218.3 480.3 L217.3 480.4 L216.3 480.3 L215.3 480.4 L214.3 480.1 L213.3 480.1 L212.3 480.2 L211.3 480.2 L210.3 480.3 L209.3 480.3 L208.3 480.3 L207.3 480.4 L206.3 480.4 L205.3 480.3 L204.3 480.1 L203.3 480.1 L202.3 480.1 L201.3 480.4Z" fill="#8c0c18"/></svg>
<div class="a" style="left:3.8px;top:485px;width:195px;height:27.3px;background:#25282b"></div>
<div class="a" style="left:200.8px;top:486.5px;width:595.5px;height:25.8px;background:#25282b"></div>
<div class="a" style="left:657.3px;top:95.7px;width:1.9px;height:389.5px;background:#777a7d"></div>
<div class="a" style="left:201px;top:486.7px;width:526.2px;height:6.4px;background:#3d4043"><svg class="a" style="left:2.600px;top:1px" width="3" height="4.400" viewBox="0 0 3 4.400"><path d="M2.600 0.300L0.600 2.200L2.600 4.100" fill="none" stroke="#f0f0f0" stroke-width="1.100"/></svg><svg class="a" style="right:2.600px;top:1px" width="3" height="4.400" viewBox="0 0 3 4.400"><path d="M0.400 0.300L2.400 2.200L0.400 4.100" fill="none" stroke="#f0f0f0" stroke-width="1.100"/></svg><div class="a" style="left:36.900px;top:1.100px;width:15px;height:4.200px;border-radius:2px;background:#f4f4f4"></div></div>
<svg class="a" style="left:728px;top:486.200px" width="62" height="9" viewBox="0 0 62 9"><path d="M2.800 3.500H6.200L4.500 5.700Z" fill="#b8b8b8"/><path d="M12 4.500H14.500" stroke="#aaa" stroke-width="0.700"/><path d="M17.500 4.500H42.500" stroke="#9a9a9a" stroke-width="0.600"/><circle cx="30.500" cy="4.500" r="1.300" fill="#d8d8d8"/><path d="M47 4.500H50M48.500 3V6" stroke="#aaa" stroke-width="0.600"/></svg>
<div class="a" style="left:785.2px;top:150px;width:6.2px;height:286px;background:#3a3d40;border-radius:1px"><div class="a" style="left:1px;top:9px;width:4.200px;height:131px;border-radius:2px;background:#f4f4f4"></div><svg class="a" style="left:1.200px;top:2px" width="3.600" height="3" viewBox="0 0 4 3"><path d="M0.300 2.600L2 0.600L3.700 2.600" stroke="#eee" stroke-width="0.800" fill="none"/></svg><svg class="a" style="left:1.200px;top:280.300px" width="3.600" height="3" viewBox="0 0 4 3"><path d="M0.300 0.400L2 2.400L3.700 0.400" stroke="#eee" stroke-width="0.800" fill="none"/></svg></div>
<svg class="a" style="left:781.900px;top:115px" width="12" height="34" viewBox="0 0 12 34"><path d="M6 5V28.500" stroke="#77797c" stroke-width="0.800"/><circle cx="6" cy="29.900" r="1.400" fill="#c8c8c8"/></svg>
<svg class="a" style="left:781.400px;top:437px" width="12" height="50" viewBox="0 0 12 50"><path d="M4.900 2H8.100L6.500 4Z" fill="#b0b0b0"/><path d="M6.500 11V45" stroke="#5c5e61" stroke-width="0.700"/><circle cx="6.500" cy="17.500" r="1.300" fill="#d8d8d8"/><circle cx="6.500" cy="10.500" r="0.600" fill="#aaa"/><circle cx="6.500" cy="46" r="0.600" fill="#aaa"/></svg>
<svg class="a" style="left:7px;top:500px" width="6" height="7" viewBox="0 0 6 7"><path d="M0.500 0.800L5.200 3.500L0.500 6.200Z" fill="#e6e6e6"/></svg>
<div class="t" style="left:16.500px;top:500px;font-size:7px;font-weight:bold;color:#d8d8d8">Meter Bridge</div>
<div class="a" style="left:62px;top:503.1px;width:731px;height:0.7px;background:#3c3f42"></div>
</div></body></html>
